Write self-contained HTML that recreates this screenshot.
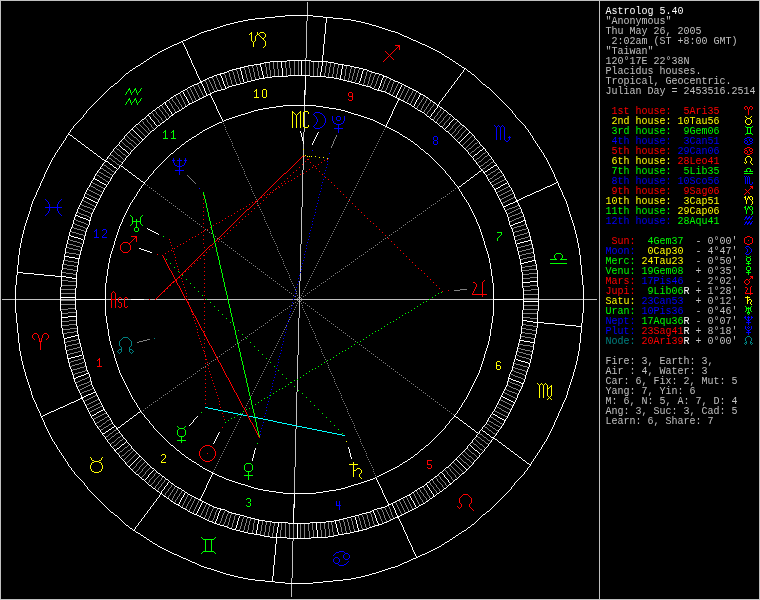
<!DOCTYPE html><html><head><meta charset="utf-8"><style>
html,body{margin:0;padding:0;background:#000;width:760px;height:600px;overflow:hidden}
.t{position:absolute;left:605.5px;height:10px;line-height:10px;font-family:"Liberation Mono";font-size:10px;white-space:pre}
#sb{position:absolute;left:0;top:0;width:760px;height:600px;filter:url(#crisp)}
</style></head><body><div style="position:relative;width:760px;height:600px"><svg width="760" height="600" viewBox="0 0 760 600" shape-rendering="crispEdges" style="position:absolute;left:0;top:0"><path fill="#c0c0c0" d="M0 0h760v1h-760zM0 1h1v598h-1zM599 1h1v598h-1zM759 1h1v598h-1zM307 2h1v13h-1zM307 16h1v5h-1zM306 21h1v37h-1zM305 58h1v2h-1zM305 90h1v5h-1zM304 106h1v5h-1zM304 112h1v15h-1zM304 128h1v4h-1zM303 132h1v9h-1zM303 144h1v5h-1zM303 150h1v5h-1zM303 156h1v14h-1zM302 170h1v37h-1zM301 207h1v37h-1zM300 244h1v28h-1zM300 273h1v8h-1zM299 281h1v18h-1zM2 299h13v1h-13zM16 299h44v1h-44zM61 299h14v1h-14zM106 299h5v1h-5zM116 299h2v1h-2zM119 299h5v1h-5zM125 299h6v1h-6zM144 299h5v1h-5zM150 299h5v1h-5zM156 299h29v1h-29zM186 299h1v1h-1zM188 299h16v1h-16zM205 299h1v1h-1zM207 299h20v1h-20zM228 299h65v1h-65zM294 299h5v1h-5zM300 299h129v1h-129zM430 299h63v1h-63zM524 299h14v1h-14zM539 299h44v1h-44zM584 299h13v1h-13zM299 300h1v18h-1zM298 318h1v37h-1zM297 355h1v24h-1zM297 380h1v12h-1zM296 392h1v33h-1zM296 426h1v3h-1zM295 429h1v38h-1zM294 467h1v26h-1zM293 504h1v4h-1zM293 539h1v2h-1zM292 541h1v37h-1zM291 578h1v5h-1zM291 584h1v13h-1zM0 599h760v1h-760z"/><path fill="#ffffff" d="M285 15h28v1h-28zM275 16h10v1h-10zM313 16h10v1h-10zM265 17h10v1h-10zM323 17h10v1h-10zM255 18h10v1h-10zM326 18h1v5h-1zM333 18h10v1h-10zM248 19h7v1h-7zM343 19h8v1h-8zM243 20h5v1h-5zM351 20h5v1h-5zM238 21h5v1h-5zM356 21h5v1h-5zM234 22h4v1h-4zM361 22h4v1h-4zM230 23h4v1h-4zM325 23h1v11h-1zM365 23h4v1h-4zM226 24h4v1h-4zM369 24h3v1h-3zM223 25h3v1h-3zM372 25h4v1h-4zM220 26h3v1h-3zM376 26h3v1h-3zM217 27h3v1h-3zM379 27h3v1h-3zM214 28h3v1h-3zM382 28h3v1h-3zM211 29h3v1h-3zM385 29h3v1h-3zM207 30h4v1h-4zM388 30h3v1h-3zM204 31h3v1h-3zM391 31h4v1h-4zM201 32h3v1h-3zM395 32h3v1h-3zM199 33h2v1h-2zM398 33h2v1h-2zM197 34h2v1h-2zM324 34h1v10h-1zM400 34h2v1h-2zM195 35h2v1h-2zM402 35h2v1h-2zM192 36h3v1h-3zM404 36h3v1h-3zM190 37h2v1h-2zM407 37h2v1h-2zM188 38h2v1h-2zM409 38h2v1h-2zM186 39h2v1h-2zM411 39h2v1h-2zM183 40h3v1h-3zM413 40h3v1h-3zM181 41h2v1h-2zM416 41h2v1h-2zM179 42h2v1h-2zM182 42h1v1h-1zM418 42h2v1h-2zM177 43h2v1h-2zM183 43h1v2h-1zM420 43h2v1h-2zM174 44h3v1h-3zM323 44h1v11h-1zM422 44h3v1h-3zM172 45h2v1h-2zM184 45h1v2h-1zM425 45h2v1h-2zM170 46h2v1h-2zM427 46h2v1h-2zM168 47h2v1h-2zM185 47h1v2h-1zM429 47h2v1h-2zM166 48h2v1h-2zM431 48h2v1h-2zM164 49h2v1h-2zM186 49h1v2h-1zM433 49h2v1h-2zM162 50h2v1h-2zM435 50h2v1h-2zM160 51h2v1h-2zM187 51h1v3h-1zM437 51h2v1h-2zM158 52h2v1h-2zM439 52h2v1h-2zM157 53h1v1h-1zM441 53h1v1h-1zM155 54h2v1h-2zM188 54h1v2h-1zM442 54h2v1h-2zM153 55h2v1h-2zM322 55h1v6h-1zM444 55h1v1h-1zM152 56h1v1h-1zM189 56h1v2h-1zM445 56h2v1h-2zM150 57h2v1h-2zM447 57h2v1h-2zM149 58h1v1h-1zM190 58h1v2h-1zM449 58h1v1h-1zM147 59h2v1h-2zM450 59h2v1h-2zM146 60h1v1h-1zM191 60h1v3h-1zM287 60h24v1h-24zM452 60h1v1h-1zM144 61h2v1h-2zM270 61h17v1h-17zM301 61h1v14h-1zM311 61h17v1h-17zM453 61h2v1h-2zM143 62h1v1h-1zM264 62h6v1h-6zM281 62h1v6h-1zM322 62h1v4h-1zM328 62h6v1h-6zM455 62h1v1h-1zM141 63h2v1h-2zM192 63h1v2h-1zM260 63h4v1h-4zM334 63h4v1h-4zM456 63h2v1h-2zM140 64h1v1h-1zM254 64h7v1h-7zM338 64h6v1h-6zM458 64h1v1h-1zM138 65h2v1h-2zM193 65h1v2h-1zM248 65h6v1h-6zM260 65h1v2h-1zM342 65h1v4h-1zM344 65h6v1h-6zM459 65h2v1h-2zM136 66h2v1h-2zM244 66h4v1h-4zM321 66h1v6h-1zM350 66h4v1h-4zM461 66h1v1h-1zM135 67h1v1h-1zM194 67h1v2h-1zM240 67h4v1h-4zM261 67h1v4h-1zM354 67h5v1h-5zM462 67h2v1h-2zM133 68h2v1h-2zM236 68h5v1h-5zM282 68h1v8h-1zM359 68h4v1h-4zM464 68h2v1h-2zM132 69h1v1h-1zM195 69h1v2h-1zM232 69h4v1h-4zM240 69h1v2h-1zM341 69h1v6h-1zM363 69h4v1h-4zM464 69h1v1h-1zM466 69h1v1h-1zM130 70h2v1h-2zM229 70h3v1h-3zM363 70h1v1h-1zM367 70h2v1h-2zM463 70h1v2h-1zM467 70h1v1h-1zM129 71h1v1h-1zM196 71h1v3h-1zM227 71h2v1h-2zM241 71h1v4h-1zM262 71h1v4h-1zM362 71h1v3h-1zM369 71h3v1h-3zM468 71h2v1h-2zM128 72h1v1h-1zM224 72h3v1h-3zM320 72h1v4h-1zM372 72h3v1h-3zM462 72h1v1h-1zM470 72h1v1h-1zM126 73h2v1h-2zM220 73h4v1h-4zM375 73h4v1h-4zM461 73h1v1h-1zM471 73h1v1h-1zM125 74h1v1h-1zM197 74h1v2h-1zM217 74h4v1h-4zM361 74h1v4h-1zM379 74h3v1h-3zM460 74h1v2h-1zM472 74h2v1h-2zM124 75h1v1h-1zM214 75h3v1h-3zM220 75h1v1h-1zM242 75h1v4h-1zM263 75h1v3h-1zM288 75h22v1h-22zM340 75h1v4h-1zM382 75h2v1h-2zM474 75h1v1h-1zM123 76h1v1h-1zM198 76h1v2h-1zM212 76h2v1h-2zM221 76h1v2h-1zM272 76h16v1h-16zM305 76h1v14h-1zM310 76h16v1h-16zM383 76h4v1h-4zM459 76h1v1h-1zM475 76h1v1h-1zM122 77h1v1h-1zM209 77h3v1h-3zM265 77h7v1h-7zM326 77h8v1h-8zM383 77h1v1h-1zM387 77h2v1h-2zM458 77h1v1h-1zM476 77h1v1h-1zM121 78h1v1h-1zM199 78h1v2h-1zM207 78h2v1h-2zM222 78h1v3h-1zM259 78h6v1h-6zM334 78h5v1h-5zM360 78h1v3h-1zM382 78h1v2h-1zM389 78h2v1h-2zM457 78h1v2h-1zM477 78h1v1h-1zM120 79h1v1h-1zM205 79h2v1h-2zM243 79h1v3h-1zM255 79h4v1h-4zM339 79h4v1h-4zM391 79h2v1h-2zM478 79h1v1h-1zM119 80h1v1h-1zM200 80h1v1h-1zM203 80h2v1h-2zM251 80h4v1h-4zM343 80h4v1h-4zM381 80h1v3h-1zM393 80h2v1h-2zM456 80h1v1h-1zM479 80h1v1h-1zM118 81h1v1h-1zM200 81h3v1h-3zM223 81h1v3h-1zM247 81h4v1h-4zM347 81h4v1h-4zM359 81h1v2h-1zM395 81h3v1h-3zM455 81h1v1h-1zM480 81h1v1h-1zM117 82h1v1h-1zM199 82h3v1h-3zM244 82h3v1h-3zM351 82h4v1h-4zM398 82h2v1h-2zM454 82h1v2h-1zM481 82h1v1h-1zM115 83h2v1h-2zM197 83h2v1h-2zM201 83h1v1h-1zM240 83h4v1h-4zM355 83h4v1h-4zM380 83h1v3h-1zM400 83h2v1h-2zM482 83h1v1h-1zM114 84h1v1h-1zM194 84h3v1h-3zM202 84h1v2h-1zM224 84h1v2h-1zM236 84h4v1h-4zM359 84h3v1h-3zM402 84h2v1h-2zM453 84h1v1h-1zM483 84h2v1h-2zM113 85h1v1h-1zM192 85h2v1h-2zM232 85h4v1h-4zM362 85h4v1h-4zM401 85h1v2h-1zM404 85h2v1h-2zM452 85h1v1h-1zM485 85h1v1h-1zM111 86h2v1h-2zM190 86h2v1h-2zM203 86h1v2h-1zM225 86h1v2h-1zM229 86h3v1h-3zM366 86h4v1h-4zM379 86h1v2h-1zM406 86h2v1h-2zM451 86h1v2h-1zM486 86h1v1h-1zM110 87h1v1h-1zM188 87h2v1h-2zM227 87h2v1h-2zM370 87h2v1h-2zM400 87h1v2h-1zM408 87h2v1h-2zM487 87h2v1h-2zM109 88h1v1h-1zM187 88h1v1h-1zM204 88h1v3h-1zM225 88h2v1h-2zM372 88h2v1h-2zM378 88h1v2h-1zM410 88h2v1h-2zM450 88h1v1h-1zM489 88h1v1h-1zM108 89h1v1h-1zM185 89h2v1h-2zM221 89h4v1h-4zM374 89h3v1h-3zM399 89h1v2h-1zM412 89h2v1h-2zM449 89h1v1h-1zM490 89h1v1h-1zM107 90h1v1h-1zM183 90h2v1h-2zM217 90h4v1h-4zM304 90h1v15h-1zM377 90h4v1h-4zM414 90h2v1h-2zM448 90h1v2h-1zM491 90h1v1h-1zM106 91h1v1h-1zM181 91h2v1h-2zM205 91h1v2h-1zM214 91h3v1h-3zM381 91h4v1h-4zM398 91h1v2h-1zM416 91h2v1h-2zM492 91h1v1h-1zM105 92h1v1h-1zM180 92h1v1h-1zM183 92h1v2h-1zM212 92h2v1h-2zM385 92h2v1h-2zM418 92h1v1h-1zM447 92h1v1h-1zM493 92h1v1h-1zM104 93h1v1h-1zM178 93h2v1h-2zM206 93h1v2h-1zM210 93h2v1h-2zM387 93h2v1h-2zM397 93h1v2h-1zM419 93h2v1h-2zM446 93h1v1h-1zM494 93h1v1h-1zM103 94h1v1h-1zM176 94h2v1h-2zM184 94h1v2h-1zM208 94h3v1h-3zM389 94h2v1h-2zM420 94h3v1h-3zM445 94h1v2h-1zM495 94h1v1h-1zM102 95h1v1h-1zM174 95h2v1h-2zM206 95h2v1h-2zM210 95h1v1h-1zM391 95h2v1h-2zM396 95h1v2h-1zM419 95h1v2h-1zM423 95h2v1h-2zM496 95h1v1h-1zM101 96h1v1h-1zM173 96h1v1h-1zM185 96h1v1h-1zM204 96h2v1h-2zM211 96h1v2h-1zM393 96h2v1h-2zM425 96h1v1h-1zM444 96h1v1h-1zM497 96h1v1h-1zM100 97h1v1h-1zM171 97h2v1h-2zM186 97h1v2h-1zM202 97h2v1h-2zM395 97h2v1h-2zM418 97h1v2h-1zM426 97h2v1h-2zM443 97h1v1h-1zM498 97h1v1h-1zM99 98h1v1h-1zM170 98h1v1h-1zM200 98h2v1h-2zM212 98h1v2h-1zM397 98h2v1h-2zM428 98h1v1h-1zM442 98h1v2h-1zM499 98h1v1h-1zM98 99h1v1h-1zM169 99h1v1h-1zM187 99h1v2h-1zM198 99h2v1h-2zM398 99h3v1h-3zM417 99h1v1h-1zM429 99h1v1h-1zM500 99h1v1h-1zM97 100h1v1h-1zM167 100h2v1h-2zM196 100h2v1h-2zM213 100h1v2h-1zM398 100h1v1h-1zM401 100h2v1h-2zM416 100h1v2h-1zM430 100h2v1h-2zM441 100h1v1h-1zM501 100h1v1h-1zM96 101h1v1h-1zM166 101h1v1h-1zM188 101h1v2h-1zM194 101h2v1h-2zM397 101h1v2h-1zM403 101h2v1h-2zM432 101h1v1h-1zM440 101h1v1h-1zM502 101h1v1h-1zM95 102h1v1h-1zM164 102h2v1h-2zM192 102h2v1h-2zM214 102h1v2h-1zM405 102h2v1h-2zM415 102h1v2h-1zM433 102h2v1h-2zM439 102h1v2h-1zM503 102h1v1h-1zM94 103h1v1h-1zM163 103h1v1h-1zM165 103h1v2h-1zM189 103h3v1h-3zM396 103h1v2h-1zM407 103h2v1h-2zM435 103h1v1h-1zM504 103h1v1h-1zM93 104h1v1h-1zM162 104h1v1h-1zM188 104h2v1h-2zM215 104h1v2h-1zM409 104h2v1h-2zM414 104h1v2h-1zM436 104h1v1h-1zM438 104h1v1h-1zM505 104h1v1h-1zM92 105h1v1h-1zM160 105h2v1h-2zM166 105h1v1h-1zM187 105h1v1h-1zM283 105h33v1h-33zM395 105h1v2h-1zM411 105h1v1h-1zM437 105h2v1h-2zM506 105h1v1h-1zM91 106h1v1h-1zM159 106h1v1h-1zM167 106h1v2h-1zM185 106h2v1h-2zM216 106h1v3h-1zM276 106h7v1h-7zM316 106h7v1h-7zM412 106h2v1h-2zM437 106h1v2h-1zM439 106h1v1h-1zM507 106h1v1h-1zM90 107h1v1h-1zM157 107h2v1h-2zM184 107h1v1h-1zM269 107h7v1h-7zM323 107h6v1h-6zM394 107h1v2h-1zM414 107h1v1h-1zM440 107h2v1h-2zM508 107h1v1h-1zM89 108h1v1h-1zM156 108h1v1h-1zM168 108h1v1h-1zM182 108h2v1h-2zM263 108h6v1h-6zM329 108h7v1h-7zM415 108h2v1h-2zM436 108h1v1h-1zM442 108h1v1h-1zM509 108h1v1h-1zM88 109h1v1h-1zM155 109h1v1h-1zM169 109h1v2h-1zM181 109h1v1h-1zM217 109h1v2h-1zM258 109h5v1h-5zM336 109h5v1h-5zM393 109h1v2h-1zM417 109h1v1h-1zM435 109h1v1h-1zM443 109h1v1h-1zM510 109h1v1h-1zM87 110h1v1h-1zM153 110h2v1h-2zM179 110h2v1h-2zM254 110h4v1h-4zM341 110h4v1h-4zM418 110h2v1h-2zM434 110h1v2h-1zM444 110h2v1h-2zM511 110h1v1h-1zM86 111h1v2h-1zM152 111h1v1h-1zM170 111h1v1h-1zM177 111h2v1h-2zM218 111h1v2h-1zM251 111h3v1h-3zM345 111h3v1h-3zM392 111h1v3h-1zM420 111h2v1h-2zM446 111h1v1h-1zM512 111h1v2h-1zM151 112h1v1h-1zM171 112h1v2h-1zM175 112h2v1h-2zM248 112h3v1h-3zM348 112h3v1h-3zM422 112h2v1h-2zM433 112h1v1h-1zM447 112h1v1h-1zM85 113h1v1h-1zM149 113h2v1h-2zM174 113h1v1h-1zM219 113h1v2h-1zM245 113h3v1h-3zM351 113h3v1h-3zM424 113h1v1h-1zM432 113h1v1h-1zM448 113h1v1h-1zM513 113h1v1h-1zM84 114h1v1h-1zM148 114h1v1h-1zM172 114h2v1h-2zM241 114h4v1h-4zM354 114h4v1h-4zM391 114h1v2h-1zM425 114h1v1h-1zM431 114h1v2h-1zM449 114h2v1h-2zM514 114h1v1h-1zM83 115h1v2h-1zM147 115h2v1h-2zM171 115h2v1h-2zM220 115h1v2h-1zM238 115h3v1h-3zM358 115h3v1h-3zM426 115h1v1h-1zM451 115h1v1h-1zM515 115h1v2h-1zM146 116h1v1h-1zM149 116h1v1h-1zM170 116h1v1h-1zM235 116h3v1h-3zM361 116h3v1h-3zM390 116h1v2h-1zM427 116h2v1h-2zM430 116h1v1h-1zM452 116h1v1h-1zM82 117h1v1h-1zM145 117h1v1h-1zM150 117h1v2h-1zM169 117h1v1h-1zM221 117h1v2h-1zM232 117h3v1h-3zM364 117h3v1h-3zM429 117h1v1h-1zM453 117h1v1h-1zM516 117h1v1h-1zM81 118h1v1h-1zM144 118h1v1h-1zM168 118h1v1h-1zM229 118h3v1h-3zM367 118h3v1h-3zM389 118h1v2h-1zM430 118h1v1h-1zM454 118h1v1h-1zM517 118h1v1h-1zM80 119h1v1h-1zM142 119h2v1h-2zM151 119h1v1h-1zM166 119h2v1h-2zM222 119h1v2h-1zM226 119h3v1h-3zM370 119h3v1h-3zM431 119h2v1h-2zM453 119h1v1h-1zM455 119h2v1h-2zM518 119h1v1h-1zM79 120h1v1h-1zM141 120h1v1h-1zM152 120h1v1h-1zM165 120h1v1h-1zM224 120h2v1h-2zM373 120h2v1h-2zM388 120h1v2h-1zM433 120h1v1h-1zM452 120h1v1h-1zM457 120h1v1h-1zM519 120h1v1h-1zM78 121h1v1h-1zM140 121h1v1h-1zM153 121h1v1h-1zM164 121h1v1h-1zM223 121h1v1h-1zM375 121h2v1h-2zM434 121h1v1h-1zM451 121h1v1h-1zM458 121h1v1h-1zM520 121h1v1h-1zM77 122h1v1h-1zM139 122h1v1h-1zM154 122h1v2h-1zM162 122h2v1h-2zM219 122h3v1h-3zM377 122h2v1h-2zM387 122h1v2h-1zM435 122h2v1h-2zM450 122h1v1h-1zM459 122h1v1h-1zM521 122h1v1h-1zM76 123h1v1h-1zM138 123h1v1h-1zM161 123h1v1h-1zM217 123h2v1h-2zM379 123h2v1h-2zM437 123h1v1h-1zM449 123h1v2h-1zM460 123h1v1h-1zM522 123h1v1h-1zM75 124h1v1h-1zM136 124h2v1h-2zM155 124h1v1h-1zM160 124h1v1h-1zM215 124h2v1h-2zM381 124h2v1h-2zM386 124h1v2h-1zM438 124h1v1h-1zM461 124h1v1h-1zM523 124h1v1h-1zM74 125h1v1h-1zM135 125h1v1h-1zM156 125h1v1h-1zM158 125h2v1h-2zM213 125h2v1h-2zM383 125h2v1h-2zM439 125h1v1h-1zM448 125h1v1h-1zM462 125h2v1h-2zM524 125h1v1h-1zM73 126h1v2h-1zM134 126h1v1h-1zM157 126h1v1h-1zM211 126h2v1h-2zM385 126h2v1h-2zM440 126h2v1h-2zM447 126h1v1h-1zM464 126h1v1h-1zM525 126h1v2h-1zM133 127h1v1h-1zM156 127h1v1h-1zM209 127h2v1h-2zM387 127h2v1h-2zM442 127h1v1h-1zM446 127h1v1h-1zM465 127h1v1h-1zM72 128h1v1h-1zM132 128h1v1h-1zM155 128h1v1h-1zM207 128h2v1h-2zM389 128h2v1h-2zM443 128h1v1h-1zM445 128h1v1h-1zM466 128h1v1h-1zM526 128h1v1h-1zM71 129h1v1h-1zM131 129h2v1h-2zM154 129h1v1h-1zM205 129h2v1h-2zM391 129h2v1h-2zM444 129h1v1h-1zM467 129h1v1h-1zM527 129h1v1h-1zM70 130h1v2h-1zM130 130h1v1h-1zM133 130h1v1h-1zM152 130h2v1h-2zM203 130h2v1h-2zM393 130h2v1h-2zM445 130h1v1h-1zM468 130h1v1h-1zM528 130h1v2h-1zM129 131h1v1h-1zM134 131h1v1h-1zM151 131h1v1h-1zM202 131h1v1h-1zM300 131h1v2h-1zM395 131h2v1h-2zM446 131h2v1h-2zM469 131h1v1h-1zM69 132h1v1h-1zM128 132h1v1h-1zM135 132h1v1h-1zM150 132h1v1h-1zM200 132h2v1h-2zM318 132h1v1h-1zM397 132h2v1h-2zM448 132h1v1h-1zM469 132h2v1h-2zM529 132h1v1h-1zM68 133h1v1h-1zM127 133h1v1h-1zM136 133h1v1h-1zM149 133h1v1h-1zM199 133h1v1h-1zM301 133h1v4h-1zM317 133h1v2h-1zM399 133h1v1h-1zM449 133h1v1h-1zM468 133h1v1h-1zM471 133h1v1h-1zM530 133h1v2h-1zM68 134h2v1h-2zM126 134h1v1h-1zM137 134h1v1h-1zM148 134h1v1h-1zM197 134h2v1h-2zM400 134h2v1h-2zM450 134h1v1h-1zM467 134h1v1h-1zM472 134h1v1h-1zM67 135h1v1h-1zM70 135h2v1h-2zM125 135h1v1h-1zM138 135h1v1h-1zM147 135h1v1h-1zM196 135h1v1h-1zM316 135h1v2h-1zM402 135h1v1h-1zM451 135h1v1h-1zM466 135h1v1h-1zM473 135h1v1h-1zM531 135h1v1h-1zM66 136h1v2h-1zM72 136h1v1h-1zM124 136h1v2h-1zM139 136h1v1h-1zM146 136h1v1h-1zM194 136h2v1h-2zM403 136h2v1h-2zM452 136h1v1h-1zM465 136h1v1h-1zM474 136h1v2h-1zM532 136h1v2h-1zM73 137h1v1h-1zM140 137h1v1h-1zM145 137h1v1h-1zM192 137h2v1h-2zM302 137h1v4h-1zM315 137h1v2h-1zM405 137h2v1h-2zM453 137h1v1h-1zM464 137h1v1h-1zM65 138h1v2h-1zM74 138h2v1h-2zM123 138h1v1h-1zM141 138h1v1h-1zM144 138h1v1h-1zM191 138h1v1h-1zM407 138h1v1h-1zM454 138h1v1h-1zM463 138h1v1h-1zM475 138h1v1h-1zM533 138h1v2h-1zM76 139h1v1h-1zM122 139h1v1h-1zM142 139h2v1h-2zM189 139h2v1h-2zM314 139h1v2h-1zM408 139h2v1h-2zM455 139h1v1h-1zM462 139h1v1h-1zM476 139h1v1h-1zM64 140h1v1h-1zM77 140h1v1h-1zM121 140h1v1h-1zM142 140h1v1h-1zM188 140h1v1h-1zM410 140h1v1h-1zM456 140h1v1h-1zM461 140h1v1h-1zM477 140h1v1h-1zM534 140h1v1h-1zM63 141h1v2h-1zM78 141h2v1h-2zM120 141h1v1h-1zM141 141h1v1h-1zM186 141h2v1h-2zM303 141h1v3h-1zM313 141h1v2h-1zM411 141h2v1h-2zM457 141h1v1h-1zM460 141h1v1h-1zM478 141h1v1h-1zM535 141h1v2h-1zM80 142h1v1h-1zM119 142h1v2h-1zM140 142h1v1h-1zM185 142h1v1h-1zM413 142h1v1h-1zM458 142h2v1h-2zM479 142h1v2h-1zM62 143h1v1h-1zM81 143h1v1h-1zM139 143h1v1h-1zM184 143h1v1h-1zM312 143h1v2h-1zM414 143h1v1h-1zM459 143h1v1h-1zM536 143h1v1h-1zM61 144h1v2h-1zM82 144h2v1h-2zM118 144h1v1h-1zM138 144h1v1h-1zM182 144h2v1h-2zM415 144h2v1h-2zM460 144h1v1h-1zM480 144h1v1h-1zM537 144h1v2h-1zM84 145h1v1h-1zM117 145h1v1h-1zM119 145h1v1h-1zM137 145h1v1h-1zM181 145h1v1h-1zM417 145h1v1h-1zM461 145h1v1h-1zM481 145h1v1h-1zM60 146h1v1h-1zM85 146h1v1h-1zM116 146h1v1h-1zM120 146h1v1h-1zM136 146h1v1h-1zM180 146h1v1h-1zM418 146h1v1h-1zM462 146h1v1h-1zM482 146h1v1h-1zM538 146h1v1h-1zM59 147h1v2h-1zM86 147h2v1h-2zM115 147h1v1h-1zM121 147h1v1h-1zM135 147h1v1h-1zM179 147h1v1h-1zM419 147h1v1h-1zM463 147h1v1h-1zM483 147h1v1h-1zM539 147h1v2h-1zM88 148h1v1h-1zM114 148h1v1h-1zM122 148h1v1h-1zM134 148h1v1h-1zM177 148h2v1h-2zM420 148h1v1h-1zM464 148h1v1h-1zM483 148h2v1h-2zM58 149h1v1h-1zM89 149h1v1h-1zM113 149h1v2h-1zM123 149h2v1h-2zM133 149h1v1h-1zM176 149h1v1h-1zM421 149h2v1h-2zM465 149h1v1h-1zM482 149h1v1h-1zM485 149h1v2h-1zM540 149h1v1h-1zM57 150h1v2h-1zM90 150h2v1h-2zM125 150h1v1h-1zM132 150h1v1h-1zM175 150h1v1h-1zM423 150h1v1h-1zM466 150h1v1h-1zM480 150h2v1h-2zM541 150h1v2h-1zM92 151h1v1h-1zM112 151h1v1h-1zM126 151h1v1h-1zM131 151h1v1h-1zM174 151h1v1h-1zM424 151h1v1h-1zM467 151h1v1h-1zM479 151h1v1h-1zM486 151h1v1h-1zM56 152h1v1h-1zM93 152h1v1h-1zM111 152h1v1h-1zM127 152h1v1h-1zM130 152h1v2h-1zM173 152h1v1h-1zM425 152h1v1h-1zM468 152h1v2h-1zM478 152h1v1h-1zM487 152h1v1h-1zM542 152h1v1h-1zM55 153h1v2h-1zM94 153h2v1h-2zM110 153h1v2h-1zM128 153h1v1h-1zM171 153h2v1h-2zM426 153h2v1h-2zM477 153h1v1h-1zM488 153h1v2h-1zM543 153h1v2h-1zM96 154h1v1h-1zM129 154h1v1h-1zM170 154h1v1h-1zM428 154h1v1h-1zM469 154h1v1h-1zM475 154h2v1h-2zM54 155h1v2h-1zM97 155h1v1h-1zM109 155h1v1h-1zM128 155h1v1h-1zM169 155h1v1h-1zM429 155h1v1h-1zM470 155h1v1h-1zM474 155h1v1h-1zM489 155h1v1h-1zM544 155h1v2h-1zM98 156h2v1h-2zM108 156h1v1h-1zM127 156h1v1h-1zM168 156h1v1h-1zM430 156h1v1h-1zM471 156h1v1h-1zM473 156h1v1h-1zM490 156h1v1h-1zM53 157h1v1h-1zM100 157h1v1h-1zM107 157h1v2h-1zM126 157h1v1h-1zM167 157h1v1h-1zM431 157h1v1h-1zM472 157h1v1h-1zM491 157h1v2h-1zM545 157h1v1h-1zM52 158h1v2h-1zM101 158h1v1h-1zM125 158h1v2h-1zM166 158h1v1h-1zM432 158h1v1h-1zM473 158h1v2h-1zM546 158h1v2h-1zM102 159h2v1h-2zM106 159h1v1h-1zM165 159h1v1h-1zM433 159h1v1h-1zM492 159h1v1h-1zM51 160h1v2h-1zM104 160h2v1h-2zM124 160h1v1h-1zM164 160h1v1h-1zM434 160h1v1h-1zM474 160h1v1h-1zM493 160h1v2h-1zM547 160h1v2h-1zM105 161h3v1h-3zM123 161h1v1h-1zM163 161h1v1h-1zM435 161h1v1h-1zM475 161h1v1h-1zM50 162h1v2h-1zM104 162h1v1h-1zM108 162h1v1h-1zM122 162h1v2h-1zM162 162h1v1h-1zM436 162h1v1h-1zM476 162h1v2h-1zM494 162h1v1h-1zM548 162h1v2h-1zM103 163h1v1h-1zM109 163h1v1h-1zM161 163h1v1h-1zM437 163h1v1h-1zM495 163h1v1h-1zM49 164h1v2h-1zM102 164h1v2h-1zM110 164h2v1h-2zM121 164h1v1h-1zM160 164h1v1h-1zM438 164h1v1h-1zM477 164h1v1h-1zM496 164h1v1h-1zM549 164h1v2h-1zM112 165h1v1h-1zM120 165h1v1h-1zM159 165h1v1h-1zM439 165h1v1h-1zM478 165h1v1h-1zM494 165h3v1h-3zM48 166h1v2h-1zM101 166h1v1h-1zM113 166h1v1h-1zM119 166h1v2h-1zM121 166h2v1h-2zM158 166h1v1h-1zM440 166h1v1h-1zM479 166h1v2h-1zM493 166h1v1h-1zM497 166h1v1h-1zM550 166h1v2h-1zM100 167h1v2h-1zM114 167h2v1h-2zM123 167h1v1h-1zM157 167h1v1h-1zM441 167h1v1h-1zM491 167h2v1h-2zM498 167h1v2h-1zM47 168h1v2h-1zM116 168h1v1h-1zM118 168h1v1h-1zM124 168h1v1h-1zM156 168h1v1h-1zM442 168h1v1h-1zM480 168h1v1h-1zM490 168h1v1h-1zM551 168h1v2h-1zM99 169h1v1h-1zM117 169h1v1h-1zM125 169h2v1h-2zM155 169h1v1h-1zM443 169h1v1h-1zM481 169h1v1h-1zM488 169h2v1h-2zM499 169h1v1h-1zM46 170h1v2h-1zM98 170h1v1h-1zM116 170h1v1h-1zM127 170h1v1h-1zM154 170h1v1h-1zM444 170h1v1h-1zM481 170h2v1h-2zM487 170h1v1h-1zM500 170h1v1h-1zM552 170h1v2h-1zM97 171h1v2h-1zM115 171h1v2h-1zM128 171h1v1h-1zM153 171h1v2h-1zM445 171h1v2h-1zM479 171h2v1h-2zM483 171h1v1h-1zM485 171h2v1h-2zM501 171h1v2h-1zM45 172h1v2h-1zM129 172h2v1h-2zM478 172h1v1h-1zM483 172h2v1h-2zM553 172h1v2h-1zM96 173h1v1h-1zM114 173h1v1h-1zM131 173h1v1h-1zM152 173h1v1h-1zM446 173h1v1h-1zM477 173h1v1h-1zM484 173h1v1h-1zM502 173h1v1h-1zM44 174h1v3h-1zM95 174h1v2h-1zM113 174h1v1h-1zM132 174h1v1h-1zM151 174h1v1h-1zM447 174h1v1h-1zM475 174h2v1h-2zM485 174h1v1h-1zM503 174h1v2h-1zM554 174h1v3h-1zM112 175h1v2h-1zM133 175h2v1h-2zM150 175h1v1h-1zM448 175h1v1h-1zM474 175h1v1h-1zM486 175h1v2h-1zM94 176h1v2h-1zM135 176h1v1h-1zM149 176h1v1h-1zM449 176h1v1h-1zM473 176h1v1h-1zM504 176h1v2h-1zM43 177h1v2h-1zM111 177h1v2h-1zM136 177h1v1h-1zM148 177h1v2h-1zM450 177h1v2h-1zM471 177h2v1h-2zM487 177h1v2h-1zM555 177h1v2h-1zM93 178h2v1h-2zM137 178h2v1h-2zM470 178h1v1h-1zM505 178h1v2h-1zM42 179h1v2h-1zM93 179h1v1h-1zM95 179h2v1h-2zM110 179h1v2h-1zM139 179h1v1h-1zM147 179h1v1h-1zM451 179h1v1h-1zM469 179h1v1h-1zM488 179h1v2h-1zM556 179h1v2h-1zM92 180h1v1h-1zM97 180h2v1h-2zM140 180h1v1h-1zM146 180h1v1h-1zM452 180h1v1h-1zM467 180h2v1h-2zM506 180h1v1h-1zM41 181h1v2h-1zM91 181h1v2h-1zM99 181h1v1h-1zM109 181h1v1h-1zM141 181h2v1h-2zM145 181h1v1h-1zM453 181h1v1h-1zM466 181h1v1h-1zM489 181h1v1h-1zM507 181h1v2h-1zM557 181h1v1h-1zM100 182h2v1h-2zM108 182h1v2h-1zM143 182h2v1h-2zM454 182h1v2h-1zM465 182h1v1h-1zM490 182h1v2h-1zM556 182h2v1h-2zM40 183h1v3h-1zM90 183h1v2h-1zM102 183h2v1h-2zM144 183h1v1h-1zM463 183h2v1h-2zM505 183h2v1h-2zM508 183h1v2h-1zM554 183h2v1h-2zM558 183h1v3h-1zM104 184h2v1h-2zM107 184h1v1h-1zM143 184h1v1h-1zM455 184h1v1h-1zM462 184h1v1h-1zM491 184h1v1h-1zM503 184h2v1h-2zM552 184h2v1h-2zM89 185h1v2h-1zM106 185h1v2h-1zM142 185h1v1h-1zM456 185h1v1h-1zM461 185h1v1h-1zM492 185h1v2h-1zM501 185h2v1h-2zM509 185h1v2h-1zM550 185h2v1h-2zM39 186h1v2h-1zM141 186h1v2h-1zM457 186h1v1h-1zM459 186h2v1h-2zM500 186h1v1h-1zM547 186h3v1h-3zM559 186h1v2h-1zM88 187h1v1h-1zM105 187h1v1h-1zM458 187h1v2h-1zM493 187h1v1h-1zM498 187h2v1h-2zM510 187h1v1h-1zM545 187h2v1h-2zM38 188h1v2h-1zM87 188h1v2h-1zM104 188h1v2h-1zM140 188h1v1h-1zM494 188h1v1h-1zM496 188h2v1h-2zM511 188h1v2h-1zM543 188h2v1h-2zM560 188h1v2h-1zM139 189h1v2h-1zM459 189h1v2h-1zM494 189h2v1h-2zM541 189h2v1h-2zM37 190h1v2h-1zM86 190h1v2h-1zM103 190h1v2h-1zM495 190h1v2h-1zM512 190h1v2h-1zM539 190h2v1h-2zM561 190h1v2h-1zM138 191h1v1h-1zM460 191h1v1h-1zM536 191h3v1h-3zM36 192h1v3h-1zM85 192h1v2h-1zM102 192h1v2h-1zM137 192h1v2h-1zM461 192h1v2h-1zM496 192h1v2h-1zM513 192h1v2h-1zM534 192h2v1h-2zM562 192h1v3h-1zM532 193h2v1h-2zM84 194h1v3h-1zM101 194h1v2h-1zM136 194h1v2h-1zM462 194h1v2h-1zM497 194h1v2h-1zM514 194h1v3h-1zM530 194h2v1h-2zM35 195h1v2h-1zM527 195h3v1h-3zM563 195h1v2h-1zM100 196h1v2h-1zM135 196h1v1h-1zM463 196h1v1h-1zM498 196h1v2h-1zM525 196h2v1h-2zM34 197h1v2h-1zM83 197h1v2h-1zM85 197h2v1h-2zM134 197h1v2h-1zM464 197h1v2h-1zM515 197h1v2h-1zM523 197h2v1h-2zM564 197h1v2h-1zM87 198h2v1h-2zM99 198h1v2h-1zM499 198h1v2h-1zM521 198h2v1h-2zM33 199h1v2h-1zM82 199h1v2h-1zM89 199h2v1h-2zM133 199h1v1h-1zM465 199h1v1h-1zM516 199h1v1h-1zM519 199h2v1h-2zM565 199h1v2h-1zM91 200h2v1h-2zM98 200h1v2h-1zM132 200h1v2h-1zM466 200h1v2h-1zM500 200h1v2h-1zM516 200h3v1h-3zM32 201h1v3h-1zM81 201h1v2h-1zM93 201h2v1h-2zM515 201h3v1h-3zM566 201h1v3h-1zM95 202h3v1h-3zM131 202h1v1h-1zM467 202h1v1h-1zM501 202h1v2h-1zM513 202h2v1h-2zM517 202h1v1h-1zM80 203h1v2h-1zM97 203h1v1h-1zM130 203h1v2h-1zM468 203h1v2h-1zM510 203h3v1h-3zM518 203h1v2h-1zM31 204h1v3h-1zM96 204h1v2h-1zM502 204h1v2h-1zM508 204h2v1h-2zM567 204h1v3h-1zM79 205h1v2h-1zM129 205h1v2h-1zM469 205h1v2h-1zM506 205h2v1h-2zM519 205h1v2h-1zM95 206h1v2h-1zM503 206h3v1h-3zM30 207h1v4h-1zM78 207h1v2h-1zM128 207h1v2h-1zM470 207h1v2h-1zM503 207h1v1h-1zM520 207h1v2h-1zM568 207h1v4h-1zM94 208h1v2h-1zM504 208h1v2h-1zM77 209h1v3h-1zM127 209h1v2h-1zM471 209h1v2h-1zM521 209h1v3h-1zM93 210h1v2h-1zM505 210h1v2h-1zM29 211h1v3h-1zM126 211h1v2h-1zM472 211h1v2h-1zM569 211h1v3h-1zM76 212h1v2h-1zM92 212h1v2h-1zM506 212h1v2h-1zM522 212h1v2h-1zM125 213h1v2h-1zM473 213h1v2h-1zM28 214h1v3h-1zM75 214h1v1h-1zM91 214h1v3h-1zM507 214h1v3h-1zM523 214h1v3h-1zM570 214h1v3h-1zM75 215h3v1h-3zM124 215h1v2h-1zM474 215h1v2h-1zM75 216h1v1h-1zM78 216h2v1h-2zM27 217h1v3h-1zM74 217h1v3h-1zM80 217h3v1h-3zM90 217h1v3h-1zM123 217h1v2h-1zM475 217h1v2h-1zM508 217h1v4h-1zM524 217h1v3h-1zM571 217h1v3h-1zM83 218h3v1h-3zM86 219h2v1h-2zM122 219h1v3h-1zM476 219h1v3h-1zM26 220h1v3h-1zM73 220h1v4h-1zM88 220h3v1h-3zM523 220h3v1h-3zM572 220h1v3h-1zM89 221h1v4h-1zM509 221h1v4h-1zM521 221h2v1h-2zM525 221h1v3h-1zM121 222h1v2h-1zM477 222h1v2h-1zM518 222h3v1h-3zM25 223h1v3h-1zM515 223h3v1h-3zM573 223h1v3h-1zM72 224h1v3h-1zM120 224h1v2h-1zM478 224h1v2h-1zM513 224h2v1h-2zM526 224h1v3h-1zM88 225h1v2h-1zM510 225h3v1h-3zM24 226h1v4h-1zM119 226h1v3h-1zM479 226h1v3h-1zM510 226h1v1h-1zM574 226h1v4h-1zM71 227h1v2h-1zM87 227h1v2h-1zM511 227h1v2h-1zM527 227h1v2h-1zM147 228h1v1h-1zM70 229h1v3h-1zM86 229h1v3h-1zM118 229h1v3h-1zM148 229h2v1h-2zM480 229h1v3h-1zM512 229h1v3h-1zM528 229h1v3h-1zM23 230h1v4h-1zM150 230h2v1h-2zM575 230h1v4h-1zM152 231h2v1h-2zM69 232h1v3h-1zM85 232h1v4h-1zM117 232h1v3h-1zM154 232h2v1h-2zM481 232h1v3h-1zM513 232h1v4h-1zM529 232h1v4h-1zM156 233h2v1h-2zM22 234h1v4h-1zM158 234h1v1h-1zM576 234h1v4h-1zM69 235h2v1h-2zM116 235h1v3h-1zM482 235h1v3h-1zM68 236h1v4h-1zM71 236h3v1h-3zM84 236h1v4h-1zM514 236h1v4h-1zM530 236h1v4h-1zM74 237h4v1h-4zM21 238h1v5h-1zM78 238h3v1h-3zM115 238h1v3h-1zM483 238h1v3h-1zM577 238h1v5h-1zM81 239h2v1h-2zM67 240h1v4h-1zM83 240h1v4h-1zM515 240h1v4h-1zM528 240h4v1h-4zM114 241h1v4h-1zM484 241h1v4h-1zM524 241h4v1h-4zM531 241h1v3h-1zM520 242h4v1h-4zM20 243h1v5h-1zM517 243h3v1h-3zM578 243h1v5h-1zM66 244h1v4h-1zM82 244h1v3h-1zM516 244h1v3h-1zM532 244h1v4h-1zM113 245h1v3h-1zM485 245h1v3h-1zM81 247h1v4h-1zM517 247h1v4h-1zM19 248h1v7h-1zM65 248h1v6h-1zM112 248h1v3h-1zM139 248h2v1h-2zM486 248h1v3h-1zM533 248h1v6h-1zM579 248h1v7h-1zM141 249h3v1h-3zM144 250h3v1h-3zM80 251h1v4h-1zM111 251h1v3h-1zM147 251h3v1h-3zM487 251h1v3h-1zM518 251h1v4h-1zM150 252h2v1h-2zM64 254h1v2h-1zM110 254h1v4h-1zM488 254h1v4h-1zM534 254h1v6h-1zM18 255h1v10h-1zM79 255h1v3h-1zM519 255h1v4h-1zM580 255h1v10h-1zM64 256h5v1h-5zM64 257h1v3h-1zM69 257h6v1h-6zM75 258h5v1h-5zM109 258h1v5h-1zM489 258h1v5h-1zM78 259h1v6h-1zM520 259h1v4h-1zM63 260h1v4h-1zM532 260h4v1h-4zM528 261h4v1h-4zM535 261h1v3h-1zM524 262h4v1h-4zM108 263h1v6h-1zM490 263h1v6h-1zM520 263h4v1h-4zM62 264h1v6h-1zM520 264h1v1h-1zM536 264h1v6h-1zM17 265h1v7h-1zM77 265h1v7h-1zM521 265h1v7h-1zM581 265h1v10h-1zM107 269h1v7h-1zM491 269h1v7h-1zM61 270h1v6h-1zM537 270h1v11h-1zM17 272h6v1h-6zM76 272h1v6h-1zM522 272h1v10h-1zM17 273h1v2h-1zM23 273h11v1h-11zM34 274h10v1h-10zM16 275h1v10h-1zM44 275h11v1h-11zM582 275h1v10h-1zM55 276h11v1h-11zM106 276h1v7h-1zM492 276h1v7h-1zM61 277h1v10h-1zM66 277h6v1h-6zM72 278h5v1h-5zM76 279h1v9h-1zM530 281h8v1h-8zM522 282h8v1h-8zM537 282h1v5h-1zM105 283h1v16h-1zM493 283h1v16h-1zM522 283h1v5h-1zM15 285h1v28h-1zM583 285h1v28h-1zM60 287h1v10h-1zM538 287h1v14h-1zM75 288h1v9h-1zM523 288h1v11h-1zM60 297h16v1h-16zM60 298h1v13h-1zM75 298h1v1h-1zM75 299h31v1h-31zM131 299h13v1h-13zM493 299h31v1h-31zM75 300h1v10h-1zM105 300h1v16h-1zM493 300h1v16h-1zM523 300h1v1h-1zM523 301h16v1h-16zM523 302h1v8h-1zM538 302h1v9h-1zM76 310h1v6h-1zM522 310h1v10h-1zM61 311h1v6h-1zM537 311h1v11h-1zM16 313h1v10h-1zM582 313h1v10h-1zM68 316h9v1h-9zM106 316h1v7h-1zM492 316h1v7h-1zM61 317h7v1h-7zM76 317h1v9h-1zM61 318h1v10h-1zM522 320h5v1h-5zM522 321h1v5h-1zM527 321h6v1h-6zM533 322h11v1h-11zM17 323h1v10h-1zM107 323h1v6h-1zM491 323h1v6h-1zM537 323h1v5h-1zM544 323h11v1h-11zM581 323h1v3h-1zM555 324h10v1h-10zM565 325h11v1h-11zM77 326h1v8h-1zM521 326h1v8h-1zM576 326h6v1h-6zM581 327h1v6h-1zM62 328h1v6h-1zM536 328h1v6h-1zM108 329h1v7h-1zM490 329h1v7h-1zM18 333h1v10h-1zM580 333h1v10h-1zM63 334h1v4h-1zM78 334h1v1h-1zM520 334h1v5h-1zM535 334h1v4h-1zM75 335h4v1h-4zM71 336h4v1h-4zM78 336h1v3h-1zM109 336h1v5h-1zM489 336h1v5h-1zM67 337h4v1h-4zM64 338h3v1h-3zM534 338h1v4h-1zM64 339h1v5h-1zM79 339h1v4h-1zM519 339h1v1h-1zM519 340h5v1h-5zM110 341h1v4h-1zM488 341h1v4h-1zM519 341h1v2h-1zM524 341h6v1h-6zM530 342h5v1h-5zM19 343h1v8h-1zM80 343h1v4h-1zM518 343h1v4h-1zM534 343h1v1h-1zM579 343h1v8h-1zM65 344h1v6h-1zM533 344h1v6h-1zM111 345h1v3h-1zM487 345h1v3h-1zM81 347h1v4h-1zM517 347h1v4h-1zM112 348h1v3h-1zM486 348h1v3h-1zM66 350h1v4h-1zM532 350h1v4h-1zM20 351h1v5h-1zM82 351h1v4h-1zM113 351h1v3h-1zM485 351h1v3h-1zM516 351h1v4h-1zM578 351h1v5h-1zM67 354h1v4h-1zM114 354h1v4h-1zM484 354h1v4h-1zM531 354h1v5h-1zM79 355h3v1h-3zM83 355h1v4h-1zM515 355h1v4h-1zM21 356h1v5h-1zM75 356h4v1h-4zM577 356h1v5h-1zM71 357h4v1h-4zM67 358h4v1h-4zM115 358h1v3h-1zM483 358h1v3h-1zM68 359h1v4h-1zM84 359h1v3h-1zM514 359h1v3h-1zM516 359h2v1h-2zM530 359h1v4h-1zM518 360h3v1h-3zM22 361h1v4h-1zM116 361h1v3h-1zM482 361h1v3h-1zM521 361h4v1h-4zM576 361h1v4h-1zM85 362h1v4h-1zM513 362h1v4h-1zM525 362h3v1h-3zM69 363h1v4h-1zM528 363h2v1h-2zM117 364h1v3h-1zM481 364h1v3h-1zM529 364h1v3h-1zM23 365h1v4h-1zM575 365h1v4h-1zM86 366h1v4h-1zM512 366h1v4h-1zM70 367h1v2h-1zM118 367h1v3h-1zM480 367h1v3h-1zM528 367h1v2h-1zM24 369h1v3h-1zM71 369h1v3h-1zM527 369h1v3h-1zM574 369h1v3h-1zM87 370h1v2h-1zM119 370h1v3h-1zM479 370h1v3h-1zM511 370h1v2h-1zM25 372h1v4h-1zM72 372h1v3h-1zM88 372h1v1h-1zM510 372h1v2h-1zM526 372h1v3h-1zM573 372h1v4h-1zM86 373h3v1h-3zM120 373h1v2h-1zM478 373h1v2h-1zM84 374h2v1h-2zM89 374h1v3h-1zM509 374h1v3h-1zM73 375h1v3h-1zM81 375h3v1h-3zM121 375h1v2h-1zM477 375h1v2h-1zM525 375h1v4h-1zM26 376h1v3h-1zM78 376h3v1h-3zM572 376h1v3h-1zM76 377h2v1h-2zM90 377h1v4h-1zM122 377h1v2h-1zM476 377h1v2h-1zM508 377h1v1h-1zM73 378h3v1h-3zM508 378h3v1h-3zM27 379h1v3h-1zM74 379h1v3h-1zM123 379h1v2h-1zM475 379h1v2h-1zM508 379h1v2h-1zM511 379h2v1h-2zM524 379h1v3h-1zM571 379h1v3h-1zM513 380h3v1h-3zM91 381h1v4h-1zM124 381h1v2h-1zM474 381h1v2h-1zM507 381h1v4h-1zM516 381h3v1h-3zM28 382h1v3h-1zM75 382h1v2h-1zM519 382h2v1h-2zM523 382h1v1h-1zM570 382h1v3h-1zM125 383h1v2h-1zM473 383h1v2h-1zM521 383h3v1h-3zM76 384h1v3h-1zM522 384h1v3h-1zM29 385h1v3h-1zM92 385h1v2h-1zM126 385h1v2h-1zM472 385h1v2h-1zM506 385h1v2h-1zM569 385h1v3h-1zM77 387h1v2h-1zM93 387h1v2h-1zM127 387h1v2h-1zM471 387h1v2h-1zM505 387h1v2h-1zM521 387h1v2h-1zM30 388h1v3h-1zM568 388h1v3h-1zM78 389h1v2h-1zM94 389h1v2h-1zM128 389h1v2h-1zM470 389h1v2h-1zM504 389h1v2h-1zM520 389h1v2h-1zM31 391h1v4h-1zM79 391h1v2h-1zM95 391h1v1h-1zM129 391h1v2h-1zM469 391h1v2h-1zM503 391h1v2h-1zM519 391h1v2h-1zM567 391h1v4h-1zM93 392h3v1h-3zM80 393h1v2h-1zM91 393h2v1h-2zM96 393h1v2h-1zM130 393h1v2h-1zM468 393h1v2h-1zM502 393h1v2h-1zM518 393h1v2h-1zM88 394h3v1h-3zM32 395h1v3h-1zM81 395h1v2h-1zM86 395h2v1h-2zM97 395h1v2h-1zM131 395h1v2h-1zM467 395h1v2h-1zM501 395h1v1h-1zM517 395h1v3h-1zM566 395h1v3h-1zM84 396h2v1h-2zM501 396h2v1h-2zM81 397h3v1h-3zM98 397h1v2h-1zM132 397h1v2h-1zM466 397h1v2h-1zM500 397h1v2h-1zM503 397h2v1h-2zM33 398h1v2h-1zM80 398h3v1h-3zM505 398h2v1h-2zM516 398h1v2h-1zM565 398h1v2h-1zM78 399h2v1h-2zM82 399h1v1h-1zM99 399h1v2h-1zM133 399h1v1h-1zM465 399h1v1h-1zM499 399h1v2h-1zM507 399h2v1h-2zM34 400h1v2h-1zM76 400h2v1h-2zM83 400h1v2h-1zM134 400h1v2h-1zM464 400h1v2h-1zM509 400h2v1h-2zM515 400h1v2h-1zM564 400h1v2h-1zM74 401h2v1h-2zM100 401h1v2h-1zM498 401h1v2h-1zM511 401h2v1h-2zM35 402h1v2h-1zM71 402h3v1h-3zM84 402h1v2h-1zM135 402h1v1h-1zM463 402h1v1h-1zM513 402h2v1h-2zM563 402h1v2h-1zM69 403h2v1h-2zM101 403h1v2h-1zM136 403h1v2h-1zM462 403h1v2h-1zM497 403h1v2h-1zM514 403h1v1h-1zM36 404h1v3h-1zM67 404h2v1h-2zM85 404h1v2h-1zM513 404h1v2h-1zM562 404h1v3h-1zM65 405h2v1h-2zM102 405h1v2h-1zM137 405h1v2h-1zM461 405h1v2h-1zM496 405h1v2h-1zM63 406h2v1h-2zM86 406h1v2h-1zM512 406h1v2h-1zM37 407h1v2h-1zM60 407h3v1h-3zM103 407h1v2h-1zM138 407h1v1h-1zM460 407h1v1h-1zM495 407h1v2h-1zM561 407h1v2h-1zM58 408h2v1h-2zM87 408h1v2h-1zM139 408h1v2h-1zM459 408h1v2h-1zM511 408h1v2h-1zM38 409h1v2h-1zM56 409h2v1h-2zM103 409h2v1h-2zM494 409h1v2h-1zM560 409h1v2h-1zM54 410h2v1h-2zM88 410h1v2h-1zM101 410h2v1h-2zM104 410h1v1h-1zM140 410h1v2h-1zM458 410h1v1h-1zM510 410h1v2h-1zM39 411h1v2h-1zM51 411h3v1h-3zM99 411h2v1h-2zM105 411h1v1h-1zM457 411h1v2h-1zM493 411h1v1h-1zM559 411h1v2h-1zM49 412h2v1h-2zM89 412h1v2h-1zM97 412h2v1h-2zM106 412h1v2h-1zM138 412h2v1h-2zM141 412h1v1h-1zM492 412h1v2h-1zM509 412h1v2h-1zM40 413h1v3h-1zM47 413h2v1h-2zM96 413h1v1h-1zM137 413h1v1h-1zM142 413h1v1h-1zM456 413h1v1h-1zM558 413h1v3h-1zM45 414h2v1h-2zM90 414h1v2h-1zM94 414h2v1h-2zM107 414h1v1h-1zM136 414h1v1h-1zM143 414h1v1h-1zM455 414h1v1h-1zM491 414h1v1h-1zM493 414h2v1h-2zM508 414h1v2h-1zM43 415h2v1h-2zM92 415h2v1h-2zM108 415h1v2h-1zM134 415h2v1h-2zM144 415h1v2h-1zM454 415h1v1h-1zM490 415h1v2h-1zM495 415h2v1h-2zM41 416h2v1h-2zM91 416h1v2h-1zM133 416h1v1h-1zM197 416h1v1h-1zM454 416h2v1h-2zM497 416h1v1h-1zM507 416h1v2h-1zM557 416h1v2h-1zM41 417h1v1h-1zM109 417h1v1h-1zM132 417h1v1h-1zM145 417h1v1h-1zM196 417h1v1h-1zM453 417h1v1h-1zM456 417h2v1h-2zM489 417h1v1h-1zM498 417h2v1h-2zM42 418h1v2h-1zM92 418h1v1h-1zM110 418h1v2h-1zM130 418h2v1h-2zM146 418h1v1h-1zM195 418h1v1h-1zM452 418h1v1h-1zM458 418h1v1h-1zM488 418h1v2h-1zM500 418h2v1h-2zM506 418h1v1h-1zM556 418h1v2h-1zM93 419h1v2h-1zM129 419h1v1h-1zM147 419h1v1h-1zM194 419h1v1h-1zM451 419h1v1h-1zM459 419h1v1h-1zM502 419h2v1h-2zM505 419h1v1h-1zM43 420h1v2h-1zM111 420h1v2h-1zM128 420h1v1h-1zM148 420h1v1h-1zM193 420h1v2h-1zM450 420h1v1h-1zM460 420h2v1h-2zM487 420h1v2h-1zM504 420h2v1h-2zM555 420h1v2h-1zM94 421h1v2h-1zM126 421h2v1h-2zM149 421h1v2h-1zM449 421h1v2h-1zM462 421h1v1h-1zM504 421h1v2h-1zM44 422h1v3h-1zM112 422h1v2h-1zM125 422h1v1h-1zM192 422h1v1h-1zM463 422h1v1h-1zM486 422h1v2h-1zM554 422h1v3h-1zM95 423h1v2h-1zM124 423h1v1h-1zM150 423h1v1h-1zM191 423h1v1h-1zM448 423h1v1h-1zM464 423h2v1h-2zM503 423h1v2h-1zM113 424h1v1h-1zM122 424h2v1h-2zM151 424h1v1h-1zM190 424h1v1h-1zM447 424h1v1h-1zM466 424h1v1h-1zM485 424h1v1h-1zM45 425h1v2h-1zM96 425h1v1h-1zM114 425h1v1h-1zM121 425h1v1h-1zM152 425h1v1h-1zM189 425h1v1h-1zM446 425h1v1h-1zM467 425h1v1h-1zM484 425h1v1h-1zM502 425h1v1h-1zM553 425h1v2h-1zM97 426h1v2h-1zM114 426h2v1h-2zM120 426h1v1h-1zM153 426h1v2h-1zM445 426h1v2h-1zM468 426h2v1h-2zM483 426h1v1h-1zM501 426h1v2h-1zM46 427h1v2h-1zM112 427h2v1h-2zM116 427h1v1h-1zM118 427h2v1h-2zM470 427h1v1h-1zM482 427h1v2h-1zM552 427h1v2h-1zM98 428h1v1h-1zM111 428h1v1h-1zM116 428h2v1h-2zM154 428h1v1h-1zM444 428h1v1h-1zM471 428h1v1h-1zM500 428h1v1h-1zM47 429h1v2h-1zM99 429h1v1h-1zM109 429h2v1h-2zM117 429h1v1h-1zM155 429h1v1h-1zM443 429h1v1h-1zM472 429h2v1h-2zM481 429h1v1h-1zM499 429h1v1h-1zM551 429h1v2h-1zM100 430h1v2h-1zM108 430h1v1h-1zM118 430h1v1h-1zM156 430h1v1h-1zM442 430h1v1h-1zM474 430h1v1h-1zM480 430h1v1h-1zM482 430h1v1h-1zM498 430h1v2h-1zM48 431h1v2h-1zM106 431h2v1h-2zM119 431h1v2h-1zM157 431h1v1h-1zM441 431h1v1h-1zM475 431h1v1h-1zM479 431h1v2h-1zM483 431h2v1h-2zM550 431h1v2h-1zM101 432h1v1h-1zM105 432h1v1h-1zM158 432h1v1h-1zM219 432h1v1h-1zM440 432h1v1h-1zM476 432h2v1h-2zM485 432h1v1h-1zM497 432h1v1h-1zM49 433h1v2h-1zM102 433h3v1h-3zM120 433h1v1h-1zM159 433h1v1h-1zM218 433h1v2h-1zM439 433h1v1h-1zM478 433h1v1h-1zM486 433h1v1h-1zM496 433h1v2h-1zM549 433h1v2h-1zM102 434h1v1h-1zM121 434h1v1h-1zM160 434h1v1h-1zM438 434h1v1h-1zM477 434h1v1h-1zM487 434h2v1h-2zM50 435h1v2h-1zM103 435h1v1h-1zM122 435h1v2h-1zM161 435h1v1h-1zM217 435h1v2h-1zM437 435h1v1h-1zM476 435h1v2h-1zM489 435h1v1h-1zM495 435h1v1h-1zM548 435h1v2h-1zM104 436h1v1h-1zM162 436h1v1h-1zM436 436h1v1h-1zM490 436h1v1h-1zM494 436h1v1h-1zM51 437h1v2h-1zM105 437h1v2h-1zM123 437h1v1h-1zM163 437h1v1h-1zM216 437h1v2h-1zM435 437h1v1h-1zM475 437h1v1h-1zM491 437h3v1h-3zM547 437h1v2h-1zM124 438h1v1h-1zM164 438h1v1h-1zM434 438h1v1h-1zM474 438h1v1h-1zM493 438h2v1h-2zM52 439h1v2h-1zM106 439h1v1h-1zM125 439h1v1h-1zM165 439h1v1h-1zM215 439h1v2h-1zM433 439h1v1h-1zM473 439h1v1h-1zM492 439h1v1h-1zM495 439h2v1h-2zM546 439h1v2h-1zM107 440h1v2h-1zM126 440h1v2h-1zM166 440h1v1h-1zM432 440h1v1h-1zM472 440h1v2h-1zM491 440h1v2h-1zM497 440h1v1h-1zM53 441h1v1h-1zM167 441h1v1h-1zM214 441h1v2h-1zM431 441h1v1h-1zM498 441h1v1h-1zM545 441h1v1h-1zM54 442h1v2h-1zM108 442h1v1h-1zM125 442h1v1h-1zM127 442h1v1h-1zM168 442h1v1h-1zM430 442h1v1h-1zM471 442h1v1h-1zM490 442h1v1h-1zM499 442h2v1h-2zM544 442h1v2h-1zM109 443h1v1h-1zM124 443h1v1h-1zM128 443h1v1h-1zM169 443h1v1h-1zM213 443h1v1h-1zM429 443h1v1h-1zM470 443h1v1h-1zM489 443h1v1h-1zM501 443h1v1h-1zM55 444h1v1h-1zM110 444h1v2h-1zM122 444h2v1h-2zM129 444h1v1h-1zM170 444h1v1h-1zM428 444h1v1h-1zM469 444h1v1h-1zM488 444h1v2h-1zM502 444h1v1h-1zM543 444h1v1h-1zM56 445h1v2h-1zM121 445h1v1h-1zM130 445h1v1h-1zM171 445h2v1h-2zM426 445h2v1h-2zM468 445h1v1h-1zM470 445h1v1h-1zM503 445h2v1h-2zM542 445h1v2h-1zM111 446h1v1h-1zM120 446h1v1h-1zM131 446h1v2h-1zM173 446h1v1h-1zM425 446h1v1h-1zM467 446h1v2h-1zM471 446h1v1h-1zM487 446h1v1h-1zM505 446h1v1h-1zM57 447h1v2h-1zM112 447h1v1h-1zM119 447h1v1h-1zM174 447h1v1h-1zM348 447h1v2h-1zM424 447h1v1h-1zM472 447h1v1h-1zM486 447h1v1h-1zM506 447h1v1h-1zM541 447h1v2h-1zM113 448h1v1h-1zM117 448h2v1h-2zM132 448h1v1h-1zM175 448h1v1h-1zM255 448h1v2h-1zM423 448h1v1h-1zM466 448h1v1h-1zM473 448h1v1h-1zM485 448h1v1h-1zM507 448h2v1h-2zM58 449h1v1h-1zM114 449h1v1h-1zM116 449h1v1h-1zM133 449h1v1h-1zM176 449h1v1h-1zM349 449h1v4h-1zM421 449h2v1h-2zM465 449h1v1h-1zM474 449h1v1h-1zM484 449h1v2h-1zM509 449h1v1h-1zM540 449h1v1h-1zM59 450h1v2h-1zM114 450h2v1h-2zM134 450h1v1h-1zM177 450h2v1h-2zM254 450h1v4h-1zM420 450h1v1h-1zM464 450h1v1h-1zM475 450h2v1h-2zM510 450h1v1h-1zM539 450h1v2h-1zM115 451h1v1h-1zM135 451h1v1h-1zM179 451h1v1h-1zM419 451h1v1h-1zM463 451h1v1h-1zM477 451h1v1h-1zM483 451h1v1h-1zM511 451h2v1h-2zM60 452h1v1h-1zM116 452h1v1h-1zM136 452h1v1h-1zM180 452h1v1h-1zM418 452h1v1h-1zM462 452h1v1h-1zM478 452h1v1h-1zM482 452h1v1h-1zM513 452h1v1h-1zM538 452h1v1h-1zM61 453h1v2h-1zM117 453h1v1h-1zM137 453h1v1h-1zM181 453h1v1h-1zM350 453h1v4h-1zM417 453h1v1h-1zM461 453h1v1h-1zM479 453h1v1h-1zM481 453h1v1h-1zM514 453h1v1h-1zM537 453h1v2h-1zM118 454h1v1h-1zM138 454h1v1h-1zM182 454h2v1h-2zM253 454h1v4h-1zM415 454h2v1h-2zM460 454h1v1h-1zM480 454h1v1h-1zM515 454h2v1h-2zM62 455h1v1h-1zM119 455h1v2h-1zM139 455h1v1h-1zM184 455h1v1h-1zM414 455h1v1h-1zM459 455h1v1h-1zM479 455h1v2h-1zM517 455h1v1h-1zM536 455h1v1h-1zM63 456h1v2h-1zM139 456h2v1h-2zM185 456h1v1h-1zM413 456h1v1h-1zM458 456h1v1h-1zM518 456h1v1h-1zM535 456h1v2h-1zM120 457h1v1h-1zM138 457h1v1h-1zM141 457h1v1h-1zM186 457h2v1h-2zM351 457h1v2h-1zM411 457h2v1h-2zM457 457h1v1h-1zM478 457h1v1h-1zM519 457h2v1h-2zM64 458h1v1h-1zM121 458h1v1h-1zM137 458h1v1h-1zM142 458h1v1h-1zM188 458h1v1h-1zM252 458h1v3h-1zM410 458h1v1h-1zM456 458h1v1h-1zM477 458h1v1h-1zM521 458h1v1h-1zM534 458h1v1h-1zM65 459h1v2h-1zM122 459h1v1h-1zM136 459h1v1h-1zM143 459h1v1h-1zM189 459h2v1h-2zM408 459h2v1h-2zM455 459h2v1h-2zM476 459h1v1h-1zM522 459h1v1h-1zM533 459h1v2h-1zM123 460h1v1h-1zM135 460h1v1h-1zM144 460h1v1h-1zM191 460h1v1h-1zM407 460h1v1h-1zM454 460h1v1h-1zM457 460h1v1h-1zM475 460h1v1h-1zM523 460h2v1h-2zM66 461h1v1h-1zM124 461h1v1h-1zM134 461h1v1h-1zM145 461h1v1h-1zM192 461h2v1h-2zM405 461h2v1h-2zM453 461h1v1h-1zM458 461h1v1h-1zM474 461h1v1h-1zM525 461h1v1h-1zM532 461h1v1h-1zM67 462h1v2h-1zM125 462h1v2h-1zM133 462h1v1h-1zM146 462h1v1h-1zM194 462h2v1h-2zM403 462h2v1h-2zM452 462h1v1h-1zM459 462h1v1h-1zM473 462h1v2h-1zM526 462h1v1h-1zM531 462h1v2h-1zM132 463h1v1h-1zM147 463h1v1h-1zM196 463h1v1h-1zM402 463h1v1h-1zM451 463h1v1h-1zM460 463h1v1h-1zM527 463h2v1h-2zM68 464h1v2h-1zM126 464h1v1h-1zM131 464h1v1h-1zM148 464h1v1h-1zM197 464h2v1h-2zM400 464h2v1h-2zM450 464h1v1h-1zM461 464h1v1h-1zM472 464h1v1h-1zM529 464h2v1h-2zM127 465h1v1h-1zM130 465h1v1h-1zM149 465h1v1h-1zM199 465h1v1h-1zM399 465h1v1h-1zM449 465h1v1h-1zM462 465h1v1h-1zM471 465h1v1h-1zM530 465h1v1h-1zM69 466h1v1h-1zM128 466h2v1h-2zM150 466h1v1h-1zM200 466h2v1h-2zM397 466h2v1h-2zM448 466h1v1h-1zM463 466h1v1h-1zM470 466h1v1h-1zM529 466h1v1h-1zM70 467h1v1h-1zM129 467h1v1h-1zM151 467h1v1h-1zM202 467h1v1h-1zM395 467h2v1h-2zM446 467h2v1h-2zM464 467h1v1h-1zM469 467h1v1h-1zM528 467h1v1h-1zM71 468h1v2h-1zM130 468h1v1h-1zM152 468h2v1h-2zM203 468h2v1h-2zM393 468h2v1h-2zM445 468h1v1h-1zM465 468h1v1h-1zM468 468h1v1h-1zM527 468h1v2h-1zM131 469h1v1h-1zM154 469h1v1h-1zM205 469h2v1h-2zM391 469h2v1h-2zM444 469h1v1h-1zM466 469h2v1h-2zM72 470h1v1h-1zM132 470h1v1h-1zM153 470h1v1h-1zM155 470h1v1h-1zM207 470h2v1h-2zM389 470h2v1h-2zM443 470h1v1h-1zM466 470h1v1h-1zM526 470h1v1h-1zM73 471h1v1h-1zM133 471h1v1h-1zM152 471h1v1h-1zM156 471h1v1h-1zM209 471h2v1h-2zM387 471h2v1h-2zM442 471h1v1h-1zM465 471h1v1h-1zM525 471h1v1h-1zM74 472h1v2h-1zM134 472h1v1h-1zM151 472h1v1h-1zM157 472h1v1h-1zM211 472h2v1h-2zM385 472h2v1h-2zM440 472h2v1h-2zM464 472h1v1h-1zM524 472h1v2h-1zM135 473h1v1h-1zM150 473h1v1h-1zM158 473h2v1h-2zM212 473h3v1h-3zM383 473h2v1h-2zM439 473h1v1h-1zM442 473h1v1h-1zM462 473h2v1h-2zM75 474h1v1h-1zM136 474h2v1h-2zM149 474h1v1h-1zM160 474h1v1h-1zM212 474h1v1h-1zM215 474h2v1h-2zM381 474h2v1h-2zM438 474h1v1h-1zM443 474h1v1h-1zM461 474h1v1h-1zM523 474h1v1h-1zM76 475h1v1h-1zM138 475h1v1h-1zM148 475h1v2h-1zM161 475h1v1h-1zM211 475h1v2h-1zM217 475h2v1h-2zM379 475h2v1h-2zM437 475h1v1h-1zM444 475h1v2h-1zM460 475h1v1h-1zM522 475h1v1h-1zM77 476h1v1h-1zM139 476h1v1h-1zM162 476h2v1h-2zM219 476h3v1h-3zM377 476h2v1h-2zM435 476h2v1h-2zM459 476h1v1h-1zM521 476h1v1h-1zM78 477h1v1h-1zM140 477h1v1h-1zM147 477h1v1h-1zM164 477h1v1h-1zM210 477h1v2h-1zM222 477h2v1h-2zM375 477h1v1h-1zM434 477h1v1h-1zM445 477h1v1h-1zM458 477h1v1h-1zM520 477h1v1h-1zM79 478h1v1h-1zM141 478h1v1h-1zM146 478h1v1h-1zM165 478h1v1h-1zM224 478h2v1h-2zM373 478h2v1h-2zM376 478h1v2h-1zM433 478h1v1h-1zM446 478h1v1h-1zM457 478h1v1h-1zM519 478h1v1h-1zM80 479h1v1h-1zM142 479h2v1h-2zM145 479h1v1h-1zM166 479h2v1h-2zM209 479h1v2h-1zM226 479h3v1h-3zM370 479h3v1h-3zM431 479h2v1h-2zM447 479h1v1h-1zM455 479h2v1h-2zM518 479h1v1h-1zM81 480h1v1h-1zM144 480h1v1h-1zM168 480h1v1h-1zM229 480h3v1h-3zM367 480h3v1h-3zM377 480h1v2h-1zM430 480h1v1h-1zM448 480h1v2h-1zM454 480h1v1h-1zM517 480h1v1h-1zM82 481h1v1h-1zM145 481h1v1h-1zM169 481h1v1h-1zM208 481h1v2h-1zM232 481h3v1h-3zM364 481h3v1h-3zM429 481h1v1h-1zM453 481h1v1h-1zM516 481h1v1h-1zM83 482h1v1h-1zM146 482h1v1h-1zM168 482h1v1h-1zM170 482h1v1h-1zM235 482h3v1h-3zM361 482h3v1h-3zM378 482h1v2h-1zM427 482h2v1h-2zM449 482h1v1h-1zM452 482h1v1h-1zM515 482h1v1h-1zM84 483h1v2h-1zM147 483h1v1h-1zM167 483h1v2h-1zM171 483h2v1h-2zM207 483h1v2h-1zM238 483h3v1h-3zM358 483h3v1h-3zM426 483h1v1h-1zM450 483h2v1h-2zM514 483h1v2h-1zM148 484h1v1h-1zM173 484h1v1h-1zM241 484h4v1h-4zM354 484h4v1h-4zM379 484h1v2h-1zM425 484h2v1h-2zM449 484h2v1h-2zM85 485h1v1h-1zM149 485h2v1h-2zM166 485h1v1h-1zM174 485h1v1h-1zM206 485h1v3h-1zM245 485h3v1h-3zM351 485h3v1h-3zM424 485h1v1h-1zM427 485h1v2h-1zM448 485h1v1h-1zM513 485h1v1h-1zM86 486h1v1h-1zM151 486h1v1h-1zM165 486h1v1h-1zM175 486h2v1h-2zM248 486h3v1h-3zM348 486h3v1h-3zM380 486h1v2h-1zM422 486h2v1h-2zM447 486h1v1h-1zM512 486h1v1h-1zM87 487h1v2h-1zM152 487h1v1h-1zM164 487h1v2h-1zM177 487h2v1h-2zM251 487h3v1h-3zM345 487h3v1h-3zM420 487h2v1h-2zM428 487h1v1h-1zM446 487h1v1h-1zM511 487h1v2h-1zM153 488h2v1h-2zM179 488h2v1h-2zM205 488h1v2h-1zM254 488h4v1h-4zM341 488h4v1h-4zM381 488h1v2h-1zM418 488h2v1h-2zM429 488h1v2h-1zM444 488h2v1h-2zM88 489h1v1h-1zM155 489h1v1h-1zM163 489h1v1h-1zM181 489h1v1h-1zM258 489h5v1h-5zM336 489h5v1h-5zM417 489h1v1h-1zM443 489h1v1h-1zM510 489h1v1h-1zM89 490h1v1h-1zM156 490h1v1h-1zM162 490h1v1h-1zM182 490h2v1h-2zM204 490h1v2h-1zM263 490h6v1h-6zM329 490h7v1h-7zM382 490h1v3h-1zM415 490h2v1h-2zM430 490h1v1h-1zM442 490h1v1h-1zM509 490h1v1h-1zM90 491h1v1h-1zM157 491h2v1h-2zM161 491h1v2h-1zM184 491h1v1h-1zM269 491h7v1h-7zM323 491h6v1h-6zM414 491h1v1h-1zM431 491h1v2h-1zM440 491h2v1h-2zM508 491h1v1h-1zM91 492h1v1h-1zM159 492h1v1h-1zM185 492h2v1h-2zM203 492h1v2h-1zM276 492h7v1h-7zM316 492h7v1h-7zM412 492h2v1h-2zM439 492h1v1h-1zM507 492h1v1h-1zM92 493h1v1h-1zM160 493h2v1h-2zM184 493h1v2h-1zM187 493h1v1h-1zM283 493h33v1h-33zM383 493h1v2h-1zM411 493h1v1h-1zM432 493h1v1h-1zM437 493h2v1h-2zM506 493h1v1h-1zM93 494h1v1h-1zM160 494h1v1h-1zM162 494h1v1h-1zM188 494h2v1h-2zM202 494h1v2h-1zM294 494h1v14h-1zM409 494h2v1h-2zM433 494h1v2h-1zM436 494h1v1h-1zM505 494h1v1h-1zM94 495h1v1h-1zM159 495h1v2h-1zM163 495h1v1h-1zM183 495h1v2h-1zM190 495h2v1h-2zM384 495h1v2h-1zM407 495h3v1h-3zM435 495h1v1h-1zM504 495h1v1h-1zM95 496h1v1h-1zM164 496h2v1h-2zM192 496h2v1h-2zM201 496h1v2h-1zM405 496h2v1h-2zM410 496h1v2h-1zM433 496h2v1h-2zM503 496h1v1h-1zM96 497h1v1h-1zM158 497h1v1h-1zM166 497h1v1h-1zM182 497h1v1h-1zM194 497h2v1h-2zM385 497h1v2h-1zM403 497h2v1h-2zM432 497h1v1h-1zM502 497h1v1h-1zM97 498h1v1h-1zM157 498h1v1h-1zM167 498h2v1h-2zM181 498h1v2h-1zM196 498h2v1h-2zM200 498h1v1h-1zM401 498h2v1h-2zM411 498h1v2h-1zM430 498h2v1h-2zM501 498h1v1h-1zM98 499h1v1h-1zM156 499h1v2h-1zM169 499h1v1h-1zM198 499h3v1h-3zM386 499h1v2h-1zM399 499h2v1h-2zM429 499h1v1h-1zM500 499h1v1h-1zM99 500h1v1h-1zM170 500h1v1h-1zM180 500h1v2h-1zM200 500h2v1h-2zM397 500h2v1h-2zM412 500h1v1h-1zM428 500h1v1h-1zM499 500h1v1h-1zM100 501h1v1h-1zM155 501h1v1h-1zM171 501h2v1h-2zM202 501h2v1h-2zM387 501h1v2h-1zM395 501h2v1h-2zM413 501h1v2h-1zM426 501h2v1h-2zM498 501h1v1h-1zM101 502h1v1h-1zM154 502h1v1h-1zM173 502h1v1h-1zM179 502h1v2h-1zM202 502h1v1h-1zM204 502h2v1h-2zM393 502h2v1h-2zM425 502h1v1h-1zM497 502h1v1h-1zM102 503h1v1h-1zM153 503h1v2h-1zM174 503h2v1h-2zM201 503h1v2h-1zM206 503h2v1h-2zM388 503h1v1h-1zM391 503h2v1h-2zM414 503h1v2h-1zM423 503h2v1h-2zM496 503h1v1h-1zM103 504h1v1h-1zM176 504h3v1h-3zM208 504h2v1h-2zM388 504h3v1h-3zM392 504h1v2h-1zM421 504h2v1h-2zM495 504h1v1h-1zM104 505h1v1h-1zM152 505h1v1h-1zM178 505h2v1h-2zM200 505h1v2h-1zM210 505h2v1h-2zM387 505h2v1h-2zM415 505h1v2h-1zM419 505h2v1h-2zM494 505h1v1h-1zM105 506h1v1h-1zM151 506h1v1h-1zM180 506h1v1h-1zM212 506h2v1h-2zM385 506h2v1h-2zM393 506h1v2h-1zM418 506h1v1h-1zM493 506h1v1h-1zM106 507h1v1h-1zM150 507h1v2h-1zM181 507h2v1h-2zM199 507h1v2h-1zM214 507h3v1h-3zM381 507h4v1h-4zM416 507h2v1h-2zM492 507h1v1h-1zM107 508h1v1h-1zM183 508h2v1h-2zM217 508h4v1h-4zM293 508h1v15h-1zM377 508h4v1h-4zM394 508h1v2h-1zM414 508h2v1h-2zM491 508h1v1h-1zM108 509h1v1h-1zM149 509h1v1h-1zM185 509h2v1h-2zM198 509h1v2h-1zM220 509h5v1h-5zM374 509h3v1h-3zM412 509h2v1h-2zM490 509h1v1h-1zM109 510h1v1h-1zM148 510h1v1h-1zM187 510h1v1h-1zM220 510h1v1h-1zM225 510h2v1h-2zM372 510h2v1h-2zM395 510h1v3h-1zM410 510h2v1h-2zM489 510h1v1h-1zM110 511h1v1h-1zM147 511h1v2h-1zM188 511h2v1h-2zM197 511h1v2h-1zM219 511h1v2h-1zM227 511h2v1h-2zM370 511h2v1h-2zM373 511h1v2h-1zM408 511h2v1h-2zM487 511h2v1h-2zM111 512h2v1h-2zM190 512h2v1h-2zM229 512h3v1h-3zM366 512h4v1h-4zM406 512h2v1h-2zM486 512h1v1h-1zM113 513h1v1h-1zM146 513h1v1h-1zM192 513h2v1h-2zM196 513h1v1h-1zM218 513h1v3h-1zM232 513h4v1h-4zM362 513h4v1h-4zM374 513h1v2h-1zM396 513h1v2h-1zM404 513h2v1h-2zM485 513h1v1h-1zM114 514h1v1h-1zM145 514h1v1h-1zM194 514h3v1h-3zM236 514h4v1h-4zM359 514h3v1h-3zM402 514h2v1h-2zM483 514h2v1h-2zM115 515h2v1h-2zM144 515h1v2h-1zM197 515h2v1h-2zM240 515h4v1h-4zM355 515h4v1h-4zM375 515h1v3h-1zM397 515h1v1h-1zM400 515h2v1h-2zM482 515h1v1h-1zM117 516h1v1h-1zM199 516h2v1h-2zM217 516h1v3h-1zM239 516h1v2h-1zM244 516h3v1h-3zM351 516h4v1h-4zM397 516h3v1h-3zM481 516h1v1h-1zM118 517h1v1h-1zM143 517h1v1h-1zM201 517h2v1h-2zM247 517h4v1h-4zM347 517h4v1h-4zM355 517h1v3h-1zM395 517h4v1h-4zM480 517h1v1h-1zM119 518h1v1h-1zM142 518h1v1h-1zM203 518h2v1h-2zM238 518h1v3h-1zM251 518h4v1h-4zM343 518h4v1h-4zM376 518h1v3h-1zM393 518h2v1h-2zM398 518h1v1h-1zM479 518h1v1h-1zM120 519h1v1h-1zM141 519h1v2h-1zM205 519h2v1h-2zM216 519h1v2h-1zM255 519h4v1h-4zM339 519h4v1h-4zM391 519h2v1h-2zM399 519h1v2h-1zM478 519h1v1h-1zM121 520h1v1h-1zM207 520h2v1h-2zM258 520h7v1h-7zM334 520h5v1h-5zM356 520h1v4h-1zM389 520h2v1h-2zM477 520h1v1h-1zM122 521h1v1h-1zM140 521h1v1h-1zM209 521h3v1h-3zM215 521h1v2h-1zM237 521h1v4h-1zM258 521h1v3h-1zM265 521h7v1h-7zM326 521h8v1h-8zM335 521h1v3h-1zM377 521h1v2h-1zM387 521h2v1h-2zM400 521h1v2h-1zM476 521h1v1h-1zM123 522h1v1h-1zM139 522h1v1h-1zM212 522h2v1h-2zM272 522h16v1h-16zM310 522h16v1h-16zM384 522h3v1h-3zM475 522h1v1h-1zM124 523h1v1h-1zM138 523h1v2h-1zM214 523h3v1h-3zM278 523h1v4h-1zM288 523h22v1h-22zM316 523h1v7h-1zM378 523h1v1h-1zM382 523h2v1h-2zM401 523h1v2h-1zM474 523h1v1h-1zM125 524h1v1h-1zM217 524h3v1h-3zM257 524h1v6h-1zM297 524h1v14h-1zM336 524h1v4h-1zM357 524h1v4h-1zM378 524h4v1h-4zM472 524h2v1h-2zM126 525h2v1h-2zM137 525h1v1h-1zM220 525h4v1h-4zM236 525h1v3h-1zM375 525h4v1h-4zM402 525h1v2h-1zM471 525h1v1h-1zM128 526h1v1h-1zM136 526h1v1h-1zM224 526h3v1h-3zM372 526h3v1h-3zM470 526h1v1h-1zM129 527h1v1h-1zM135 527h1v2h-1zM227 527h2v1h-2zM277 527h1v6h-1zM369 527h3v1h-3zM403 527h1v3h-1zM468 527h2v1h-2zM130 528h2v1h-2zM229 528h3v1h-3zM235 528h1v1h-1zM337 528h1v4h-1zM358 528h1v2h-1zM367 528h2v1h-2zM467 528h1v1h-1zM132 529h1v1h-1zM134 529h1v1h-1zM232 529h4v1h-4zM363 529h4v1h-4zM466 529h1v1h-1zM133 530h2v1h-2zM236 530h4v1h-4zM256 530h1v4h-1zM317 530h1v7h-1zM358 530h5v1h-5zM404 530h1v2h-1zM464 530h2v1h-2zM135 531h1v1h-1zM240 531h4v1h-4zM354 531h5v1h-5zM462 531h2v1h-2zM136 532h2v1h-2zM244 532h4v1h-4zM338 532h1v2h-1zM350 532h4v1h-4zM405 532h1v2h-1zM461 532h1v1h-1zM138 533h2v1h-2zM248 533h6v1h-6zM276 533h1v4h-1zM344 533h6v1h-6zM459 533h2v1h-2zM140 534h1v1h-1zM254 534h6v1h-6zM338 534h6v1h-6zM406 534h1v2h-1zM458 534h1v1h-1zM141 535h2v1h-2zM260 535h4v1h-4zM334 535h4v1h-4zM456 535h2v1h-2zM143 536h1v1h-1zM264 536h6v1h-6zM328 536h6v1h-6zM407 536h1v3h-1zM455 536h1v1h-1zM144 537h2v1h-2zM270 537h17v1h-17zM311 537h17v1h-17zM453 537h2v1h-2zM146 538h1v1h-1zM276 538h1v6h-1zM287 538h24v1h-24zM452 538h1v1h-1zM147 539h2v1h-2zM408 539h1v2h-1zM450 539h2v1h-2zM149 540h1v1h-1zM449 540h1v1h-1zM150 541h2v1h-2zM409 541h1v2h-1zM447 541h2v1h-2zM152 542h1v1h-1zM445 542h2v1h-2zM153 543h2v1h-2zM410 543h1v2h-1zM444 543h1v1h-1zM155 544h2v1h-2zM275 544h1v11h-1zM442 544h2v1h-2zM157 545h1v1h-1zM411 545h1v2h-1zM441 545h1v1h-1zM158 546h2v1h-2zM439 546h2v1h-2zM160 547h2v1h-2zM412 547h1v3h-1zM437 547h2v1h-2zM162 548h2v1h-2zM435 548h2v1h-2zM164 549h2v1h-2zM433 549h2v1h-2zM166 550h2v1h-2zM413 550h1v2h-1zM431 550h2v1h-2zM168 551h2v1h-2zM429 551h2v1h-2zM170 552h2v1h-2zM414 552h1v2h-1zM427 552h2v1h-2zM172 553h2v1h-2zM425 553h2v1h-2zM174 554h3v1h-3zM415 554h1v2h-1zM422 554h3v1h-3zM177 555h2v1h-2zM274 555h1v10h-1zM420 555h2v1h-2zM179 556h2v1h-2zM416 556h1v1h-1zM418 556h2v1h-2zM181 557h2v1h-2zM416 557h2v1h-2zM183 558h3v1h-3zM413 558h3v1h-3zM186 559h2v1h-2zM411 559h2v1h-2zM188 560h2v1h-2zM409 560h2v1h-2zM190 561h2v1h-2zM407 561h2v1h-2zM192 562h3v1h-3zM404 562h3v1h-3zM195 563h2v1h-2zM402 563h2v1h-2zM197 564h2v1h-2zM400 564h2v1h-2zM199 565h2v1h-2zM273 565h1v11h-1zM398 565h2v1h-2zM201 566h3v1h-3zM395 566h3v1h-3zM204 567h3v1h-3zM391 567h4v1h-4zM207 568h4v1h-4zM388 568h3v1h-3zM211 569h3v1h-3zM385 569h3v1h-3zM214 570h3v1h-3zM382 570h3v1h-3zM217 571h3v1h-3zM379 571h3v1h-3zM220 572h3v1h-3zM376 572h3v1h-3zM223 573h3v1h-3zM372 573h4v1h-4zM226 574h4v1h-4zM369 574h3v1h-3zM230 575h4v1h-4zM365 575h4v1h-4zM234 576h4v1h-4zM272 576h1v5h-1zM361 576h4v1h-4zM238 577h5v1h-5zM356 577h5v1h-5zM243 578h5v1h-5zM351 578h5v1h-5zM248 579h7v1h-7zM343 579h8v1h-8zM255 580h10v1h-10zM333 580h10v1h-10zM265 581h10v1h-10zM323 581h10v1h-10zM275 582h10v1h-10zM313 582h10v1h-10zM285 583h28v1h-28z"/><path fill="#ff0000" d="M395 45h5v1h-5zM398 46h2v1h-2zM397 47h1v1h-1zM399 47h1v3h-1zM396 48h1v1h-1zM395 49h1v1h-1zM394 50h1v1h-1zM385 51h1v1h-1zM393 51h1v1h-1zM386 52h1v1h-1zM392 52h1v1h-1zM387 53h1v1h-1zM391 53h1v1h-1zM388 54h1v1h-1zM390 54h1v1h-1zM389 55h1v1h-1zM388 56h1v1h-1zM390 56h1v1h-1zM387 57h1v1h-1zM391 57h1v1h-1zM386 58h1v1h-1zM392 58h1v1h-1zM385 59h1v1h-1zM393 59h1v1h-1zM384 60h1v1h-1zM383 61h1v1h-1zM349 92h3v1h-3zM348 93h1v3h-1zM352 93h1v3h-1zM349 96h4v1h-4zM352 97h1v3h-1zM348 99h1v1h-1zM349 100h3v1h-3zM745 106h2v1h-2zM750 106h2v1h-2zM744 107h1v2h-1zM747 107h1v2h-1zM749 107h1v2h-1zM752 107h1v2h-1zM745 109h1v1h-1zM748 109h1v6h-1zM751 109h1v1h-1zM747 147h3v1h-3zM745 148h2v1h-2zM750 148h2v1h-2zM744 149h1v1h-1zM749 149h1v2h-1zM752 149h1v2h-1zM745 150h2v1h-2zM744 151h1v2h-1zM747 151h1v2h-1zM750 151h2v1h-2zM752 152h1v1h-1zM745 153h2v1h-2zM750 153h2v1h-2zM747 154h3v1h-3zM302 156h1v1h-1zM304 156h1v1h-1zM301 157h1v1h-1zM300 158h1v1h-1zM299 159h1v1h-1zM307 159h2v1h-2zM327 159h1v1h-1zM298 160h1v1h-1zM324 160h1v1h-1zM297 161h1v1h-1zM305 161h1v1h-1zM296 162h1v1h-1zM310 162h1v1h-1zM321 162h1v1h-1zM295 163h1v1h-1zM294 164h1v1h-1zM302 164h1v1h-1zM318 164h1v1h-1zM293 165h1v1h-1zM313 165h1v1h-1zM292 166h1v1h-1zM315 166h1v1h-1zM291 167h1v1h-1zM299 167h1v1h-1zM312 167h1v1h-1zM290 168h1v1h-1zM316 168h1v1h-1zM289 169h1v1h-1zM309 169h1v1h-1zM288 170h1v1h-1zM296 170h1v1h-1zM287 171h1v1h-1zM306 171h1v1h-1zM319 171h1v1h-1zM286 172h1v1h-1zM293 172h1v1h-1zM284 173h2v1h-2zM303 173h1v1h-1zM283 174h1v1h-1zM300 174h1v1h-1zM322 174h1v1h-1zM282 175h1v1h-1zM290 175h1v1h-1zM281 176h1v1h-1zM297 176h1v1h-1zM280 177h1v1h-1zM325 177h1v1h-1zM279 178h1v1h-1zM287 178h1v1h-1zM294 178h1v1h-1zM278 179h1v1h-1zM328 179h1v1h-1zM277 180h1v1h-1zM291 180h1v1h-1zM276 181h1v1h-1zM284 181h1v1h-1zM288 181h1v1h-1zM275 182h1v1h-1zM331 182h1v1h-1zM274 183h1v1h-1zM281 183h1v1h-1zM285 183h1v1h-1zM273 184h1v1h-1zM272 185h1v1h-1zM282 185h1v1h-1zM334 185h1v1h-1zM271 186h1v1h-1zM278 186h1v1h-1zM750 186h3v1h-3zM270 187h1v1h-1zM279 187h1v1h-1zM751 187h2v1h-2zM269 188h1v1h-1zM276 188h1v1h-1zM337 188h1v1h-1zM750 188h1v1h-1zM752 188h1v1h-1zM268 189h1v1h-1zM275 189h1v1h-1zM745 189h1v1h-1zM749 189h1v1h-1zM267 190h1v1h-1zM273 190h1v1h-1zM746 190h1v1h-1zM748 190h1v1h-1zM266 191h1v1h-1zM340 191h1v1h-1zM747 191h1v1h-1zM265 192h1v1h-1zM270 192h1v1h-1zM272 192h1v1h-1zM746 192h1v1h-1zM748 192h1v1h-1zM264 193h1v1h-1zM745 193h1v1h-1zM749 193h1v1h-1zM263 194h1v1h-1zM267 194h1v1h-1zM269 194h1v1h-1zM343 194h1v1h-1zM744 194h1v1h-1zM203 195h1v1h-1zM262 195h1v1h-1zM264 195h1v1h-1zM261 196h1v1h-1zM260 197h2v1h-2zM266 197h1v1h-1zM346 197h1v1h-1zM259 198h1v1h-1zM203 199h1v1h-1zM258 199h1v1h-1zM257 200h1v1h-1zM263 200h1v1h-1zM349 200h1v1h-1zM255 201h2v1h-2zM252 202h1v1h-1zM255 202h1v1h-1zM203 203h1v1h-1zM254 203h1v1h-1zM260 203h1v1h-1zM352 203h1v1h-1zM249 204h1v1h-1zM253 204h1v1h-1zM252 205h1v1h-1zM257 205h1v1h-1zM246 206h1v1h-1zM251 206h1v1h-1zM355 206h1v1h-1zM203 207h1v1h-1zM250 207h1v1h-1zM243 208h1v1h-1zM249 208h1v1h-1zM254 208h1v1h-1zM240 209h1v1h-1zM247 209h2v1h-2zM358 209h1v1h-1zM246 210h1v1h-1zM203 211h1v1h-1zM237 211h1v1h-1zM245 211h1v1h-1zM251 211h1v1h-1zM244 212h1v1h-1zM361 212h1v1h-1zM234 213h1v1h-1zM243 213h1v1h-1zM242 214h1v1h-1zM248 214h1v1h-1zM203 215h1v1h-1zM231 215h1v1h-1zM241 215h1v1h-1zM364 215h1v1h-1zM228 216h1v1h-1zM240 216h1v1h-1zM245 216h1v1h-1zM239 217h1v1h-1zM225 218h1v1h-1zM238 218h1v1h-1zM367 218h1v1h-1zM203 219h1v1h-1zM237 219h1v1h-1zM242 219h1v1h-1zM222 220h1v1h-1zM236 220h1v1h-1zM235 221h1v1h-1zM370 221h1v1h-1zM219 222h1v1h-1zM234 222h1v1h-1zM239 222h1v1h-1zM203 223h1v1h-1zM216 223h1v1h-1zM233 223h1v1h-1zM373 223h1v1h-1zM232 224h1v1h-1zM213 225h1v1h-1zM231 225h1v1h-1zM236 225h1v1h-1zM230 226h1v1h-1zM376 226h1v1h-1zM203 227h1v1h-1zM210 227h1v1h-1zM229 227h1v1h-1zM233 227h1v1h-1zM228 228h1v1h-1zM207 229h1v1h-1zM227 229h1v1h-1zM379 229h1v1h-1zM204 230h1v1h-1zM226 230h1v1h-1zM230 230h1v1h-1zM203 231h1v1h-1zM225 231h1v1h-1zM201 232h1v1h-1zM224 232h1v1h-1zM382 232h1v1h-1zM223 233h1v1h-1zM227 233h1v1h-1zM198 234h1v1h-1zM222 234h1v1h-1zM203 235h1v1h-1zM221 235h1v1h-1zM385 235h1v1h-1zM131 236h6v1h-6zM195 236h1v1h-1zM220 236h1v1h-1zM224 236h1v1h-1zM747 236h3v1h-3zM135 237h2v1h-2zM192 237h1v1h-1zM219 237h1v1h-1zM745 237h2v1h-2zM750 237h2v1h-2zM134 238h1v1h-1zM136 238h1v4h-1zM218 238h1v1h-1zM221 238h1v1h-1zM388 238h1v1h-1zM744 238h1v5h-1zM752 238h1v5h-1zM133 239h1v1h-1zM169 239h1v1h-1zM189 239h1v1h-1zM203 239h1v1h-1zM217 239h1v1h-1zM132 240h1v1h-1zM216 240h1v1h-1zM748 240h1v1h-1zM131 241h1v1h-1zM186 241h1v1h-1zM215 241h1v1h-1zM218 241h1v1h-1zM391 241h1v1h-1zM123 242h5v1h-5zM130 242h1v1h-1zM170 242h1v1h-1zM122 243h1v1h-1zM128 243h2v1h-2zM183 243h1v1h-1zM203 243h1v1h-1zM213 243h1v1h-1zM745 243h2v1h-2zM750 243h2v1h-2zM121 244h1v1h-1zM129 244h1v1h-1zM180 244h1v1h-1zM212 244h1v1h-1zM394 244h1v1h-1zM747 244h3v1h-3zM120 245h1v5h-1zM130 245h1v5h-1zM171 245h1v1h-1zM210 245h2v1h-2zM177 246h1v1h-1zM209 246h1v1h-1zM204 247h1v1h-1zM208 247h1v1h-1zM212 247h1v1h-1zM397 247h1v1h-1zM172 248h1v1h-1zM174 248h1v1h-1zM207 248h1v1h-1zM206 249h1v1h-1zM209 249h1v1h-1zM121 250h1v1h-1zM129 250h1v1h-1zM171 250h1v1h-1zM205 250h1v1h-1zM400 250h1v1h-1zM122 251h1v1h-1zM128 251h1v1h-1zM168 251h1v1h-1zM173 251h1v1h-1zM204 251h1v1h-1zM123 252h5v1h-5zM203 252h1v1h-1zM206 252h1v1h-1zM165 253h1v1h-1zM202 253h1v1h-1zM403 253h1v1h-1zM157 254h1v1h-1zM174 254h1v1h-1zM201 254h1v1h-1zM162 255h1v1h-1zM200 255h1v1h-1zM203 255h2v1h-2zM163 256h1v2h-1zM199 256h1v1h-1zM406 256h1v1h-1zM175 257h1v1h-1zM198 257h1v1h-1zM164 258h1v2h-1zM197 258h1v1h-1zM200 258h1v1h-1zM196 259h1v1h-1zM204 259h1v1h-1zM409 259h1v1h-1zM165 260h1v2h-1zM175 260h1v1h-1zM195 260h1v1h-1zM197 260h1v1h-1zM194 261h1v1h-1zM166 262h1v2h-1zM193 262h1v1h-1zM412 262h1v1h-1zM176 263h1v1h-1zM192 263h1v1h-1zM194 263h1v1h-1zM204 263h1v1h-1zM167 264h1v2h-1zM191 264h1v1h-1zM190 265h1v1h-1zM415 265h1v1h-1zM168 266h1v2h-1zM177 266h1v1h-1zM189 266h1v1h-1zM191 266h1v1h-1zM188 267h1v1h-1zM204 267h1v1h-1zM169 268h1v2h-1zM187 268h1v1h-1zM418 268h1v1h-1zM178 269h1v1h-1zM186 269h1v1h-1zM188 269h1v1h-1zM170 270h1v1h-1zM185 270h1v1h-1zM421 270h1v1h-1zM171 271h1v2h-1zM184 271h2v1h-2zM204 271h1v1h-1zM179 272h1v1h-1zM183 272h1v1h-1zM172 273h1v2h-1zM182 273h1v1h-1zM424 273h1v1h-1zM181 274h2v1h-2zM173 275h1v2h-1zM180 275h1v1h-1zM204 275h1v1h-1zM179 276h1v1h-1zM427 276h1v1h-1zM750 276h3v1h-3zM174 277h1v2h-1zM178 277h2v1h-2zM751 277h2v1h-2zM177 278h1v1h-1zM181 278h1v1h-1zM750 278h1v1h-1zM752 278h1v1h-1zM175 279h2v2h-2zM204 279h1v1h-1zM430 279h1v1h-1zM746 279h2v1h-2zM749 279h1v1h-1zM484 280h1v1h-1zM745 280h1v1h-1zM748 280h1v1h-1zM173 281h2v1h-2zM176 281h1v2h-1zM182 281h1v1h-1zM483 281h1v1h-1zM744 281h1v2h-1zM749 281h1v2h-1zM172 282h2v1h-2zM433 282h1v1h-1zM473 282h2v1h-2zM482 282h1v12h-1zM171 283h1v1h-1zM177 283h1v2h-1zM204 283h1v1h-1zM475 283h1v1h-1zM745 283h1v1h-1zM748 283h1v1h-1zM170 284h1v1h-1zM183 284h1v1h-1zM476 284h1v3h-1zM746 284h2v1h-2zM169 285h2v1h-2zM178 285h1v1h-1zM436 285h1v1h-1zM168 286h1v1h-1zM179 286h1v2h-1zM751 286h1v1h-1zM167 287h1v1h-1zM184 287h1v1h-1zM204 287h1v1h-1zM475 287h1v2h-1zM745 287h2v1h-2zM750 287h1v6h-1zM166 288h2v1h-2zM180 288h1v2h-1zM439 288h1v1h-1zM747 288h1v2h-1zM165 289h1v1h-1zM474 289h1v2h-1zM164 290h1v1h-1zM181 290h1v2h-1zM185 290h1v1h-1zM448 290h1v1h-1zM746 290h1v2h-1zM113 291h1v1h-1zM163 291h2v1h-2zM204 291h1v1h-1zM442 291h1v1h-1zM473 291h1v2h-1zM112 292h1v1h-1zM114 292h1v1h-1zM162 292h1v1h-1zM182 292h1v2h-1zM745 292h1v1h-1zM111 293h1v6h-1zM115 293h1v6h-1zM161 293h1v1h-1zM186 293h1v1h-1zM472 293h1v1h-1zM745 293h8v1h-8zM160 294h1v1h-1zM183 294h1v2h-1zM472 294h15v1h-15zM750 294h1v1h-1zM159 295h1v1h-1zM204 295h1v1h-1zM482 295h1v2h-1zM158 296h1v1h-1zM184 296h1v2h-1zM186 296h1v1h-1zM119 297h2v1h-2zM125 297h2v1h-2zM157 297h1v1h-1zM118 298h1v4h-1zM121 298h1v1h-1zM124 298h1v9h-1zM127 298h1v1h-1zM156 298h1v1h-1zM185 298h1v2h-1zM111 299h5v1h-5zM149 299h1v1h-1zM155 299h1v1h-1zM187 299h1v1h-1zM204 299h1v1h-1zM111 300h1v8h-1zM115 300h1v8h-1zM186 300h1v1h-1zM187 301h1v1h-1zM119 302h2v1h-2zM187 302h2v1h-2zM121 303h1v4h-1zM188 303h1v2h-1zM204 303h1v1h-1zM189 305h1v2h-1zM118 306h1v1h-1zM127 306h1v1h-1zM119 307h2v1h-2zM125 307h2v1h-2zM190 307h1v2h-1zM204 307h1v1h-1zM191 309h1v2h-1zM191 311h2v1h-2zM204 311h1v1h-1zM192 312h1v1h-1zM193 313h1v1h-1zM192 314h2v1h-2zM194 315h1v1h-1zM204 315h1v1h-1zM195 316h1v2h-1zM193 317h1v1h-1zM196 318h1v2h-1zM204 319h1v1h-1zM194 320h1v1h-1zM197 320h1v2h-1zM198 322h1v2h-1zM195 323h1v1h-1zM204 323h1v1h-1zM199 324h1v2h-1zM196 326h1v1h-1zM200 326h1v2h-1zM204 327h1v1h-1zM201 328h1v2h-1zM197 329h1v1h-1zM202 330h1v1h-1zM203 331h2v1h-2zM197 332h1v1h-1zM203 332h1v1h-1zM34 333h3v1h-3zM44 333h3v1h-3zM204 333h1v2h-1zM33 334h1v1h-1zM37 334h1v1h-1zM43 334h1v1h-1zM47 334h1v1h-1zM32 335h1v3h-1zM38 335h1v3h-1zM42 335h1v3h-1zM48 335h1v3h-1zM198 335h1v1h-1zM204 335h2v1h-2zM205 336h1v1h-1zM206 337h1v2h-1zM33 338h1v1h-1zM39 338h1v3h-1zM41 338h1v3h-1zM47 338h1v1h-1zM199 338h1v1h-1zM34 339h1v1h-1zM46 339h1v1h-1zM204 339h1v1h-1zM207 339h1v2h-1zM39 341h3v1h-3zM200 341h1v1h-1zM208 341h1v2h-1zM40 342h1v8h-1zM204 343h1v1h-1zM209 343h1v2h-1zM201 344h1v1h-1zM210 345h1v1h-1zM211 346h1v2h-1zM202 347h1v1h-1zM204 347h1v1h-1zM212 348h1v2h-1zM203 350h1v1h-1zM213 350h1v2h-1zM204 351h1v1h-1zM214 352h1v2h-1zM204 353h1v1h-1zM215 354h1v2h-1zM205 355h1v2h-1zM216 356h1v2h-1zM99 358h1v1h-1zM217 358h1v2h-1zM98 359h2v1h-2zM205 359h2v1h-2zM97 360h1v1h-1zM99 360h1v6h-1zM218 360h1v2h-1zM207 362h1v1h-1zM219 362h1v1h-1zM205 363h1v1h-1zM220 363h1v2h-1zM208 365h1v1h-1zM221 365h1v2h-1zM97 366h5v1h-5zM205 367h1v1h-1zM222 367h1v2h-1zM208 368h1v1h-1zM223 369h1v2h-1zM205 371h1v1h-1zM209 371h1v1h-1zM224 371h1v2h-1zM225 373h1v2h-1zM210 374h1v1h-1zM205 375h1v1h-1zM226 375h1v2h-1zM211 377h1v1h-1zM227 377h1v1h-1zM228 378h1v2h-1zM205 379h1v1h-1zM212 380h1v1h-1zM229 380h1v2h-1zM230 382h1v2h-1zM205 383h1v1h-1zM213 383h1v1h-1zM231 384h1v2h-1zM214 386h1v1h-1zM232 386h1v2h-1zM205 387h1v1h-1zM233 388h1v2h-1zM215 389h1v1h-1zM234 390h1v2h-1zM205 391h1v1h-1zM216 392h1v1h-1zM235 392h1v1h-1zM236 393h1v2h-1zM205 395h1v1h-1zM217 395h1v1h-1zM237 395h1v2h-1zM238 397h1v2h-1zM218 398h1v1h-1zM205 399h1v1h-1zM239 399h1v2h-1zM219 401h1v1h-1zM240 401h1v2h-1zM205 403h1v1h-1zM241 403h1v2h-1zM219 404h1v1h-1zM242 405h1v2h-1zM220 407h1v1h-1zM243 407h1v1h-1zM244 408h1v2h-1zM245 410h1v2h-1zM246 412h1v2h-1zM222 413h1v1h-1zM247 414h1v2h-1zM223 416h1v1h-1zM248 416h1v2h-1zM249 418h1v2h-1zM224 419h1v1h-1zM250 420h1v2h-1zM251 422h1v1h-1zM252 423h1v2h-1zM253 425h1v2h-1zM222 427h1v1h-1zM254 427h1v2h-1zM255 429h1v2h-1zM256 431h1v2h-1zM257 433h1v2h-1zM258 435h1v2h-1zM259 437h1v1h-1zM205 445h5v1h-5zM203 446h2v1h-2zM210 446h2v1h-2zM202 447h1v1h-1zM212 447h1v1h-1zM201 448h1v1h-1zM213 448h1v1h-1zM200 449h1v2h-1zM214 449h1v2h-1zM199 451h1v5h-1zM215 451h1v5h-1zM207 453h1v1h-1zM200 456h1v2h-1zM214 456h1v2h-1zM201 458h1v1h-1zM213 458h1v1h-1zM202 459h1v1h-1zM212 459h1v1h-1zM203 460h2v1h-2zM210 460h2v1h-2zM427 460h5v1h-5zM205 461h5v1h-5zM427 461h1v3h-1zM427 464h4v1h-4zM431 465h1v3h-1zM427 467h1v1h-1zM428 468h3v1h-3zM463 494h5v1h-5zM462 495h1v1h-1zM468 495h1v1h-1zM461 496h1v1h-1zM469 496h1v1h-1zM460 497h1v1h-1zM470 497h1v1h-1zM459 498h1v5h-1zM471 498h1v5h-1zM460 503h1v1h-1zM470 503h1v1h-1zM461 504h1v3h-1zM469 504h1v3h-1zM457 506h1v1h-1zM458 507h1v1h-1zM460 507h1v1h-1zM470 507h1v1h-1zM459 508h1v1h-1zM471 508h1v1h-1zM472 509h1v1h-1zM473 510h1v1h-1z"/><path fill="#00ff00" d="M129 88h1v1h-1zM135 88h1v1h-1zM141 88h1v1h-1zM128 89h2v1h-2zM134 89h2v1h-2zM140 89h1v2h-1zM128 90h1v1h-1zM130 90h1v3h-1zM134 90h1v1h-1zM136 90h1v3h-1zM127 91h1v1h-1zM133 91h1v1h-1zM139 91h1v1h-1zM126 92h1v2h-1zM132 92h1v1h-1zM138 92h1v1h-1zM131 93h1v2h-1zM137 93h1v2h-1zM125 94h1v1h-1zM129 98h1v1h-1zM135 98h1v1h-1zM141 98h1v1h-1zM128 99h2v1h-2zM134 99h2v1h-2zM140 99h1v2h-1zM128 100h1v1h-1zM130 100h1v3h-1zM134 100h1v1h-1zM136 100h1v3h-1zM127 101h1v1h-1zM133 101h1v1h-1zM139 101h1v1h-1zM126 102h1v2h-1zM132 102h1v1h-1zM138 102h1v1h-1zM131 103h1v2h-1zM137 103h1v2h-1zM125 104h1v1h-1zM745 126h1v1h-1zM752 126h1v1h-1zM746 127h6v1h-6zM747 128h1v5h-1zM750 128h1v5h-1zM165 130h1v1h-1zM173 130h1v1h-1zM164 131h2v1h-2zM172 131h2v1h-2zM163 132h1v1h-1zM165 132h1v6h-1zM171 132h1v1h-1zM173 132h1v6h-1zM746 133h6v1h-6zM745 134h1v1h-1zM752 134h1v1h-1zM163 138h5v1h-5zM171 138h5v1h-5zM747 168h3v1h-3zM746 169h1v2h-1zM750 169h1v2h-1zM744 171h4v1h-4zM749 171h4v1h-4zM744 173h9v1h-9zM203 192h1v3h-1zM204 195h1v4h-1zM205 199h1v4h-1zM206 203h1v5h-1zM745 206h1v1h-1zM748 206h1v1h-1zM750 206h2v1h-2zM744 207h2v1h-2zM748 207h2v1h-2zM752 207h1v3h-1zM207 208h1v4h-1zM745 208h1v2h-1zM747 208h1v2h-1zM749 208h1v1h-1zM750 209h1v1h-1zM746 210h1v4h-1zM751 210h1v1h-1zM752 211h1v3h-1zM208 212h1v5h-1zM751 214h1v1h-1zM130 215h1v1h-1zM142 215h1v1h-1zM131 216h1v1h-1zM141 216h1v1h-1zM132 217h1v4h-1zM140 217h1v4h-1zM209 217h1v4h-1zM136 219h1v2h-1zM132 221h9v1h-9zM210 221h1v4h-1zM132 222h1v2h-1zM136 222h1v5h-1zM140 222h1v2h-1zM131 224h1v1h-1zM141 224h1v1h-1zM130 225h1v1h-1zM142 225h1v1h-1zM211 225h1v5h-1zM135 227h3v1h-3zM134 228h1v3h-1zM138 228h1v3h-1zM212 230h1v4h-1zM135 231h3v1h-3zM497 232h5v1h-5zM501 233h1v2h-1zM213 234h1v4h-1zM500 235h1v1h-1zM163 236h1v1h-1zM499 236h1v1h-1zM498 237h1v1h-1zM214 238h1v5h-1zM497 238h1v3h-1zM215 243h1v4h-1zM216 247h1v5h-1zM217 252h1v4h-1zM556 253h5v1h-5zM555 254h1v1h-1zM561 254h1v1h-1zM554 255h1v3h-1zM562 255h1v3h-1zM218 256h1v4h-1zM746 256h1v1h-1zM750 256h1v1h-1zM747 257h3v1h-3zM555 258h1v1h-1zM561 258h1v1h-1zM746 258h1v3h-1zM750 258h1v3h-1zM166 259h1v1h-1zM550 259h7v1h-7zM560 259h7v1h-7zM219 260h1v5h-1zM747 261h3v1h-3zM748 262h1v1h-1zM170 263h1v1h-1zM550 263h17v1h-17zM746 263h5v1h-5zM748 264h1v1h-1zM220 265h1v4h-1zM747 266h3v1h-3zM174 267h1v1h-1zM746 267h1v3h-1zM750 267h1v3h-1zM221 269h1v4h-1zM747 270h3v1h-3zM178 271h1v1h-1zM748 271h1v1h-1zM746 272h5v1h-5zM222 273h1v5h-1zM748 273h1v2h-1zM182 275h1v1h-1zM223 278h1v4h-1zM186 279h1v1h-1zM224 282h1v5h-1zM190 283h1v1h-1zM194 287h1v1h-1zM225 287h1v4h-1zM198 291h1v1h-1zM226 291h1v4h-1zM441 292h1v1h-1zM438 293h1v1h-1zM202 295h1v1h-1zM227 295h1v5h-1zM435 295h1v1h-1zM432 297h1v1h-1zM206 299h1v1h-1zM429 299h1v1h-1zM228 300h1v4h-1zM426 301h1v1h-1zM210 302h1v1h-1zM423 302h1v1h-1zM229 304h1v4h-1zM420 304h1v1h-1zM214 306h1v1h-1zM417 306h1v1h-1zM745 306h1v1h-1zM751 306h1v1h-1zM746 307h1v1h-1zM748 307h1v1h-1zM750 307h1v1h-1zM230 308h1v5h-1zM414 308h1v1h-1zM746 308h5v1h-5zM746 309h1v2h-1zM748 309h1v3h-1zM750 309h1v2h-1zM218 310h1v1h-1zM411 310h1v1h-1zM745 311h1v1h-1zM751 311h1v1h-1zM408 312h1v1h-1zM747 312h3v1h-3zM231 313h1v4h-1zM405 313h1v1h-1zM747 313h1v1h-1zM749 313h1v1h-1zM222 314h1v1h-1zM748 314h1v1h-1zM402 315h1v1h-1zM232 317h1v5h-1zM399 317h1v1h-1zM226 318h1v1h-1zM396 319h1v1h-1zM393 321h1v1h-1zM230 322h1v1h-1zM233 322h1v4h-1zM390 322h1v1h-1zM387 324h1v1h-1zM234 326h1v4h-1zM384 326h1v1h-1zM381 328h1v1h-1zM235 330h1v5h-1zM238 330h1v1h-1zM378 330h1v1h-1zM375 331h1v1h-1zM372 333h1v1h-1zM242 334h1v1h-1zM236 335h1v4h-1zM369 335h1v1h-1zM366 337h1v1h-1zM246 338h1v1h-1zM237 339h1v4h-1zM363 339h1v1h-1zM360 341h1v1h-1zM250 342h1v1h-1zM357 342h1v1h-1zM238 343h1v5h-1zM354 344h1v1h-1zM254 346h1v1h-1zM351 346h1v1h-1zM239 348h1v4h-1zM348 348h1v1h-1zM258 350h1v1h-1zM345 350h1v1h-1zM342 351h1v1h-1zM240 352h1v5h-1zM339 353h1v1h-1zM262 354h1v1h-1zM336 355h1v1h-1zM241 357h1v4h-1zM333 357h1v1h-1zM266 358h1v1h-1zM330 359h1v1h-1zM327 360h1v1h-1zM242 361h1v4h-1zM270 362h1v1h-1zM324 362h1v1h-1zM321 364h1v1h-1zM243 365h1v5h-1zM274 366h1v1h-1zM318 366h1v1h-1zM315 368h1v1h-1zM312 369h1v1h-1zM244 370h1v4h-1zM278 370h1v1h-1zM309 371h1v1h-1zM306 373h1v1h-1zM245 374h1v4h-1zM282 374h1v1h-1zM303 375h1v1h-1zM300 377h1v1h-1zM246 378h1v5h-1zM286 378h1v1h-1zM297 379h1v1h-1zM294 380h1v1h-1zM290 382h2v1h-2zM247 383h1v4h-1zM288 384h1v1h-1zM285 386h1v1h-1zM294 386h1v1h-1zM248 387h1v5h-1zM282 388h1v1h-1zM279 389h1v1h-1zM298 390h1v1h-1zM276 391h1v1h-1zM249 392h1v4h-1zM273 393h1v1h-1zM302 393h1v1h-1zM270 395h1v1h-1zM250 396h1v4h-1zM267 397h1v1h-1zM306 397h1v1h-1zM264 398h1v1h-1zM251 400h1v5h-1zM261 400h1v1h-1zM310 401h1v1h-1zM258 402h1v1h-1zM255 404h1v1h-1zM252 405h1v4h-1zM314 405h1v1h-1zM249 408h1v1h-1zM246 409h1v1h-1zM253 409h1v4h-1zM318 409h1v1h-1zM243 411h1v1h-1zM201 412h1v1h-1zM240 413h1v1h-1zM254 413h1v4h-1zM322 413h1v1h-1zM237 415h1v1h-1zM234 417h1v1h-1zM326 417h1v1h-1zM231 418h1v1h-1zM255 418h1v4h-1zM228 420h1v1h-1zM330 421h1v1h-1zM225 422h1v1h-1zM256 422h1v5h-1zM334 425h1v1h-1zM177 426h1v1h-1zM185 426h1v1h-1zM178 427h1v1h-1zM184 427h1v1h-1zM257 427h1v4h-1zM179 428h5v1h-5zM178 429h1v1h-1zM184 429h1v1h-1zM338 429h1v1h-1zM177 430h1v5h-1zM185 430h1v5h-1zM258 431h1v4h-1zM342 433h1v1h-1zM178 435h1v1h-1zM184 435h1v1h-1zM259 435h1v2h-1zM179 436h5v1h-5zM181 437h1v3h-1zM177 440h9v1h-9zM181 441h1v2h-1zM257 443h1v1h-1zM246 463h5v1h-5zM245 464h1v1h-1zM251 464h1v1h-1zM244 465h1v5h-1zM252 465h1v5h-1zM245 470h1v1h-1zM251 470h1v1h-1zM246 471h5v1h-5zM248 472h1v3h-1zM244 475h9v1h-9zM248 476h1v4h-1zM247 498h3v1h-3zM246 499h1v1h-1zM250 499h1v3h-1zM248 502h2v1h-2zM250 503h1v3h-1zM246 505h1v1h-1zM247 506h3v1h-3zM201 537h1v1h-1zM215 537h1v1h-1zM202 538h1v1h-1zM214 538h1v1h-1zM203 539h11v1h-11zM205 540h1v11h-1zM211 540h1v11h-1zM203 551h11v1h-11zM202 552h1v1h-1zM214 552h1v1h-1zM201 553h1v1h-1zM215 553h1v1h-1z"/><path fill="#0000ff" d="M315 112h5v1h-5zM314 113h1v1h-1zM320 113h2v1h-2zM313 114h1v1h-1zM322 114h1v1h-1zM314 115h1v1h-1zM323 115h1v1h-1zM315 116h1v1h-1zM324 116h1v2h-1zM332 116h1v5h-1zM337 116h3v1h-3zM344 116h1v5h-1zM316 117h1v2h-1zM336 117h1v3h-1zM340 117h1v3h-1zM325 118h1v5h-1zM317 119h1v3h-1zM337 120h3v1h-3zM333 121h1v2h-1zM343 121h1v2h-1zM316 122h1v2h-1zM324 123h1v2h-1zM334 123h2v1h-2zM341 123h2v1h-2zM315 124h1v1h-1zM336 124h5v1h-5zM314 125h1v1h-1zM323 125h1v1h-1zM338 125h1v3h-1zM494 125h1v1h-1zM498 125h1v1h-1zM502 125h1v1h-1zM313 126h1v1h-1zM322 126h1v1h-1zM495 126h1v1h-1zM497 126h1v1h-1zM499 126h1v1h-1zM501 126h1v1h-1zM503 126h1v1h-1zM314 127h1v1h-1zM320 127h2v1h-2zM496 127h1v13h-1zM500 127h1v13h-1zM504 127h1v13h-1zM315 128h5v1h-5zM334 128h9v1h-9zM338 129h1v4h-1zM434 136h3v1h-3zM509 136h1v1h-1zM433 137h1v3h-1zM437 137h1v3h-1zM508 137h3v1h-3zM747 137h3v1h-3zM509 138h1v2h-1zM745 138h2v1h-2zM750 138h2v1h-2zM744 139h1v1h-1zM749 139h1v2h-1zM752 139h1v2h-1zM434 140h3v1h-3zM505 140h1v1h-1zM508 140h1v1h-1zM745 140h2v1h-2zM433 141h1v3h-1zM437 141h1v3h-1zM506 141h2v1h-2zM744 141h1v2h-1zM747 141h1v2h-1zM750 141h2v1h-2zM752 142h1v1h-1zM745 143h2v1h-2zM750 143h2v1h-2zM434 144h3v1h-3zM747 144h3v1h-3zM312 150h1v1h-1zM329 153h1v1h-1zM173 158h1v2h-1zM179 158h1v2h-1zM185 158h1v2h-1zM328 158h1v1h-1zM172 160h3v1h-3zM177 160h5v1h-5zM184 160h3v1h-3zM173 161h1v2h-1zM179 161h1v5h-1zM185 161h1v2h-1zM327 161h1v1h-1zM174 163h1v2h-1zM184 163h1v2h-1zM327 164h1v1h-1zM175 165h2v1h-2zM182 165h2v1h-2zM177 166h5v1h-5zM179 167h1v3h-1zM326 167h1v1h-1zM175 170h9v1h-9zM325 170h1v1h-1zM179 171h1v4h-1zM324 173h1v1h-1zM324 176h1v1h-1zM744 176h1v1h-1zM746 176h1v1h-1zM748 176h1v1h-1zM745 177h1v7h-1zM747 177h1v7h-1zM749 177h1v7h-1zM323 179h1v1h-1zM322 182h1v1h-1zM752 182h1v2h-1zM750 184h2v1h-2zM321 185h1v1h-1zM199 188h1v1h-1zM321 188h1v1h-1zM320 191h1v1h-1zM319 194h1v1h-1zM318 197h1v1h-1zM45 199h1v1h-1zM61 199h1v1h-1zM46 200h1v1h-1zM60 200h1v1h-1zM318 200h1v1h-1zM47 201h1v1h-1zM59 201h1v1h-1zM48 202h1v2h-1zM58 202h1v2h-1zM317 203h1v1h-1zM49 204h1v3h-1zM57 204h1v3h-1zM316 206h1v1h-1zM45 207h17v1h-17zM49 208h1v3h-1zM57 208h1v3h-1zM315 209h1v1h-1zM48 211h1v2h-1zM58 211h1v2h-1zM315 212h1v1h-1zM47 213h1v1h-1zM59 213h1v1h-1zM46 214h1v1h-1zM60 214h1v1h-1zM45 215h1v1h-1zM61 215h1v1h-1zM314 215h1v1h-1zM746 216h1v1h-1zM749 216h1v1h-1zM752 216h1v1h-1zM745 217h2v1h-2zM748 217h2v1h-2zM751 217h1v1h-1zM313 218h1v1h-1zM745 218h1v1h-1zM747 218h2v1h-2zM750 218h2v1h-2zM744 219h1v1h-1zM747 219h1v1h-1zM750 219h1v1h-1zM312 221h1v1h-1zM746 221h1v1h-1zM749 221h1v1h-1zM752 221h1v1h-1zM745 222h2v1h-2zM748 222h2v1h-2zM751 222h1v1h-1zM745 223h1v1h-1zM747 223h2v1h-2zM750 223h2v1h-2zM312 224h1v1h-1zM744 224h1v1h-1zM747 224h1v1h-1zM750 224h1v1h-1zM311 227h1v1h-1zM96 229h1v1h-1zM103 229h3v1h-3zM95 230h2v1h-2zM102 230h1v1h-1zM106 230h1v3h-1zM310 230h1v1h-1zM94 231h1v1h-1zM96 231h1v6h-1zM105 233h1v1h-1zM309 233h1v1h-1zM104 234h1v1h-1zM103 235h1v1h-1zM102 236h1v1h-1zM309 236h1v1h-1zM94 237h5v1h-5zM102 237h5v1h-5zM308 239h1v1h-1zM307 242h1v1h-1zM306 245h1v1h-1zM746 246h3v1h-3zM745 247h1v1h-1zM749 247h1v1h-1zM306 248h1v1h-1zM746 248h1v1h-1zM750 248h1v1h-1zM747 249h1v3h-1zM751 249h1v3h-1zM305 251h1v1h-1zM746 252h1v1h-1zM750 252h1v1h-1zM745 253h1v1h-1zM749 253h1v1h-1zM304 254h1v1h-1zM746 254h3v1h-3zM304 257h1v1h-1zM303 260h1v1h-1zM302 263h1v1h-1zM301 266h1v1h-1zM301 269h1v1h-1zM300 272h1v1h-1zM299 275h1v1h-1zM298 278h1v1h-1zM298 281h1v1h-1zM297 284h1v1h-1zM296 287h1v1h-1zM295 290h1v1h-1zM295 293h1v1h-1zM294 296h1v1h-1zM293 299h1v1h-1zM292 302h1v1h-1zM292 305h1v1h-1zM291 308h1v1h-1zM290 311h1v1h-1zM289 314h1v1h-1zM745 316h1v1h-1zM748 316h1v1h-1zM751 316h1v1h-1zM289 317h1v1h-1zM744 317h2v1h-2zM747 317h3v1h-3zM751 317h2v1h-2zM745 318h1v1h-1zM748 318h1v2h-1zM751 318h1v1h-1zM746 319h1v1h-1zM750 319h1v1h-1zM288 320h1v1h-1zM747 320h3v1h-3zM748 321h1v1h-1zM746 322h5v1h-5zM287 323h1v1h-1zM748 323h1v2h-1zM286 326h1v1h-1zM745 326h1v3h-1zM748 326h1v1h-1zM751 326h1v3h-1zM747 327h1v1h-1zM749 327h1v1h-1zM748 328h1v1h-1zM286 329h1v1h-1zM746 329h1v1h-1zM750 329h1v1h-1zM747 330h3v1h-3zM748 331h1v1h-1zM285 332h1v1h-1zM746 332h5v1h-5zM748 333h1v2h-1zM284 335h1v1h-1zM283 338h1v1h-1zM283 341h1v1h-1zM282 344h1v1h-1zM281 347h1v1h-1zM281 350h1v1h-1zM280 353h1v1h-1zM279 356h1v1h-1zM278 359h1v1h-1zM278 362h1v1h-1zM277 365h1v1h-1zM276 368h1v1h-1zM275 371h1v1h-1zM275 374h1v1h-1zM274 377h1v1h-1zM273 380h1v1h-1zM272 383h1v1h-1zM272 386h1v1h-1zM271 389h1v1h-1zM270 392h1v1h-1zM269 395h1v1h-1zM269 398h1v1h-1zM268 401h1v1h-1zM267 404h1v1h-1zM266 407h1v1h-1zM266 410h1v1h-1zM265 413h1v1h-1zM264 416h1v1h-1zM263 422h1v1h-1zM262 425h1v1h-1zM261 428h1v1h-1zM260 431h1v1h-1zM260 434h1v1h-1zM336 501h1v4h-1zM339 501h1v4h-1zM336 505h5v1h-5zM339 506h1v4h-1zM339 551h5v1h-5zM336 552h3v1h-3zM344 552h1v1h-1zM335 553h1v1h-1zM345 553h3v1h-3zM334 554h1v1h-1zM344 554h1v1h-1zM348 554h1v1h-1zM333 555h1v1h-1zM343 555h1v3h-1zM349 555h1v3h-1zM335 557h3v1h-3zM334 558h1v1h-1zM338 558h1v1h-1zM344 558h1v1h-1zM348 558h1v1h-1zM333 559h1v3h-1zM339 559h1v3h-1zM345 559h3v1h-3zM348 561h1v1h-1zM334 562h1v1h-1zM338 562h1v1h-1zM347 562h1v1h-1zM335 563h3v1h-3zM346 563h1v1h-1zM338 564h1v1h-1zM344 564h2v1h-2zM339 565h5v1h-5z"/><path fill="#808080" d="M289 61h1v7h-1zM294 61h1v14h-1zM298 61h1v14h-1zM305 61h1v14h-1zM309 61h1v14h-1zM273 62h1v7h-1zM277 62h1v7h-1zM285 62h1v6h-1zM313 62h1v14h-1zM318 62h1v6h-1zM326 62h1v4h-1zM265 63h1v4h-1zM269 63h1v7h-1zM330 63h1v4h-1zM334 64h1v3h-1zM256 65h1v2h-1zM338 65h1v3h-1zM248 66h1v3h-1zM252 66h1v2h-1zM325 66h1v7h-1zM346 66h1v3h-1zM244 67h1v3h-1zM257 67h1v4h-1zM266 67h1v7h-1zM329 67h1v6h-1zM333 67h1v7h-1zM351 67h1v2h-1zM253 68h1v4h-1zM286 68h1v8h-1zM290 68h1v7h-1zM317 68h1v8h-1zM337 68h1v6h-1zM355 68h1v1h-1zM236 69h1v2h-1zM249 69h1v4h-1zM274 69h1v7h-1zM278 69h1v7h-1zM345 69h1v7h-1zM350 69h1v4h-1zM354 69h1v4h-1zM359 69h1v1h-1zM232 70h1v2h-1zM245 70h1v4h-1zM270 70h1v7h-1zM358 70h1v3h-1zM237 71h1v3h-1zM258 71h1v5h-1zM367 71h1v1h-1zM228 72h1v1h-1zM233 72h1v3h-1zM254 72h1v5h-1zM366 72h1v4h-1zM371 72h1v2h-1zM224 73h1v2h-1zM229 73h1v4h-1zM250 73h1v4h-1zM324 73h1v3h-1zM328 73h1v4h-1zM349 73h1v5h-1zM353 73h1v3h-1zM357 73h1v4h-1zM238 74h1v4h-1zM246 74h1v4h-1zM267 74h1v3h-1zM332 74h1v3h-1zM336 74h1v4h-1zM370 74h1v3h-1zM375 74h1v1h-1zM225 75h1v3h-1zM234 75h1v4h-1zM374 75h1v2h-1zM379 75h1v1h-1zM216 76h1v2h-1zM259 76h1v2h-1zM344 76h1v4h-1zM352 76h1v4h-1zM365 76h1v3h-1zM378 76h1v2h-1zM212 77h1v2h-1zM230 77h1v3h-1zM251 77h1v3h-1zM255 77h1v2h-1zM356 77h1v3h-1zM369 77h1v4h-1zM373 77h1v3h-1zM386 77h1v2h-1zM217 78h1v2h-1zM226 78h1v4h-1zM239 78h1v3h-1zM247 78h1v3h-1zM348 78h1v3h-1zM377 78h1v3h-1zM208 79h1v1h-1zM213 79h1v2h-1zM235 79h1v3h-1zM364 79h1v4h-1zM385 79h1v2h-1zM390 79h1v2h-1zM205 80h1v2h-1zM209 80h1v2h-1zM218 80h1v2h-1zM231 80h1v4h-1zM351 80h1v2h-1zM355 80h1v2h-1zM372 80h1v3h-1zM214 81h1v3h-1zM240 81h1v2h-1zM368 81h1v3h-1zM376 81h1v3h-1zM384 81h1v3h-1zM389 81h1v2h-1zM394 81h1v1h-1zM206 82h1v2h-1zM210 82h1v2h-1zM219 82h1v3h-1zM227 82h1v3h-1zM236 82h1v2h-1zM393 82h1v2h-1zM363 83h1v2h-1zM371 83h1v2h-1zM388 83h1v2h-1zM398 83h1v1h-1zM197 84h1v1h-1zM207 84h1v3h-1zM211 84h1v2h-1zM215 84h1v3h-1zM232 84h1v1h-1zM367 84h1v2h-1zM375 84h1v2h-1zM383 84h1v3h-1zM392 84h1v3h-1zM397 84h1v2h-1zM198 85h1v2h-1zM220 85h1v2h-1zM228 85h1v2h-1zM370 85h1v2h-1zM387 85h1v3h-1zM193 86h1v1h-1zM212 86h1v2h-1zM374 86h1v2h-1zM396 86h1v2h-1zM405 86h1v1h-1zM194 87h1v2h-1zM199 87h1v2h-1zM208 87h1v3h-1zM216 87h1v2h-1zM221 87h1v2h-1zM382 87h1v2h-1zM391 87h1v3h-1zM404 87h1v2h-1zM190 88h1v2h-1zM213 88h1v2h-1zM386 88h1v2h-1zM395 88h1v2h-1zM409 88h1v1h-1zM195 89h1v2h-1zM200 89h1v2h-1zM217 89h1v1h-1zM381 89h1v2h-1zM403 89h1v2h-1zM408 89h1v2h-1zM187 90h1v2h-1zM191 90h1v2h-1zM209 90h1v2h-1zM214 90h1v1h-1zM385 90h1v2h-1zM390 90h1v2h-1zM394 90h1v2h-1zM413 90h1v1h-1zM196 91h1v2h-1zM201 91h1v2h-1zM402 91h1v2h-1zM407 91h1v2h-1zM412 91h1v2h-1zM188 92h1v2h-1zM192 92h1v2h-1zM210 92h1v1h-1zM389 92h1v2h-1zM393 92h1v2h-1zM416 92h1v1h-1zM197 93h1v2h-1zM202 93h1v2h-1zM401 93h1v2h-1zM406 93h1v2h-1zM411 93h1v2h-1zM415 93h1v2h-1zM180 94h1v2h-1zM189 94h1v2h-1zM193 94h1v2h-1zM392 94h1v1h-1zM198 95h1v2h-1zM203 95h1v2h-1zM400 95h1v2h-1zM405 95h1v2h-1zM410 95h1v1h-1zM414 95h1v2h-1zM175 96h1v1h-1zM181 96h1v2h-1zM190 96h1v2h-1zM194 96h1v2h-1zM409 96h1v2h-1zM424 96h1v1h-1zM176 97h1v2h-1zM199 97h1v2h-1zM399 97h1v2h-1zM404 97h1v2h-1zM413 97h1v2h-1zM423 97h1v2h-1zM171 98h1v1h-1zM182 98h1v2h-1zM191 98h1v2h-1zM195 98h1v2h-1zM408 98h1v2h-1zM427 98h1v1h-1zM172 99h1v2h-1zM177 99h1v1h-1zM403 99h1v2h-1zM412 99h1v2h-1zM422 99h1v1h-1zM426 99h1v2h-1zM178 100h1v2h-1zM183 100h1v2h-1zM192 100h1v2h-1zM407 100h1v2h-1zM421 100h1v2h-1zM169 101h1v2h-1zM173 101h1v1h-1zM411 101h1v2h-1zM425 101h1v2h-1zM430 101h1v2h-1zM174 102h1v1h-1zM179 102h1v2h-1zM184 102h1v2h-1zM420 102h1v1h-1zM170 103h1v1h-1zM175 103h1v2h-1zM410 103h1v1h-1zM419 103h1v2h-1zM424 103h1v1h-1zM429 103h1v1h-1zM434 103h1v1h-1zM171 104h1v2h-1zM180 104h1v1h-1zM185 104h1v2h-1zM423 104h1v2h-1zM428 104h1v2h-1zM433 104h1v2h-1zM176 105h1v1h-1zM181 105h1v2h-1zM418 105h1v1h-1zM162 106h1v2h-1zM172 106h1v2h-1zM177 106h1v1h-1zM417 106h1v2h-1zM422 106h1v2h-1zM427 106h1v1h-1zM432 106h1v1h-1zM178 107h1v2h-1zM182 107h1v1h-1zM426 107h1v2h-1zM431 107h1v1h-1zM159 108h1v2h-1zM163 108h1v1h-1zM173 108h1v1h-1zM421 108h1v2h-1zM430 108h1v2h-1zM441 108h1v1h-1zM164 109h1v1h-1zM174 109h1v2h-1zM179 109h1v1h-1zM425 109h1v1h-1zM440 109h1v2h-1zM160 110h1v1h-1zM165 110h1v2h-1zM420 110h1v1h-1zM424 110h1v2h-1zM429 110h1v1h-1zM155 111h1v1h-1zM161 111h1v1h-1zM175 111h1v1h-1zM428 111h1v1h-1zM439 111h1v1h-1zM443 111h1v2h-1zM156 112h1v2h-1zM162 112h1v2h-1zM166 112h1v1h-1zM427 112h1v2h-1zM438 112h1v1h-1zM152 113h1v1h-1zM167 113h1v1h-1zM437 113h1v2h-1zM442 113h1v1h-1zM153 114h1v2h-1zM157 114h1v1h-1zM163 114h1v1h-1zM168 114h1v2h-1zM426 114h1v1h-1zM441 114h1v1h-1zM447 114h1v1h-1zM158 115h1v1h-1zM164 115h1v1h-1zM436 115h1v1h-1zM440 115h1v2h-1zM446 115h1v1h-1zM154 116h1v1h-1zM159 116h1v1h-1zM165 116h1v2h-1zM169 116h1v1h-1zM435 116h1v1h-1zM445 116h1v1h-1zM450 116h1v1h-1zM155 117h1v1h-1zM160 117h1v1h-1zM434 117h1v2h-1zM439 117h1v1h-1zM444 117h1v1h-1zM449 117h1v2h-1zM145 118h1v1h-1zM156 118h1v1h-1zM161 118h1v2h-1zM166 118h1v1h-1zM438 118h1v1h-1zM443 118h1v2h-1zM146 119h1v1h-1zM157 119h1v1h-1zM433 119h1v1h-1zM437 119h1v2h-1zM448 119h1v1h-1zM147 120h1v2h-1zM158 120h1v2h-1zM162 120h1v1h-1zM442 120h1v1h-1zM447 120h1v1h-1zM142 121h1v1h-1zM163 121h1v1h-1zM222 121h1v1h-1zM436 121h1v1h-1zM441 121h1v1h-1zM446 121h1v1h-1zM457 121h1v1h-1zM143 122h1v2h-1zM148 122h1v1h-1zM159 122h1v1h-1zM440 122h1v1h-1zM445 122h1v1h-1zM456 122h1v1h-1zM149 123h1v1h-1zM160 123h1v1h-1zM223 123h1v1h-1zM439 123h1v1h-1zM444 123h1v2h-1zM455 123h1v1h-1zM139 124h1v1h-1zM144 124h1v1h-1zM150 124h1v1h-1zM454 124h1v1h-1zM460 124h1v1h-1zM140 125h1v1h-1zM145 125h1v1h-1zM151 125h1v2h-1zM224 125h1v1h-1zM443 125h1v1h-1zM453 125h1v1h-1zM459 125h1v1h-1zM135 126h1v1h-1zM141 126h1v1h-1zM146 126h1v1h-1zM442 126h1v1h-1zM452 126h1v2h-1zM458 126h1v1h-1zM463 126h1v1h-1zM136 127h1v1h-1zM142 127h1v1h-1zM147 127h1v1h-1zM152 127h1v1h-1zM225 127h1v1h-1zM385 127h1v1h-1zM457 127h1v1h-1zM462 127h1v1h-1zM137 128h1v1h-1zM143 128h1v1h-1zM148 128h1v2h-1zM153 128h1v1h-1zM451 128h1v1h-1zM456 128h1v1h-1zM461 128h1v1h-1zM138 129h1v1h-1zM144 129h1v1h-1zM225 129h1v1h-1zM384 129h1v1h-1zM450 129h1v1h-1zM455 129h1v2h-1zM460 129h1v1h-1zM466 129h1v1h-1zM139 130h1v1h-1zM145 130h1v1h-1zM149 130h1v1h-1zM449 130h1v1h-1zM459 130h1v1h-1zM465 130h1v1h-1zM140 131h1v1h-1zM146 131h1v1h-1zM150 131h1v1h-1zM226 131h1v1h-1zM383 131h1v1h-1zM448 131h1v1h-1zM454 131h1v1h-1zM458 131h1v2h-1zM464 131h1v1h-1zM129 132h1v1h-1zM141 132h1v1h-1zM147 132h1v1h-1zM453 132h1v1h-1zM463 132h1v1h-1zM130 133h1v1h-1zM142 133h1v1h-1zM148 133h1v1h-1zM227 133h1v1h-1zM382 133h1v1h-1zM452 133h1v1h-1zM457 133h1v1h-1zM462 133h1v1h-1zM131 134h1v1h-1zM143 134h1v1h-1zM451 134h1v1h-1zM456 134h1v1h-1zM461 134h1v2h-1zM126 135h1v1h-1zM132 135h1v1h-1zM144 135h1v1h-1zM228 135h1v1h-1zM336 135h1v2h-1zM381 135h1v1h-1zM455 135h1v1h-1zM472 135h1v1h-1zM127 136h1v1h-1zM133 136h1v1h-1zM145 136h1v1h-1zM454 136h1v1h-1zM460 136h1v1h-1zM471 136h1v1h-1zM128 137h1v1h-1zM134 137h2v1h-2zM229 137h1v1h-1zM335 137h1v2h-1zM380 137h1v1h-1zM459 137h1v1h-1zM470 137h1v1h-1zM124 138h1v1h-1zM129 138h1v1h-1zM136 138h1v1h-1zM458 138h1v1h-1zM469 138h1v1h-1zM125 139h1v1h-1zM130 139h1v1h-1zM137 139h1v1h-1zM230 139h1v1h-1zM334 139h1v2h-1zM379 139h1v1h-1zM457 139h1v1h-1zM468 139h1v1h-1zM474 139h1v1h-1zM126 140h1v1h-1zM131 140h2v1h-2zM138 140h1v1h-1zM467 140h1v1h-1zM473 140h1v1h-1zM121 141h1v1h-1zM127 141h1v1h-1zM133 141h1v1h-1zM139 141h1v1h-1zM231 141h1v1h-1zM333 141h1v3h-1zM378 141h1v1h-1zM466 141h1v1h-1zM472 141h1v1h-1zM122 142h1v1h-1zM128 142h1v1h-1zM134 142h1v1h-1zM465 142h1v1h-1zM471 142h1v1h-1zM477 142h1v1h-1zM123 143h1v1h-1zM129 143h2v1h-2zM135 143h1v1h-1zM232 143h1v1h-1zM377 143h1v1h-1zM464 143h1v1h-1zM470 143h1v1h-1zM475 143h2v1h-2zM124 144h1v1h-1zM131 144h1v1h-1zM136 144h1v1h-1zM332 144h1v2h-1zM463 144h1v1h-1zM469 144h1v1h-1zM474 144h1v1h-1zM125 145h1v1h-1zM132 145h1v1h-1zM232 145h1v1h-1zM376 145h1v1h-1zM462 145h1v1h-1zM468 145h1v1h-1zM473 145h1v1h-1zM480 145h1v1h-1zM126 146h2v1h-2zM133 146h1v1h-1zM331 146h1v2h-1zM467 146h1v1h-1zM472 146h1v1h-1zM479 146h1v1h-1zM128 147h1v1h-1zM134 147h1v1h-1zM233 147h1v1h-1zM375 147h1v1h-1zM466 147h1v1h-1zM471 147h1v1h-1zM477 147h2v1h-2zM116 148h1v1h-1zM129 148h1v1h-1zM465 148h1v1h-1zM469 148h2v1h-2zM476 148h1v1h-1zM117 149h2v1h-2zM130 149h1v1h-1zM234 149h1v1h-1zM374 149h1v1h-1zM468 149h1v1h-1zM475 149h1v1h-1zM119 150h1v1h-1zM131 150h1v1h-1zM467 150h1v1h-1zM474 150h1v1h-1zM114 151h1v1h-1zM120 151h1v1h-1zM235 151h1v1h-1zM373 151h1v1h-1zM472 151h2v1h-2zM115 152h1v1h-1zM121 152h1v1h-1zM471 152h1v1h-1zM485 152h1v1h-1zM116 153h1v1h-1zM122 153h1v1h-1zM236 153h1v1h-1zM372 153h1v1h-1zM470 153h1v1h-1zM483 153h2v1h-2zM117 154h1v1h-1zM123 154h2v1h-2zM482 154h1v1h-1zM111 155h2v1h-2zM118 155h2v1h-2zM125 155h1v1h-1zM237 155h1v1h-1zM371 155h1v1h-1zM481 155h1v1h-1zM487 155h1v1h-1zM113 156h1v1h-1zM120 156h1v1h-1zM126 156h1v1h-1zM480 156h1v1h-1zM485 156h2v1h-2zM108 157h1v1h-1zM114 157h1v1h-1zM121 157h1v1h-1zM238 157h1v1h-1zM370 157h1v1h-1zM479 157h1v1h-1zM484 157h1v1h-1zM109 158h2v1h-2zM115 158h2v1h-2zM122 158h1v1h-1zM477 158h2v1h-2zM483 158h1v1h-1zM111 159h1v1h-1zM117 159h1v1h-1zM123 159h1v1h-1zM238 159h1v1h-1zM369 159h1v1h-1zM476 159h1v1h-1zM482 159h1v1h-1zM489 159h2v1h-2zM112 160h1v1h-1zM118 160h1v1h-1zM475 160h1v1h-1zM481 160h1v1h-1zM488 160h1v1h-1zM113 161h2v1h-2zM119 161h2v1h-2zM239 161h1v1h-1zM368 161h1v1h-1zM479 161h2v1h-2zM487 161h1v1h-1zM115 162h1v1h-1zM121 162h1v1h-1zM478 162h1v1h-1zM485 162h2v1h-2zM491 162h2v1h-2zM116 163h1v1h-1zM240 163h1v1h-1zM367 163h1v1h-1zM477 163h1v1h-1zM484 163h1v1h-1zM490 163h1v1h-1zM103 164h1v1h-1zM117 164h2v1h-2zM483 164h1v1h-1zM489 164h1v1h-1zM104 165h2v1h-2zM119 165h1v1h-1zM241 165h1v1h-1zM366 165h1v1h-1zM481 165h2v1h-2zM487 165h2v1h-2zM106 166h1v1h-1zM480 166h1v1h-1zM486 166h1v1h-1zM107 167h1v1h-1zM242 167h1v1h-1zM365 167h1v1h-1zM485 167h1v1h-1zM101 168h2v1h-2zM108 168h2v1h-2zM483 168h2v1h-2zM103 169h1v1h-1zM110 169h1v1h-1zM243 169h1v1h-1zM364 169h1v1h-1zM482 169h1v1h-1zM496 169h2v1h-2zM104 170h2v1h-2zM111 170h1v1h-1zM495 170h1v1h-1zM98 171h1v1h-1zM106 171h1v1h-1zM112 171h2v1h-2zM244 171h1v1h-1zM363 171h1v1h-1zM493 171h2v1h-2zM500 171h1v1h-1zM99 172h2v1h-2zM107 172h2v1h-2zM114 172h1v1h-1zM491 172h2v1h-2zM498 172h2v1h-2zM101 173h2v1h-2zM109 173h1v1h-1zM244 173h1v1h-1zM362 173h1v1h-1zM490 173h1v1h-1zM497 173h1v1h-1zM96 174h1v1h-1zM103 174h1v1h-1zM110 174h2v1h-2zM488 174h2v1h-2zM496 174h1v1h-1zM97 175h2v1h-2zM104 175h2v1h-2zM187 175h1v1h-1zM245 175h1v1h-1zM361 175h1v1h-1zM487 175h1v1h-1zM494 175h2v1h-2zM502 175h1v1h-1zM99 176h1v1h-1zM106 176h2v1h-2zM188 176h1v1h-1zM493 176h1v1h-1zM500 176h2v1h-2zM100 177h2v1h-2zM108 177h2v1h-2zM189 177h1v1h-1zM246 177h1v1h-1zM360 177h1v1h-1zM492 177h1v1h-1zM499 177h1v1h-1zM102 178h1v1h-1zM110 178h1v1h-1zM190 178h1v1h-1zM490 178h2v1h-2zM497 178h2v1h-2zM103 179h2v1h-2zM191 179h1v1h-1zM247 179h1v1h-1zM359 179h1v1h-1zM489 179h1v1h-1zM495 179h2v1h-2zM504 179h1v1h-1zM105 180h1v1h-1zM192 180h1v1h-1zM494 180h1v1h-1zM502 180h2v1h-2zM106 181h2v1h-2zM193 181h1v1h-1zM248 181h1v1h-1zM358 181h1v1h-1zM492 181h2v1h-2zM500 181h2v1h-2zM92 182h1v1h-1zM194 182h1v1h-1zM491 182h1v1h-1zM498 182h2v1h-2zM93 183h2v1h-2zM195 183h1v1h-1zM249 183h1v1h-1zM357 183h1v1h-1zM496 183h2v1h-2zM95 184h2v1h-2zM145 184h1v1h-1zM494 184h2v1h-2zM90 185h1v1h-1zM97 185h2v1h-2zM147 185h1v1h-1zM250 185h1v1h-1zM356 185h1v1h-1zM493 185h1v1h-1zM91 186h2v1h-2zM99 186h2v1h-2zM508 186h1v1h-1zM93 187h2v1h-2zM101 187h2v1h-2zM149 187h1v1h-1zM251 187h1v1h-1zM355 187h1v1h-1zM457 187h1v1h-1zM506 187h2v1h-2zM95 188h1v1h-1zM103 188h1v1h-1zM151 188h1v1h-1zM455 188h1v1h-1zM504 188h2v1h-2zM88 189h1v1h-1zM96 189h2v1h-2zM251 189h1v1h-1zM354 189h1v1h-1zM502 189h2v1h-2zM89 190h2v1h-2zM98 190h2v1h-2zM153 190h1v1h-1zM453 190h1v1h-1zM500 190h2v1h-2zM509 190h2v1h-2zM91 191h2v1h-2zM100 191h2v1h-2zM155 191h1v1h-1zM252 191h1v1h-1zM353 191h1v1h-1zM451 191h1v1h-1zM498 191h2v1h-2zM507 191h2v1h-2zM93 192h2v1h-2zM497 192h1v1h-1zM505 192h2v1h-2zM86 193h1v1h-1zM95 193h2v1h-2zM157 193h1v1h-1zM253 193h1v1h-1zM352 193h1v1h-1zM449 193h1v1h-1zM503 193h2v1h-2zM512 193h1v1h-1zM87 194h2v1h-2zM97 194h2v1h-2zM159 194h1v1h-1zM447 194h1v1h-1zM501 194h2v1h-2zM510 194h2v1h-2zM89 195h2v1h-2zM99 195h2v1h-2zM254 195h1v1h-1zM351 195h1v1h-1zM499 195h2v1h-2zM508 195h2v1h-2zM91 196h2v1h-2zM161 196h1v1h-1zM445 196h1v1h-1zM506 196h2v1h-2zM93 197h2v1h-2zM163 197h1v1h-1zM255 197h1v1h-1zM350 197h1v1h-1zM443 197h1v1h-1zM504 197h2v1h-2zM513 197h2v1h-2zM95 198h2v1h-2zM441 198h1v1h-1zM502 198h2v1h-2zM511 198h2v1h-2zM97 199h2v1h-2zM165 199h1v1h-1zM256 199h1v1h-1zM349 199h1v1h-1zM500 199h2v1h-2zM509 199h2v1h-2zM83 200h1v1h-1zM167 200h1v1h-1zM439 200h1v1h-1zM507 200h2v1h-2zM84 201h2v1h-2zM257 201h1v1h-1zM348 201h1v1h-1zM437 201h1v1h-1zM505 201h2v1h-2zM86 202h2v1h-2zM169 202h1v1h-1zM503 202h2v1h-2zM88 203h2v1h-2zM171 203h1v1h-1zM257 203h1v1h-1zM347 203h1v1h-1zM435 203h1v1h-1zM502 203h1v1h-1zM81 204h1v1h-1zM90 204h2v1h-2zM433 204h1v1h-1zM82 205h2v1h-2zM92 205h2v1h-2zM173 205h1v1h-1zM258 205h1v1h-1zM346 205h1v1h-1zM431 205h1v1h-1zM517 205h2v1h-2zM84 206h3v1h-3zM94 206h1v1h-1zM175 206h1v1h-1zM515 206h2v1h-2zM87 207h3v1h-3zM259 207h1v1h-1zM345 207h1v1h-1zM429 207h1v1h-1zM512 207h3v1h-3zM79 208h2v1h-2zM90 208h2v1h-2zM177 208h1v1h-1zM427 208h1v1h-1zM509 208h3v1h-3zM518 208h2v1h-2zM81 209h2v1h-2zM92 209h2v1h-2zM179 209h1v1h-1zM260 209h1v1h-1zM344 209h1v1h-1zM507 209h2v1h-2zM516 209h2v1h-2zM83 210h2v1h-2zM425 210h1v1h-1zM506 210h1v1h-1zM514 210h2v1h-2zM85 211h3v1h-3zM181 211h1v1h-1zM261 211h1v1h-1zM343 211h1v1h-1zM423 211h1v1h-1zM512 211h2v1h-2zM77 212h2v1h-2zM88 212h2v1h-2zM183 212h1v1h-1zM510 212h2v1h-2zM520 212h2v1h-2zM79 213h2v1h-2zM90 213h2v1h-2zM262 213h1v1h-1zM342 213h1v1h-1zM421 213h1v1h-1zM508 213h2v1h-2zM518 213h2v1h-2zM81 214h3v1h-3zM185 214h1v1h-1zM419 214h1v1h-1zM515 214h3v1h-3zM84 215h3v1h-3zM187 215h1v1h-1zM263 215h1v1h-1zM341 215h1v1h-1zM417 215h1v1h-1zM512 215h3v1h-3zM87 216h2v1h-2zM510 216h2v1h-2zM521 216h2v1h-2zM89 217h1v1h-1zM189 217h1v1h-1zM264 217h1v1h-1zM340 217h1v1h-1zM415 217h1v1h-1zM509 217h1v1h-1zM519 217h2v1h-2zM191 218h1v1h-1zM413 218h1v1h-1zM516 218h3v1h-3zM75 219h1v1h-1zM264 219h1v1h-1zM339 219h1v1h-1zM514 219h2v1h-2zM76 220h2v1h-2zM193 220h1v1h-1zM411 220h1v1h-1zM512 220h2v1h-2zM78 221h3v1h-3zM195 221h1v1h-1zM265 221h1v1h-1zM338 221h1v1h-1zM409 221h1v1h-1zM510 221h2v1h-2zM81 222h3v1h-3zM407 222h1v1h-1zM74 223h1v1h-1zM84 223h2v1h-2zM197 223h1v1h-1zM266 223h1v1h-1zM337 223h1v1h-1zM75 224h2v1h-2zM86 224h2v1h-2zM199 224h1v1h-1zM405 224h1v1h-1zM524 224h2v1h-2zM77 225h3v1h-3zM267 225h1v1h-1zM336 225h1v1h-1zM403 225h1v1h-1zM521 225h3v1h-3zM80 226h3v1h-3zM201 226h1v1h-1zM517 226h4v1h-4zM72 227h2v1h-2zM83 227h2v1h-2zM268 227h1v1h-1zM335 227h1v1h-1zM401 227h1v1h-1zM514 227h3v1h-3zM74 228h3v1h-3zM85 228h2v1h-2zM399 228h1v1h-1zM512 228h2v1h-2zM526 228h1v1h-1zM77 229h4v1h-4zM205 229h1v1h-1zM269 229h1v1h-1zM334 229h1v1h-1zM522 229h4v1h-4zM81 230h3v1h-3zM207 230h1v1h-1zM397 230h1v1h-1zM519 230h3v1h-3zM71 231h1v1h-1zM84 231h2v1h-2zM270 231h1v1h-1zM333 231h1v1h-1zM395 231h1v1h-1zM515 231h4v1h-4zM72 232h4v1h-4zM209 232h1v1h-1zM393 232h1v1h-1zM514 232h1v1h-1zM527 232h2v1h-2zM76 233h3v1h-3zM211 233h1v1h-1zM270 233h1v1h-1zM332 233h1v1h-1zM524 233h3v1h-3zM79 234h4v1h-4zM391 234h1v1h-1zM520 234h4v1h-4zM83 235h2v1h-2zM271 235h1v1h-1zM331 235h1v1h-1zM389 235h1v1h-1zM517 235h3v1h-3zM215 236h1v1h-1zM515 236h2v1h-2zM528 236h2v1h-2zM272 237h1v1h-1zM330 237h1v1h-1zM387 237h1v1h-1zM525 237h3v1h-3zM217 238h1v1h-1zM385 238h1v1h-1zM521 238h4v1h-4zM69 239h1v1h-1zM219 239h1v1h-1zM273 239h1v1h-1zM329 239h1v1h-1zM383 239h1v1h-1zM518 239h3v1h-3zM70 240h3v1h-3zM516 240h2v1h-2zM73 241h4v1h-4zM221 241h1v1h-1zM274 241h1v1h-1zM328 241h1v1h-1zM381 241h1v1h-1zM77 242h3v1h-3zM223 242h1v1h-1zM379 242h1v1h-1zM68 243h1v1h-1zM80 243h2v1h-2zM275 243h1v1h-1zM327 243h1v1h-1zM69 244h4v1h-4zM225 244h1v1h-1zM377 244h1v1h-1zM529 244h3v1h-3zM73 245h3v1h-3zM227 245h1v1h-1zM276 245h1v1h-1zM326 245h1v1h-1zM375 245h1v1h-1zM525 245h4v1h-4zM76 246h4v1h-4zM521 246h4v1h-4zM67 247h2v1h-2zM80 247h1v1h-1zM229 247h1v1h-1zM277 247h1v1h-1zM325 247h1v1h-1zM373 247h1v1h-1zM518 247h3v1h-3zM69 248h4v1h-4zM231 248h1v1h-1zM371 248h1v1h-1zM530 248h3v1h-3zM73 249h5v1h-5zM277 249h1v1h-1zM324 249h1v1h-1zM369 249h1v1h-1zM526 249h4v1h-4zM78 250h3v1h-3zM233 250h1v1h-1zM522 250h4v1h-4zM235 251h1v1h-1zM278 251h1v1h-1zM323 251h1v1h-1zM367 251h1v1h-1zM519 251h3v1h-3zM66 252h3v1h-3zM365 252h1v1h-1zM531 252h2v1h-2zM69 253h7v1h-7zM237 253h1v1h-1zM279 253h1v1h-1zM322 253h1v1h-1zM526 253h5v1h-5zM76 254h4v1h-4zM239 254h1v1h-1zM363 254h1v1h-1zM522 254h4v1h-4zM280 255h1v1h-1zM321 255h1v1h-1zM361 255h1v1h-1zM520 255h2v1h-2zM241 256h1v1h-1zM359 256h1v1h-1zM532 256h2v1h-2zM243 257h1v1h-1zM281 257h1v1h-1zM320 257h1v1h-1zM527 257h5v1h-5zM357 258h1v1h-1zM523 258h4v1h-4zM245 259h1v1h-1zM282 259h1v1h-1zM319 259h1v1h-1zM355 259h1v1h-1zM521 259h2v1h-2zM64 260h4v1h-4zM247 260h1v1h-1zM68 261h6v1h-6zM283 261h1v1h-1zM318 261h1v1h-1zM353 261h1v1h-1zM74 262h4v1h-4zM249 262h1v1h-1zM351 262h1v1h-1zM251 263h1v1h-1zM283 263h1v1h-1zM317 263h1v1h-1zM63 264h4v1h-4zM349 264h1v1h-1zM67 265h7v1h-7zM253 265h1v1h-1zM284 265h1v1h-1zM316 265h1v1h-1zM347 265h1v1h-1zM532 265h4v1h-4zM74 266h3v1h-3zM255 266h1v1h-1zM345 266h1v1h-1zM525 266h7v1h-7zM285 267h1v1h-1zM315 267h1v1h-1zM522 267h3v1h-3zM63 268h4v1h-4zM257 268h1v1h-1zM343 268h1v1h-1zM67 269h6v1h-6zM259 269h1v1h-1zM286 269h1v1h-1zM314 269h1v1h-1zM341 269h1v1h-1zM529 269h7v1h-7zM73 270h4v1h-4zM522 270h7v1h-7zM261 271h1v1h-1zM287 271h1v1h-1zM313 271h1v1h-1zM339 271h1v1h-1zM62 272h4v1h-4zM263 272h1v1h-1zM337 272h1v1h-1zM66 273h7v1h-7zM288 273h1v1h-1zM312 273h1v1h-1zM335 273h1v1h-1zM529 273h8v1h-8zM73 274h3v1h-3zM265 274h1v1h-1zM523 274h6v1h-6zM267 275h1v1h-1zM289 275h1v1h-1zM311 275h1v1h-1zM333 275h1v1h-1zM331 276h1v1h-1zM269 277h1v1h-1zM289 277h1v1h-1zM310 277h1v1h-1zM530 277h7v1h-7zM271 278h1v1h-1zM329 278h1v1h-1zM523 278h7v1h-7zM290 279h1v1h-1zM309 279h1v1h-1zM327 279h1v1h-1zM62 280h6v1h-6zM273 280h1v1h-1zM68 281h8v1h-8zM275 281h1v1h-1zM291 281h1v1h-1zM308 281h1v1h-1zM325 281h1v1h-1zM323 282h1v1h-1zM277 283h1v1h-1zM292 283h1v1h-1zM307 283h1v1h-1zM321 283h1v1h-1zM279 284h1v1h-1zM62 285h14v1h-14zM293 285h1v1h-1zM306 285h1v1h-1zM319 285h1v1h-1zM530 285h7v1h-7zM281 286h1v1h-1zM317 286h1v1h-1zM523 286h7v1h-7zM283 287h1v1h-1zM294 287h1v1h-1zM305 287h1v1h-1zM315 288h1v1h-1zM61 289h14v1h-14zM285 289h1v1h-1zM295 289h1v1h-1zM304 289h1v1h-1zM313 289h1v1h-1zM460 289h7v1h-7zM531 289h7v1h-7zM287 290h1v1h-1zM311 290h1v1h-1zM454 290h6v1h-6zM524 290h7v1h-7zM296 291h1v1h-1zM303 291h1v1h-1zM289 292h1v1h-1zM309 292h1v1h-1zM61 293h14v1h-14zM291 293h1v1h-1zM296 293h1v1h-1zM302 293h1v1h-1zM307 293h1v1h-1zM524 294h14v1h-14zM293 295h1v1h-1zM297 295h1v1h-1zM301 295h1v1h-1zM305 295h1v1h-1zM295 296h1v1h-1zM303 296h1v1h-1zM298 297h1v1h-1zM300 297h1v1h-1zM297 298h1v1h-1zM301 298h1v1h-1zM524 298h14v1h-14zM299 299h1v1h-1zM61 300h14v1h-14zM297 300h1v1h-1zM301 300h1v1h-1zM298 301h1v1h-1zM300 301h1v1h-1zM295 302h1v1h-1zM303 302h1v1h-1zM293 303h1v1h-1zM297 303h1v1h-1zM301 303h1v1h-1zM305 303h1v1h-1zM61 304h14v1h-14zM291 305h1v1h-1zM296 305h1v1h-1zM302 305h1v1h-1zM307 305h1v1h-1zM524 305h14v1h-14zM289 306h1v1h-1zM309 306h1v1h-1zM295 307h1v1h-1zM302 307h1v1h-1zM68 308h7v1h-7zM287 308h1v1h-1zM311 308h1v1h-1zM61 309h7v1h-7zM285 309h1v1h-1zM294 309h1v1h-1zM303 309h1v1h-1zM313 309h1v1h-1zM524 309h14v1h-14zM283 310h1v1h-1zM293 311h1v1h-1zM304 311h1v1h-1zM315 311h1v1h-1zM68 312h8v1h-8zM281 312h1v1h-1zM317 312h1v1h-1zM62 313h6v1h-6zM279 313h1v1h-1zM292 313h1v1h-1zM305 313h1v1h-1zM523 313h14v1h-14zM319 314h1v1h-1zM277 315h1v1h-1zM291 315h1v1h-1zM306 315h1v1h-1zM321 315h1v1h-1zM275 316h1v1h-1zM273 317h1v1h-1zM290 317h1v1h-1zM307 317h1v1h-1zM323 317h1v1h-1zM523 317h7v1h-7zM325 318h1v1h-1zM530 318h7v1h-7zM271 319h1v1h-1zM289 319h1v1h-1zM308 319h1v1h-1zM69 320h7v1h-7zM269 320h1v1h-1zM327 320h1v1h-1zM62 321h7v1h-7zM288 321h1v1h-1zM309 321h1v1h-1zM329 321h1v1h-1zM267 322h1v1h-1zM265 323h1v1h-1zM309 323h1v1h-1zM331 323h1v1h-1zM69 324h7v1h-7zM333 324h1v1h-1zM523 324h3v1h-3zM62 325h7v1h-7zM263 325h1v1h-1zM286 325h1v1h-1zM310 325h1v1h-1zM526 325h7v1h-7zM261 326h1v1h-1zM335 326h1v1h-1zM533 326h4v1h-4zM259 327h1v1h-1zM285 327h1v1h-1zM311 327h1v1h-1zM337 327h1v1h-1zM70 328h7v1h-7zM522 328h4v1h-4zM63 329h7v1h-7zM257 329h1v1h-1zM284 329h1v1h-1zM312 329h1v1h-1zM339 329h1v1h-1zM526 329h6v1h-6zM255 330h1v1h-1zM341 330h1v1h-1zM532 330h4v1h-4zM74 331h3v1h-3zM283 331h1v1h-1zM313 331h1v1h-1zM67 332h7v1h-7zM253 332h1v1h-1zM343 332h1v1h-1zM522 332h3v1h-3zM63 333h4v1h-4zM251 333h1v1h-1zM282 333h1v1h-1zM314 333h1v1h-1zM345 333h1v1h-1zM525 333h7v1h-7zM249 334h1v1h-1zM532 334h3v1h-3zM281 335h1v1h-1zM315 335h1v1h-1zM347 335h1v1h-1zM247 336h1v1h-1zM349 336h1v1h-1zM521 336h4v1h-4zM245 337h1v1h-1zM280 337h1v1h-1zM315 337h1v1h-1zM525 337h6v1h-6zM351 338h1v1h-1zM531 338h3v1h-3zM76 339h3v1h-3zM147 339h3v1h-3zM243 339h1v1h-1zM279 339h1v1h-1zM316 339h1v1h-1zM353 339h1v1h-1zM71 340h5v1h-5zM143 340h4v1h-4zM241 340h1v1h-1zM67 341h4v1h-4zM139 341h4v1h-4zM278 341h1v1h-1zM317 341h1v1h-1zM355 341h1v1h-1zM65 342h2v1h-2zM137 342h2v1h-2zM239 342h1v1h-1zM77 343h3v1h-3zM237 343h1v1h-1zM277 343h1v1h-1zM318 343h1v1h-1zM72 344h5v1h-5zM235 344h1v1h-1zM359 344h1v1h-1zM519 344h4v1h-4zM68 345h4v1h-4zM276 345h1v1h-1zM319 345h1v1h-1zM361 345h1v1h-1zM523 345h7v1h-7zM66 346h2v1h-2zM233 346h1v1h-1zM530 346h3v1h-3zM77 347h3v1h-3zM231 347h1v1h-1zM275 347h1v1h-1zM320 347h1v1h-1zM363 347h1v1h-1zM73 348h4v1h-4zM365 348h1v1h-1zM518 348h3v1h-3zM69 349h4v1h-4zM229 349h1v1h-1zM274 349h1v1h-1zM321 349h1v1h-1zM521 349h4v1h-4zM67 350h2v1h-2zM227 350h1v1h-1zM367 350h1v1h-1zM525 350h5v1h-5zM78 351h3v1h-3zM225 351h1v1h-1zM273 351h1v1h-1zM321 351h1v1h-1zM369 351h1v1h-1zM517 351h2v1h-2zM530 351h2v1h-2zM74 352h4v1h-4zM519 352h4v1h-4zM70 353h4v1h-4zM223 353h1v1h-1zM272 353h1v1h-1zM322 353h1v1h-1zM371 353h1v1h-1zM523 353h3v1h-3zM68 354h2v1h-2zM221 354h1v1h-1zM373 354h1v1h-1zM526 354h4v1h-4zM271 355h1v1h-1zM323 355h1v1h-1zM517 355h2v1h-2zM530 355h1v1h-1zM219 356h1v1h-1zM375 356h1v1h-1zM519 356h3v1h-3zM217 357h1v1h-1zM270 357h1v1h-1zM324 357h1v1h-1zM377 357h1v1h-1zM522 357h4v1h-4zM81 358h2v1h-2zM526 358h3v1h-3zM78 359h3v1h-3zM215 359h1v1h-1zM269 359h1v1h-1zM325 359h1v1h-1zM379 359h1v1h-1zM529 359h1v1h-1zM74 360h4v1h-4zM213 360h1v1h-1zM381 360h1v1h-1zM71 361h3v1h-3zM211 361h1v1h-1zM268 361h1v1h-1zM326 361h1v1h-1zM69 362h2v1h-2zM82 362h2v1h-2zM383 362h1v1h-1zM79 363h3v1h-3zM209 363h1v1h-1zM267 363h1v1h-1zM327 363h1v1h-1zM385 363h1v1h-1zM514 363h2v1h-2zM75 364h4v1h-4zM207 364h1v1h-1zM516 364h4v1h-4zM72 365h3v1h-3zM266 365h1v1h-1zM328 365h1v1h-1zM387 365h1v1h-1zM520 365h3v1h-3zM70 366h2v1h-2zM84 366h2v1h-2zM205 366h1v1h-1zM389 366h1v1h-1zM523 366h4v1h-4zM80 367h4v1h-4zM203 367h1v1h-1zM265 367h1v1h-1zM328 367h1v1h-1zM513 367h2v1h-2zM527 367h1v1h-1zM77 368h3v1h-3zM201 368h1v1h-1zM391 368h1v1h-1zM515 368h3v1h-3zM73 369h4v1h-4zM264 369h1v1h-1zM329 369h1v1h-1zM393 369h1v1h-1zM518 369h4v1h-4zM72 370h1v1h-1zM85 370h2v1h-2zM199 370h1v1h-1zM512 370h2v1h-2zM522 370h3v1h-3zM82 371h3v1h-3zM197 371h1v1h-1zM263 371h1v1h-1zM330 371h1v1h-1zM395 371h1v1h-1zM514 371h2v1h-2zM525 371h2v1h-2zM78 372h4v1h-4zM397 372h1v1h-1zM516 372h3v1h-3zM75 373h3v1h-3zM195 373h1v1h-1zM262 373h1v1h-1zM331 373h1v1h-1zM519 373h3v1h-3zM73 374h2v1h-2zM193 374h1v1h-1zM399 374h1v1h-1zM511 374h2v1h-2zM522 374h2v1h-2zM261 375h1v1h-1zM332 375h1v1h-1zM401 375h1v1h-1zM513 375h2v1h-2zM524 375h1v1h-1zM191 376h1v1h-1zM515 376h3v1h-3zM87 377h2v1h-2zM189 377h1v1h-1zM260 377h1v1h-1zM333 377h1v1h-1zM403 377h1v1h-1zM518 377h3v1h-3zM85 378h2v1h-2zM187 378h1v1h-1zM405 378h1v1h-1zM521 378h2v1h-2zM82 379h3v1h-3zM259 379h1v1h-1zM334 379h1v1h-1zM523 379h1v1h-1zM80 380h2v1h-2zM185 380h1v1h-1zM407 380h1v1h-1zM78 381h2v1h-2zM89 381h2v1h-2zM183 381h1v1h-1zM258 381h1v1h-1zM334 381h1v1h-1zM409 381h1v1h-1zM508 381h2v1h-2zM76 382h2v1h-2zM87 382h2v1h-2zM510 382h2v1h-2zM84 383h3v1h-3zM181 383h1v1h-1zM257 383h1v1h-1zM335 383h1v1h-1zM411 383h1v1h-1zM512 383h3v1h-3zM81 384h3v1h-3zM90 384h1v1h-1zM179 384h1v1h-1zM413 384h1v1h-1zM515 384h3v1h-3zM79 385h2v1h-2zM88 385h2v1h-2zM177 385h1v1h-1zM256 385h1v1h-1zM336 385h1v1h-1zM507 385h2v1h-2zM518 385h2v1h-2zM77 386h2v1h-2zM86 386h2v1h-2zM415 386h1v1h-1zM509 386h2v1h-2zM520 386h2v1h-2zM84 387h2v1h-2zM175 387h1v1h-1zM255 387h1v1h-1zM337 387h1v1h-1zM417 387h1v1h-1zM511 387h2v1h-2zM82 388h2v1h-2zM92 388h1v1h-1zM173 388h1v1h-1zM513 388h3v1h-3zM80 389h2v1h-2zM90 389h2v1h-2zM254 389h1v1h-1zM338 389h1v1h-1zM419 389h1v1h-1zM505 389h2v1h-2zM516 389h2v1h-2zM79 390h1v1h-1zM87 390h3v1h-3zM171 390h1v1h-1zM421 390h1v1h-1zM507 390h2v1h-2zM518 390h2v1h-2zM84 391h3v1h-3zM169 391h1v1h-1zM253 391h1v1h-1zM339 391h1v1h-1zM509 391h3v1h-3zM82 392h2v1h-2zM423 392h1v1h-1zM504 392h1v1h-1zM512 392h3v1h-3zM81 393h1v1h-1zM167 393h1v1h-1zM252 393h1v1h-1zM340 393h1v1h-1zM425 393h1v1h-1zM505 393h2v1h-2zM515 393h2v1h-2zM165 394h1v1h-1zM507 394h2v1h-2zM517 394h1v1h-1zM95 395h2v1h-2zM163 395h1v1h-1zM251 395h1v1h-1zM341 395h1v1h-1zM427 395h1v1h-1zM509 395h2v1h-2zM93 396h2v1h-2zM429 396h1v1h-1zM511 396h2v1h-2zM91 397h2v1h-2zM161 397h1v1h-1zM341 397h1v1h-1zM513 397h2v1h-2zM89 398h2v1h-2zM159 398h1v1h-1zM431 398h1v1h-1zM515 398h1v1h-1zM87 399h2v1h-2zM97 399h2v1h-2zM249 399h1v1h-1zM342 399h1v1h-1zM433 399h1v1h-1zM500 399h1v1h-1zM85 400h2v1h-2zM95 400h2v1h-2zM157 400h1v1h-1zM501 400h2v1h-2zM84 401h1v1h-1zM93 401h2v1h-2zM155 401h1v1h-1zM248 401h1v1h-1zM343 401h1v1h-1zM435 401h1v1h-1zM503 401h2v1h-2zM91 402h2v1h-2zM153 402h1v1h-1zM437 402h1v1h-1zM505 402h2v1h-2zM89 403h2v1h-2zM98 403h2v1h-2zM247 403h1v1h-1zM344 403h1v1h-1zM498 403h1v1h-1zM507 403h2v1h-2zM87 404h2v1h-2zM96 404h2v1h-2zM151 404h1v1h-1zM439 404h1v1h-1zM499 404h2v1h-2zM509 404h2v1h-2zM86 405h1v1h-1zM94 405h2v1h-2zM149 405h1v1h-1zM246 405h1v1h-1zM345 405h1v1h-1zM441 405h1v1h-1zM501 405h2v1h-2zM511 405h2v1h-2zM92 406h2v1h-2zM100 406h2v1h-2zM503 406h2v1h-2zM90 407h2v1h-2zM98 407h2v1h-2zM147 407h1v1h-1zM245 407h1v1h-1zM346 407h1v1h-1zM443 407h1v1h-1zM497 407h2v1h-2zM505 407h2v1h-2zM88 408h2v1h-2zM96 408h2v1h-2zM145 408h1v1h-1zM445 408h1v1h-1zM499 408h2v1h-2zM507 408h2v1h-2zM94 409h2v1h-2zM347 409h1v1h-1zM501 409h1v1h-1zM509 409h2v1h-2zM92 410h2v1h-2zM143 410h1v1h-1zM447 410h1v1h-1zM502 410h2v1h-2zM90 411h2v1h-2zM141 411h1v1h-1zM347 411h1v1h-1zM449 411h1v1h-1zM495 411h2v1h-2zM504 411h2v1h-2zM497 412h2v1h-2zM506 412h2v1h-2zM104 413h2v1h-2zM242 413h1v1h-1zM348 413h1v1h-1zM451 413h1v1h-1zM499 413h2v1h-2zM508 413h1v1h-1zM102 414h2v1h-2zM453 414h1v1h-1zM501 414h2v1h-2zM100 415h2v1h-2zM241 415h1v1h-1zM349 415h1v1h-1zM503 415h2v1h-2zM98 416h2v1h-2zM107 416h1v1h-1zM505 416h2v1h-2zM96 417h2v1h-2zM105 417h2v1h-2zM240 417h1v1h-1zM350 417h1v1h-1zM491 417h2v1h-2zM94 418h2v1h-2zM104 418h1v1h-1zM493 418h1v1h-1zM102 419h2v1h-2zM109 419h1v1h-1zM239 419h1v1h-1zM351 419h1v1h-1zM494 419h2v1h-2zM100 420h2v1h-2zM107 420h2v1h-2zM488 420h1v1h-1zM496 420h1v1h-1zM99 421h1v1h-1zM106 421h1v1h-1zM238 421h1v1h-1zM352 421h1v1h-1zM489 421h2v1h-2zM497 421h2v1h-2zM97 422h2v1h-2zM105 422h1v1h-1zM491 422h2v1h-2zM499 422h1v1h-1zM96 423h1v1h-1zM103 423h2v1h-2zM111 423h1v1h-1zM237 423h1v1h-1zM353 423h1v1h-1zM493 423h1v1h-1zM500 423h2v1h-2zM102 424h1v1h-1zM109 424h2v1h-2zM487 424h2v1h-2zM494 424h2v1h-2zM502 424h1v1h-1zM101 425h1v1h-1zM108 425h1v1h-1zM236 425h1v1h-1zM354 425h1v1h-1zM489 425h1v1h-1zM496 425h2v1h-2zM99 426h2v1h-2zM106 426h2v1h-2zM484 426h1v1h-1zM490 426h2v1h-2zM498 426h2v1h-2zM98 427h1v1h-1zM104 427h2v1h-2zM235 427h1v1h-1zM354 427h1v1h-1zM485 427h2v1h-2zM492 427h1v1h-1zM500 427h1v1h-1zM103 428h1v1h-1zM487 428h1v1h-1zM493 428h2v1h-2zM101 429h2v1h-2zM116 429h1v1h-1zM234 429h1v1h-1zM355 429h1v1h-1zM488 429h1v1h-1zM495 429h1v1h-1zM114 430h2v1h-2zM489 430h2v1h-2zM496 430h2v1h-2zM113 431h1v1h-1zM233 431h1v1h-1zM356 431h1v1h-1zM491 431h1v1h-1zM112 432h1v1h-1zM118 432h1v1h-1zM492 432h1v1h-1zM110 433h2v1h-2zM116 433h2v1h-2zM232 433h1v1h-1zM357 433h1v1h-1zM479 433h1v1h-1zM493 433h2v1h-2zM109 434h1v1h-1zM115 434h1v1h-1zM480 434h2v1h-2zM495 434h1v1h-1zM108 435h1v1h-1zM114 435h1v1h-1zM121 435h1v1h-1zM231 435h1v1h-1zM358 435h1v1h-1zM482 435h1v1h-1zM106 436h2v1h-2zM112 436h2v1h-2zM120 436h1v1h-1zM477 436h1v1h-1zM483 436h1v1h-1zM111 437h1v1h-1zM118 437h2v1h-2zM230 437h1v1h-1zM359 437h1v1h-1zM478 437h2v1h-2zM484 437h2v1h-2zM110 438h1v1h-1zM117 438h1v1h-1zM123 438h1v1h-1zM480 438h1v1h-1zM486 438h1v1h-1zM108 439h2v1h-2zM116 439h1v1h-1zM122 439h1v1h-1zM229 439h1v1h-1zM360 439h1v1h-1zM475 439h1v1h-1zM481 439h1v1h-1zM487 439h1v1h-1zM115 440h1v1h-1zM120 440h2v1h-2zM476 440h1v1h-1zM482 440h2v1h-2zM488 440h2v1h-2zM114 441h1v1h-1zM119 441h1v1h-1zM228 441h1v1h-1zM360 441h1v1h-1zM477 441h1v1h-1zM484 441h1v1h-1zM490 441h1v1h-1zM112 442h2v1h-2zM118 442h1v1h-1zM472 442h1v1h-1zM478 442h1v1h-1zM485 442h1v1h-1zM111 443h1v1h-1zM117 443h1v1h-1zM227 443h1v1h-1zM361 443h1v1h-1zM473 443h1v1h-1zM479 443h1v1h-1zM486 443h2v1h-2zM116 444h1v1h-1zM474 444h2v1h-2zM480 444h2v1h-2zM114 445h2v1h-2zM128 445h1v1h-1zM226 445h1v1h-1zM362 445h1v1h-1zM476 445h1v1h-1zM482 445h1v1h-1zM113 446h1v1h-1zM127 446h1v1h-1zM477 446h1v1h-1zM483 446h1v1h-1zM125 447h2v1h-2zM225 447h1v1h-1zM363 447h1v1h-1zM478 447h1v1h-1zM484 447h1v1h-1zM124 448h1v1h-1zM131 448h1v1h-1zM467 448h1v1h-1zM479 448h1v1h-1zM123 449h1v1h-1zM130 449h1v1h-1zM224 449h1v1h-1zM364 449h1v1h-1zM468 449h1v1h-1zM480 449h2v1h-2zM122 450h1v1h-1zM128 450h2v1h-2zM133 450h1v1h-1zM469 450h1v1h-1zM482 450h1v1h-1zM120 451h2v1h-2zM127 451h1v1h-1zM132 451h1v1h-1zM223 451h1v1h-1zM365 451h1v1h-1zM464 451h1v1h-1zM470 451h1v1h-1zM119 452h1v1h-1zM126 452h1v1h-1zM131 452h1v1h-1zM465 452h1v1h-1zM471 452h1v1h-1zM118 453h1v1h-1zM125 453h1v1h-1zM130 453h1v1h-1zM136 453h1v1h-1zM222 453h1v1h-1zM366 453h1v1h-1zM466 453h1v1h-1zM472 453h2v1h-2zM124 454h1v1h-1zM129 454h1v1h-1zM135 454h1v1h-1zM462 454h1v1h-1zM467 454h1v1h-1zM474 454h1v1h-1zM122 455h2v1h-2zM128 455h1v1h-1zM134 455h1v1h-1zM221 455h1v1h-1zM366 455h1v1h-1zM463 455h1v1h-1zM468 455h1v1h-1zM475 455h1v1h-1zM121 456h1v1h-1zM127 456h1v1h-1zM133 456h1v1h-1zM464 456h1v1h-1zM469 456h2v1h-2zM476 456h1v1h-1zM126 457h1v1h-1zM132 457h1v1h-1zM220 457h1v1h-1zM367 457h1v1h-1zM459 457h1v1h-1zM465 457h1v1h-1zM471 457h1v1h-1zM477 457h1v1h-1zM125 458h1v1h-1zM131 458h1v1h-1zM460 458h1v1h-1zM466 458h1v1h-1zM472 458h1v1h-1zM124 459h1v1h-1zM130 459h1v1h-1zM141 459h1v1h-1zM219 459h1v1h-1zM368 459h1v1h-1zM461 459h1v1h-1zM467 459h2v1h-2zM473 459h1v1h-1zM129 460h1v1h-1zM140 460h1v1h-1zM462 460h1v1h-1zM469 460h1v1h-1zM474 460h1v1h-1zM128 461h1v1h-1zM139 461h1v1h-1zM218 461h1v1h-1zM369 461h1v1h-1zM463 461h1v1h-1zM470 461h1v1h-1zM127 462h1v1h-1zM138 462h1v1h-1zM144 462h1v1h-1zM453 462h1v1h-1zM464 462h2v1h-2zM471 462h1v1h-1zM126 463h1v1h-1zM137 463h1v1h-1zM143 463h1v1h-1zM217 463h1v1h-1zM370 463h1v1h-1zM454 463h1v1h-1zM466 463h1v1h-1zM472 463h1v1h-1zM136 464h1v2h-1zM142 464h1v1h-1zM147 464h1v1h-1zM455 464h1v1h-1zM467 464h1v1h-1zM141 465h1v1h-1zM146 465h1v1h-1zM216 465h1v1h-1zM371 465h1v1h-1zM450 465h1v1h-1zM456 465h1v1h-1zM468 465h1v1h-1zM135 466h1v1h-1zM140 466h1v1h-1zM145 466h1v1h-1zM451 466h1v1h-1zM457 466h1v1h-1zM469 466h1v1h-1zM134 467h1v1h-1zM139 467h1v2h-1zM144 467h1v1h-1zM150 467h1v1h-1zM215 467h1v1h-1zM372 467h1v1h-1zM448 467h1v1h-1zM452 467h1v1h-1zM458 467h1v1h-1zM133 468h1v1h-1zM143 468h1v1h-1zM149 468h1v1h-1zM449 468h1v1h-1zM453 468h1v1h-1zM459 468h1v1h-1zM132 469h1v1h-1zM138 469h1v1h-1zM142 469h1v2h-1zM148 469h1v1h-1zM214 469h1v1h-1zM373 469h1v1h-1zM450 469h1v2h-1zM454 469h1v1h-1zM460 469h1v1h-1zM137 470h1v1h-1zM147 470h1v1h-1zM445 470h1v1h-1zM455 470h1v1h-1zM461 470h1v1h-1zM136 471h1v1h-1zM141 471h1v1h-1zM146 471h1v1h-1zM213 471h1v1h-1zM373 471h1v1h-1zM446 471h1v1h-1zM451 471h1v1h-1zM456 471h1v1h-1zM462 471h1v1h-1zM135 472h1v1h-1zM140 472h1v1h-1zM145 472h1v2h-1zM156 472h1v1h-1zM447 472h1v2h-1zM452 472h1v1h-1zM457 472h1v1h-1zM463 472h1v1h-1zM139 473h1v1h-1zM155 473h1v1h-1zM374 473h1v1h-1zM453 473h1v1h-1zM458 473h1v1h-1zM138 474h1v1h-1zM144 474h1v1h-1zM154 474h1v2h-1zM448 474h1v1h-1zM454 474h1v1h-1zM459 474h1v1h-1zM143 475h1v1h-1zM159 475h1v1h-1zM375 475h1v1h-1zM438 475h1v1h-1zM449 475h1v1h-1zM455 475h1v2h-1zM142 476h1v1h-1zM153 476h1v1h-1zM158 476h1v1h-1zM439 476h1v1h-1zM450 476h1v1h-1zM141 477h1v1h-1zM152 477h1v1h-1zM157 477h1v1h-1zM162 477h1v1h-1zM376 477h1v1h-1zM435 477h1v1h-1zM440 477h1v2h-1zM451 477h1v2h-1zM456 477h1v1h-1zM151 478h1v1h-1zM156 478h1v1h-1zM161 478h1v2h-1zM436 478h1v1h-1zM150 479h1v1h-1zM155 479h1v1h-1zM165 479h1v1h-1zM437 479h1v2h-1zM441 479h1v1h-1zM452 479h1v1h-1zM149 480h1v2h-1zM154 480h1v2h-1zM160 480h1v1h-1zM164 480h1v2h-1zM432 480h1v1h-1zM442 480h1v1h-1zM453 480h1v1h-1zM159 481h1v1h-1zM433 481h1v2h-1zM438 481h1v1h-1zM443 481h1v1h-1zM148 482h1v1h-1zM153 482h1v1h-1zM158 482h1v2h-1zM163 482h1v1h-1zM429 482h1v1h-1zM439 482h1v1h-1zM444 482h1v1h-1zM152 483h1v1h-1zM162 483h1v1h-1zM430 483h1v2h-1zM434 483h1v1h-1zM440 483h1v1h-1zM445 483h1v2h-1zM151 484h1v1h-1zM157 484h1v1h-1zM161 484h1v2h-1zM172 484h1v1h-1zM435 484h1v1h-1zM441 484h1v1h-1zM156 485h1v1h-1zM171 485h1v2h-1zM431 485h1v1h-1zM436 485h1v2h-1zM442 485h1v2h-1zM446 485h1v1h-1zM155 486h1v2h-1zM160 486h1v1h-1zM432 486h1v1h-1zM159 487h1v1h-1zM170 487h1v1h-1zM174 487h1v2h-1zM423 487h1v1h-1zM433 487h1v2h-1zM437 487h1v1h-1zM443 487h1v1h-1zM158 488h1v2h-1zM169 488h1v1h-1zM178 488h1v1h-1zM424 488h1v2h-1zM438 488h1v1h-1zM168 489h1v2h-1zM173 489h1v1h-1zM177 489h1v2h-1zM419 489h1v1h-1zM434 489h1v1h-1zM439 489h1v2h-1zM157 490h1v1h-1zM172 490h1v2h-1zM420 490h1v2h-1zM425 490h1v1h-1zM435 490h1v1h-1zM167 491h1v1h-1zM176 491h1v2h-1zM181 491h1v2h-1zM416 491h1v1h-1zM426 491h1v2h-1zM436 491h1v2h-1zM166 492h1v1h-1zM171 492h1v1h-1zM417 492h1v2h-1zM421 492h1v1h-1zM165 493h1v2h-1zM170 493h1v2h-1zM175 493h1v1h-1zM180 493h1v1h-1zM413 493h1v1h-1zM422 493h1v1h-1zM427 493h1v2h-1zM174 494h1v2h-1zM179 494h1v2h-1zM414 494h1v2h-1zM418 494h1v1h-1zM423 494h1v2h-1zM164 495h1v1h-1zM169 495h1v1h-1zM187 495h1v2h-1zM419 495h1v2h-1zM428 495h1v1h-1zM168 496h1v2h-1zM173 496h1v2h-1zM178 496h1v1h-1zM415 496h1v2h-1zM424 496h1v1h-1zM429 496h1v2h-1zM177 497h1v2h-1zM186 497h1v2h-1zM191 497h1v2h-1zM406 497h1v1h-1zM420 497h1v2h-1zM425 497h1v1h-1zM172 498h1v2h-1zM195 498h1v1h-1zM407 498h1v2h-1zM416 498h1v2h-1zM426 498h1v2h-1zM176 499h1v1h-1zM185 499h1v2h-1zM190 499h1v2h-1zM194 499h1v2h-1zM403 499h1v2h-1zM421 499h1v1h-1zM171 500h1v1h-1zM175 500h1v2h-1zM199 500h1v1h-1zM399 500h1v2h-1zM408 500h1v2h-1zM417 500h1v2h-1zM422 500h1v2h-1zM427 500h1v1h-1zM184 501h1v2h-1zM189 501h1v1h-1zM193 501h1v2h-1zM198 501h1v2h-1zM404 501h1v2h-1zM174 502h1v1h-1zM188 502h1v2h-1zM395 502h1v1h-1zM400 502h1v2h-1zM409 502h1v2h-1zM418 502h1v2h-1zM423 502h1v1h-1zM183 503h1v2h-1zM192 503h1v2h-1zM197 503h1v2h-1zM396 503h1v2h-1zM405 503h1v2h-1zM187 504h1v2h-1zM206 504h1v1h-1zM401 504h1v2h-1zM410 504h1v2h-1zM419 504h1v1h-1zM182 505h1v2h-1zM191 505h1v2h-1zM196 505h1v2h-1zM205 505h1v2h-1zM209 505h1v2h-1zM397 505h1v2h-1zM406 505h1v2h-1zM186 506h1v2h-1zM388 506h1v1h-1zM402 506h1v2h-1zM411 506h1v2h-1zM190 507h1v2h-1zM195 507h1v2h-1zM204 507h1v2h-1zM208 507h1v2h-1zM213 507h1v2h-1zM389 507h1v2h-1zM398 507h1v2h-1zM407 507h1v2h-1zM185 508h1v1h-1zM381 508h1v2h-1zM385 508h1v2h-1zM403 508h1v2h-1zM412 508h1v1h-1zM189 509h1v2h-1zM194 509h1v2h-1zM203 509h1v2h-1zM207 509h1v3h-1zM212 509h1v2h-1zM217 509h1v1h-1zM390 509h1v3h-1zM399 509h1v2h-1zM408 509h1v2h-1zM216 510h1v2h-1zM377 510h1v2h-1zM382 510h1v2h-1zM386 510h1v2h-1zM404 510h1v2h-1zM193 511h1v2h-1zM202 511h1v2h-1zM211 511h1v2h-1zM224 511h1v2h-1zM400 511h1v2h-1zM206 512h1v3h-1zM215 512h1v3h-1zM228 512h1v2h-1zM370 512h1v2h-1zM378 512h1v2h-1zM383 512h1v3h-1zM387 512h1v2h-1zM391 512h1v3h-1zM405 512h1v1h-1zM201 513h1v2h-1zM210 513h1v3h-1zM223 513h1v2h-1zM231 513h1v2h-1zM366 513h1v2h-1zM401 513h1v2h-1zM227 514h1v2h-1zM235 514h1v2h-1zM371 514h1v3h-1zM379 514h1v2h-1zM388 514h1v2h-1zM200 515h1v1h-1zM205 515h1v2h-1zM214 515h1v3h-1zM222 515h1v3h-1zM230 515h1v3h-1zM362 515h1v2h-1zM367 515h1v4h-1zM384 515h1v3h-1zM392 515h1v2h-1zM209 516h1v2h-1zM226 516h1v3h-1zM234 516h1v4h-1zM358 516h1v2h-1zM380 516h1v3h-1zM389 516h1v2h-1zM204 517h1v1h-1zM243 517h1v2h-1zM363 517h1v3h-1zM372 517h1v4h-1zM393 517h1v1h-1zM208 518h1v2h-1zM213 518h1v2h-1zM221 518h1v3h-1zM229 518h1v4h-1zM247 518h1v1h-1zM250 518h1v3h-1zM351 518h1v3h-1zM359 518h1v3h-1zM385 518h1v2h-1zM390 518h1v2h-1zM225 519h1v3h-1zM242 519h1v3h-1zM246 519h1v4h-1zM254 519h1v4h-1zM343 519h1v3h-1zM347 519h1v3h-1zM368 519h1v3h-1zM381 519h1v2h-1zM212 520h1v2h-1zM233 520h1v3h-1zM339 520h1v3h-1zM364 520h1v4h-1zM386 520h1v2h-1zM220 521h1v2h-1zM249 521h1v4h-1zM262 521h1v4h-1zM352 521h1v4h-1zM360 521h1v4h-1zM373 521h1v3h-1zM382 521h1v2h-1zM224 522h1v2h-1zM228 522h1v3h-1zM241 522h1v4h-1zM266 522h1v3h-1zM270 522h1v4h-1zM328 522h1v7h-1zM331 522h1v3h-1zM344 522h1v4h-1zM348 522h1v4h-1zM369 522h1v4h-1zM219 523h1v1h-1zM232 523h1v4h-1zM245 523h1v3h-1zM253 523h1v7h-1zM274 523h1v3h-1zM281 523h1v7h-1zM285 523h1v14h-1zM312 523h1v7h-1zM320 523h1v7h-1zM324 523h1v6h-1zM340 523h1v4h-1zM223 524h1v1h-1zM289 524h1v14h-1zM293 524h1v14h-1zM300 524h1v14h-1zM304 524h1v14h-1zM308 524h1v7h-1zM365 524h1v3h-1zM374 524h1v2h-1zM227 525h1v2h-1zM248 525h1v5h-1zM261 525h1v6h-1zM265 525h1v7h-1zM332 525h1v7h-1zM353 525h1v4h-1zM361 525h1v3h-1zM240 526h1v3h-1zM244 526h1v4h-1zM269 526h1v6h-1zM273 526h1v7h-1zM345 526h1v5h-1zM349 526h1v4h-1zM370 526h1v1h-1zM231 527h1v1h-1zM341 527h1v5h-1zM366 527h1v2h-1zM362 528h1v2h-1zM239 529h1v1h-1zM325 529h1v8h-1zM329 529h1v7h-1zM354 529h1v2h-1zM243 530h1v1h-1zM247 530h1v2h-1zM252 530h1v3h-1zM280 530h1v7h-1zM313 530h1v7h-1zM321 530h1v7h-1zM350 530h1v2h-1zM260 531h1v4h-1zM309 531h1v7h-1zM346 531h1v2h-1zM264 532h1v4h-1zM268 532h1v4h-1zM333 532h1v4h-1zM342 532h1v2h-1zM272 533h1v4h-1z"/><path fill="#ffff00" d="M251 32h1v1h-1zM257 32h1v2h-1zM260 32h4v1h-4zM250 33h2v1h-2zM259 33h1v1h-1zM264 33h1v1h-1zM249 34h1v1h-1zM251 34h1v7h-1zM257 34h2v1h-2zM265 34h1v3h-1zM256 35h1v1h-1zM259 35h1v1h-1zM255 36h1v5h-1zM260 36h1v1h-1zM261 37h1v1h-1zM264 37h1v1h-1zM262 38h2v1h-2zM263 39h1v1h-1zM264 40h1v1h-1zM252 41h1v1h-1zM254 41h1v1h-1zM265 41h1v5h-1zM253 42h1v5h-1zM264 46h1v1h-1zM263 47h1v1h-1zM256 89h1v1h-1zM263 89h3v1h-3zM255 90h2v1h-2zM262 90h1v7h-1zM266 90h1v7h-1zM254 91h1v1h-1zM256 91h1v6h-1zM254 97h5v1h-5zM263 97h3v1h-3zM292 111h1v1h-1zM300 111h1v1h-1zM304 111h4v1h-4zM292 112h2v1h-2zM299 112h2v1h-2zM303 112h1v15h-1zM308 112h1v2h-1zM292 113h1v15h-1zM294 113h1v1h-1zM298 113h1v1h-1zM300 113h1v15h-1zM295 114h1v1h-1zM297 114h1v1h-1zM296 115h1v13h-1zM745 116h1v1h-1zM751 116h1v1h-1zM746 117h1v1h-1zM750 117h1v1h-1zM747 118h3v1h-3zM746 119h1v1h-1zM750 119h1v1h-1zM745 120h1v3h-1zM751 120h1v3h-1zM746 123h1v1h-1zM750 123h1v1h-1zM747 124h3v1h-3zM308 125h1v2h-1zM304 127h4v1h-4zM303 149h1v1h-1zM303 155h1v1h-1zM305 155h1v1h-1zM307 156h1v1h-1zM309 156h1v1h-1zM311 156h1v1h-1zM315 156h1v1h-1zM747 156h3v1h-3zM319 157h1v1h-1zM323 157h1v1h-1zM746 157h1v1h-1zM750 157h1v1h-1zM327 158h1v1h-1zM745 158h1v3h-1zM751 158h1v3h-1zM746 161h1v2h-1zM750 161h1v2h-1zM744 162h1v1h-1zM745 163h1v1h-1zM751 163h1v1h-1zM752 164h1v1h-1zM745 196h1v1h-1zM748 196h1v1h-1zM750 196h2v1h-2zM744 197h2v1h-2zM748 197h2v1h-2zM752 197h1v3h-1zM745 198h1v2h-1zM747 198h1v2h-1zM749 198h1v1h-1zM750 199h1v1h-1zM746 200h1v4h-1zM751 200h1v1h-1zM752 201h1v3h-1zM751 204h1v1h-1zM747 296h1v1h-1zM745 297h5v1h-5zM747 298h1v2h-1zM749 299h2v1h-2zM747 300h2v1h-2zM751 300h1v2h-1zM747 301h1v3h-1zM750 302h1v2h-1zM751 304h1v1h-1zM497 361h3v1h-3zM496 362h1v3h-1zM500 362h1v1h-1zM496 365h4v1h-4zM496 366h1v3h-1zM500 366h1v3h-1zM497 369h3v1h-3zM537 383h1v1h-1zM541 383h1v1h-1zM545 383h1v1h-1zM538 384h1v1h-1zM540 384h1v1h-1zM542 384h1v1h-1zM544 384h1v1h-1zM546 384h1v1h-1zM539 385h1v13h-1zM543 385h1v13h-1zM547 385h1v3h-1zM551 385h1v1h-1zM550 386h2v1h-2zM549 387h1v1h-1zM551 387h1v9h-1zM547 388h2v1h-2zM547 389h1v7h-1zM548 396h1v1h-1zM550 396h1v1h-1zM549 397h1v1h-1zM548 398h1v1h-1zM550 398h1v1h-1zM547 399h1v1h-1zM551 399h1v1h-1zM346 441h1v1h-1zM162 454h3v1h-3zM161 455h1v1h-1zM165 455h1v3h-1zM90 457h1v1h-1zM102 457h1v1h-1zM91 458h1v2h-1zM101 458h1v2h-1zM164 458h1v1h-1zM163 459h1v1h-1zM92 460h2v1h-2zM99 460h2v1h-2zM162 460h1v1h-1zM94 461h5v1h-5zM161 461h1v1h-1zM92 462h2v1h-2zM99 462h2v1h-2zM161 462h5v1h-5zM353 462h1v2h-1zM91 463h1v2h-1zM101 463h1v2h-1zM349 464h9v1h-9zM90 465h1v4h-1zM102 465h1v4h-1zM353 465h1v5h-1zM357 468h3v1h-3zM91 469h1v2h-1zM101 469h1v2h-1zM356 469h1v1h-1zM360 469h1v1h-1zM353 470h3v1h-3zM361 470h1v3h-1zM92 471h2v1h-2zM99 471h2v1h-2zM353 471h1v6h-1zM94 472h5v1h-5zM360 473h1v1h-1zM359 474h1v3h-1zM360 477h1v1h-1zM361 478h1v1h-1z"/><path fill="#00ffff" d="M205 407h3v1h-3zM208 408h5v1h-5zM213 409h5v1h-5zM218 410h5v1h-5zM223 411h5v1h-5zM228 412h5v1h-5zM233 413h5v1h-5zM238 414h5v1h-5zM243 415h4v1h-4zM249 416h4v1h-4zM253 417h5v1h-5zM258 418h5v1h-5zM263 419h5v1h-5zM268 420h5v1h-5zM273 421h4v1h-4zM277 422h5v1h-5zM282 423h5v1h-5zM287 424h5v1h-5zM292 425h5v1h-5zM297 426h5v1h-5zM302 427h5v1h-5zM307 428h5v1h-5zM312 429h5v1h-5zM317 430h5v1h-5zM322 431h5v1h-5zM327 432h5v1h-5zM332 433h5v1h-5zM337 434h5v1h-5zM342 435h3v1h-3z"/><path fill="#008080" d="M747 336h3v1h-3zM123 337h5v1h-5zM746 337h1v1h-1zM750 337h1v1h-1zM122 338h1v1h-1zM128 338h1v1h-1zM154 338h1v1h-1zM745 338h1v3h-1zM751 338h1v3h-1zM121 339h1v1h-1zM129 339h1v1h-1zM120 340h1v1h-1zM130 340h1v1h-1zM119 341h1v5h-1zM131 341h1v5h-1zM746 341h1v1h-1zM750 341h1v1h-1zM745 342h2v1h-2zM750 342h2v1h-2zM744 343h1v1h-1zM746 343h1v1h-1zM750 343h1v1h-1zM752 343h1v1h-1zM745 344h1v1h-1zM751 344h1v1h-1zM120 346h1v1h-1zM130 346h1v1h-1zM121 347h1v2h-1zM129 347h1v2h-1zM119 349h3v1h-3zM129 349h3v1h-3zM118 350h1v1h-1zM121 350h1v2h-1zM129 350h1v2h-1zM132 350h1v1h-1zM117 351h1v1h-1zM133 351h1v1h-1zM118 352h1v1h-1zM120 352h1v1h-1zM130 352h1v1h-1zM132 352h1v1h-1zM119 353h1v1h-1zM131 353h1v1h-1z"/></svg><svg width="0" height="0" style="position:absolute"><filter id="crisp" x="0" y="0" width="1" height="1"><feComponentTransfer><feFuncA type="linear" slope="1"/></feComponentTransfer></filter></svg><div id="sb"><div class="t" style="top:7px"><span style="color:#ffffff">Astrolog 5.40</span></div><div class="t" style="top:17px"><span style="color:#c0c0c0">&quot;Anonymous&quot;</span></div><div class="t" style="top:27px"><span style="color:#c0c0c0">Thu May 26, 2005</span></div><div class="t" style="top:37px"><span style="color:#c0c0c0"> 2:02am (ST +8:00 GMT)</span></div><div class="t" style="top:47px"><span style="color:#c0c0c0">&quot;Taiwan&quot;</span></div><div class="t" style="top:57px"><span style="color:#c0c0c0">120°17E 22°38N</span></div><div class="t" style="top:67px"><span style="color:#c0c0c0">Placidus houses.</span></div><div class="t" style="top:77px"><span style="color:#c0c0c0">Tropical, Geocentric.</span></div><div class="t" style="top:87px"><span style="color:#c0c0c0">Julian Day = 2453516.2514</span></div><div class="t" style="top:107px"><span style="color:#ff0000"> 1st house:</span><span style="color:#ff0000">  5Ari35</span></div><div class="t" style="top:117px"><span style="color:#ffff00"> 2nd house:</span><span style="color:#ffff00"> 10Tau56</span></div><div class="t" style="top:127px"><span style="color:#00ff00"> 3rd house:</span><span style="color:#00ff00">  9Gem06</span></div><div class="t" style="top:137px"><span style="color:#0000ff"> 4th house:</span><span style="color:#0000ff">  3Can51</span></div><div class="t" style="top:147px"><span style="color:#ff0000"> 5th house:</span><span style="color:#0000ff"> 29Can06</span></div><div class="t" style="top:157px"><span style="color:#ffff00"> 6th house:</span><span style="color:#ff0000"> 28Leo41</span></div><div class="t" style="top:167px"><span style="color:#00ff00"> 7th house:</span><span style="color:#00ff00">  5Lib35</span></div><div class="t" style="top:177px"><span style="color:#0000ff"> 8th house:</span><span style="color:#0000ff"> 10Sco56</span></div><div class="t" style="top:187px"><span style="color:#ff0000"> 9th house:</span><span style="color:#ff0000">  9Sag06</span></div><div class="t" style="top:197px"><span style="color:#ffff00">10th house:</span><span style="color:#ffff00">  3Cap51</span></div><div class="t" style="top:207px"><span style="color:#00ff00">11th house:</span><span style="color:#ffff00"> 29Cap06</span></div><div class="t" style="top:217px"><span style="color:#0000ff">12th house:</span><span style="color:#00ff00"> 28Aqu41</span></div><div class="t" style="top:237px"><span style="color:#ff0000"> Sun:</span><span style="color:#00ff00">  4Gem37</span><span style="color:#ffffff"> </span><span style="color:#c0c0c0"> - 0°00&#x27;</span></div><div class="t" style="top:247px"><span style="color:#0000ff">Moon:</span><span style="color:#ffff00">  0Cap30</span><span style="color:#ffffff"> </span><span style="color:#c0c0c0"> - 4°47&#x27;</span></div><div class="t" style="top:257px"><span style="color:#00ff00">Merc:</span><span style="color:#ffff00"> 24Tau23</span><span style="color:#ffffff"> </span><span style="color:#c0c0c0"> - 0°50&#x27;</span></div><div class="t" style="top:267px"><span style="color:#00ff00">Venu:</span><span style="color:#00ff00"> 19Gem08</span><span style="color:#ffffff"> </span><span style="color:#c0c0c0"> + 0°35&#x27;</span></div><div class="t" style="top:277px"><span style="color:#ff0000">Mars:</span><span style="color:#0000ff"> 17Pis46</span><span style="color:#ffffff"> </span><span style="color:#c0c0c0"> - 2°02&#x27;</span></div><div class="t" style="top:287px"><span style="color:#ff0000">Jupi:</span><span style="color:#00ff00">  9Lib06</span><span style="color:#ffffff">R</span><span style="color:#c0c0c0"> + 1°28&#x27;</span></div><div class="t" style="top:297px"><span style="color:#ffff00">Satu:</span><span style="color:#0000ff"> 23Can53</span><span style="color:#ffffff"> </span><span style="color:#c0c0c0"> + 0°12&#x27;</span></div><div class="t" style="top:307px"><span style="color:#00ff00">Uran:</span><span style="color:#0000ff"> 10Pis36</span><span style="color:#ffffff"> </span><span style="color:#c0c0c0"> - 0°46&#x27;</span></div><div class="t" style="top:317px"><span style="color:#0000ff">Nept:</span><span style="color:#00ff00"> 17Aqu36</span><span style="color:#ffffff">R</span><span style="color:#c0c0c0"> - 0°07&#x27;</span></div><div class="t" style="top:327px"><span style="color:#0000ff">Plut:</span><span style="color:#ff0000"> 23Sag41</span><span style="color:#ffffff">R</span><span style="color:#c0c0c0"> + 8°18&#x27;</span></div><div class="t" style="top:337px"><span style="color:#008080">Node:</span><span style="color:#ff0000"> 20Ari39</span><span style="color:#ffffff">R</span><span style="color:#c0c0c0"> + 0°00&#x27;</span></div><div class="t" style="top:357px"><span style="color:#c0c0c0">Fire: 3, Earth: 3,</span></div><div class="t" style="top:367px"><span style="color:#c0c0c0">Air : 4, Water: 3</span></div><div class="t" style="top:377px"><span style="color:#c0c0c0">Car: 6, Fix: 2, Mut: 5</span></div><div class="t" style="top:387px"><span style="color:#c0c0c0">Yang: 7, Yin: 6</span></div><div class="t" style="top:397px"><span style="color:#c0c0c0">M: 6, N: 5, A: 7, D: 4</span></div><div class="t" style="top:407px"><span style="color:#c0c0c0">Ang: 3, Suc: 3, Cad: 5</span></div><div class="t" style="top:417px"><span style="color:#c0c0c0">Learn: 6, Share: 7</span></div></div></div></body></html>
